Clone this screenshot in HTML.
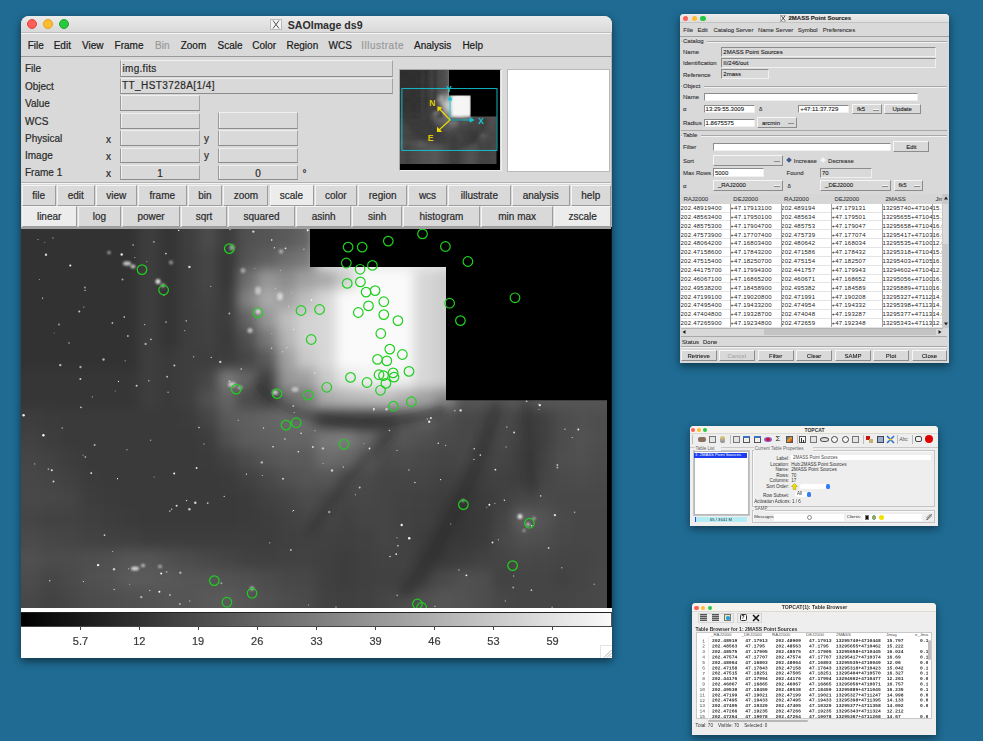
<!DOCTYPE html><html><head><meta charset="utf-8"><style>
html,body{margin:0;padding:0;overflow:hidden;}
body{width:983px;height:741px;overflow:hidden;background:#1f6b93;position:relative;font-family:"Liberation Sans", sans-serif;}
div{box-sizing:border-box;}
</style></head><body>
<div style="-webkit-text-stroke:0.2px currentColor">
<div style="position:absolute;left:21px;top:16px;width:591px;height:642px;border-radius:8px 8px 0 0;box-shadow:0 3px 9px 0px rgba(0,0,0,0.55);background:#d9d9d9;"></div>
<div style="position:absolute;left:21px;top:16px;width:591px;height:17px;border-radius:8px 8px 0 0;background:linear-gradient(#ebebeb,#d9d9d9);border-bottom:1px solid #bdbdbd;"></div>
<div style="position:absolute;left:27.1px;top:19.2px;width:10px;height:10px;border-radius:50%;background:#fe5f57;border:0.6px solid #e2463f;"></div>
<div style="position:absolute;left:43px;top:19.2px;width:10px;height:10px;border-radius:50%;background:#febc2e;border:0.6px solid #e1a116;"></div>
<div style="position:absolute;left:58.8px;top:19.2px;width:10px;height:10px;border-radius:50%;background:#28c840;border:0.6px solid #1aab29;"></div>
<svg style="position:absolute;left:270px;top:19px" width="12" height="11" viewBox="0 0 12 11"><rect x="0.5" y="0.5" width="11" height="10" fill="#f4f4f4" stroke="#bbb" stroke-width="1"/><path d="M3 1.5 L9 9.5 M9 1.5 L3 9.5" stroke="#555" stroke-width="1"/></svg>
<div style="position:absolute;left:287.8px;top:20px;font-size:10.6px;line-height:10.6px;color:#2e2e2e;white-space:pre;font-weight:bold;-webkit-text-stroke:0;">SAOImage ds9</div>
<div style="position:absolute;left:21px;top:33px;width:591px;height:24px;background:#d9d9d9;border-bottom:1px solid #9a9a9a;border-top:1px solid #f6f6f6;"></div>
<div style="position:absolute;left:27.7px;top:41.3px;font-size:10px;line-height:10px;color:#1a1a1a;white-space:pre;">File</div>
<div style="position:absolute;left:53.7px;top:41.3px;font-size:10px;line-height:10px;color:#1a1a1a;white-space:pre;">Edit</div>
<div style="position:absolute;left:82px;top:41.3px;font-size:10px;line-height:10px;color:#1a1a1a;white-space:pre;">View</div>
<div style="position:absolute;left:114.6px;top:41.3px;font-size:10px;line-height:10px;color:#1a1a1a;white-space:pre;">Frame</div>
<div style="position:absolute;left:155px;top:41.3px;font-size:10px;line-height:10px;color:#9a9a9a;white-space:pre;">Bin</div>
<div style="position:absolute;left:180.7px;top:41.3px;font-size:10px;line-height:10px;color:#1a1a1a;white-space:pre;">Zoom</div>
<div style="position:absolute;left:217.5px;top:41.3px;font-size:10px;line-height:10px;color:#1a1a1a;white-space:pre;">Scale</div>
<div style="position:absolute;left:252.3px;top:41.3px;font-size:10px;line-height:10px;color:#1a1a1a;white-space:pre;">Color</div>
<div style="position:absolute;left:286.5px;top:41.3px;font-size:10px;line-height:10px;color:#1a1a1a;white-space:pre;">Region</div>
<div style="position:absolute;left:328.6px;top:41.3px;font-size:10px;line-height:10px;color:#1a1a1a;white-space:pre;">WCS</div>
<div style="position:absolute;left:361.2px;top:41.3px;font-size:10px;line-height:10px;color:#9a9a9a;white-space:pre;letter-spacing:0.5px;">Illustrate</div>
<div style="position:absolute;left:414px;top:41.3px;font-size:10px;line-height:10px;color:#1a1a1a;white-space:pre;">Analysis</div>
<div style="position:absolute;left:462.4px;top:41.3px;font-size:10px;line-height:10px;color:#1a1a1a;white-space:pre;">Help</div>
<div style="position:absolute;left:25px;top:64.0px;font-size:10px;line-height:10px;color:#2a2a2a;white-space:pre;">File</div>
<div style="position:absolute;left:25px;top:81.7px;font-size:10px;line-height:10px;color:#2a2a2a;white-space:pre;">Object</div>
<div style="position:absolute;left:25px;top:98.6px;font-size:10px;line-height:10px;color:#2a2a2a;white-space:pre;">Value</div>
<div style="position:absolute;left:25px;top:116.5px;font-size:10px;line-height:10px;color:#2a2a2a;white-space:pre;">WCS</div>
<div style="position:absolute;left:25px;top:134.0px;font-size:10px;line-height:10px;color:#2a2a2a;white-space:pre;">Physical</div>
<div style="position:absolute;left:25px;top:151.0px;font-size:10px;line-height:10px;color:#2a2a2a;white-space:pre;">Image</div>
<div style="position:absolute;left:25px;top:168.2px;font-size:10px;line-height:10px;color:#2a2a2a;white-space:pre;">Frame 1</div>
<div style="position:absolute;left:119.5px;top:59.5px;width:273px;height:17px;background:#d9d9d9;border-top:1px solid #efefef;border-left:1px solid #9a9a9a;border-bottom:1px solid #8c8c8c;border-right:1px solid #a4a4a4;box-shadow:inset 1px 0 0 #efefef;"></div>
<div style="position:absolute;left:119.5px;top:77.5px;width:273px;height:16.5px;background:#d9d9d9;border-top:1px solid #efefef;border-left:1px solid #9a9a9a;border-bottom:1px solid #8c8c8c;border-right:1px solid #a4a4a4;box-shadow:inset 1px 0 0 #efefef;"></div>
<div style="position:absolute;left:122.5px;top:63.8px;font-size:10px;line-height:10px;color:#2a2a2a;white-space:pre;letter-spacing:0.3px;">img.fits</div>
<div style="position:absolute;left:122px;top:81.3px;font-size:10px;line-height:10px;color:#2a2a2a;white-space:pre;letter-spacing:0.42px;">TT_HST3728A[1/4]</div>
<div style="position:absolute;left:119.5px;top:95px;width:80.5px;height:15.5px;background:#d9d9d9;border-top:1px solid #efefef;border-left:1px solid #9a9a9a;border-bottom:1px solid #8c8c8c;border-right:1px solid #a4a4a4;box-shadow:inset 1px 0 0 #efefef;"></div>
<div style="position:absolute;left:119.5px;top:112.5px;width:80.5px;height:16.0px;background:#d9d9d9;border-top:1px solid #efefef;border-left:1px solid #9a9a9a;border-bottom:1px solid #8c8c8c;border-right:1px solid #a4a4a4;box-shadow:inset 1px 0 0 #efefef;"></div>
<div style="position:absolute;left:119.5px;top:130px;width:80.5px;height:16px;background:#d9d9d9;border-top:1px solid #efefef;border-left:1px solid #9a9a9a;border-bottom:1px solid #8c8c8c;border-right:1px solid #a4a4a4;box-shadow:inset 1px 0 0 #efefef;"></div>
<div style="position:absolute;left:119.5px;top:147.5px;width:80.5px;height:15.5px;background:#d9d9d9;border-top:1px solid #efefef;border-left:1px solid #9a9a9a;border-bottom:1px solid #8c8c8c;border-right:1px solid #a4a4a4;box-shadow:inset 1px 0 0 #efefef;"></div>
<div style="position:absolute;left:119.5px;top:164.5px;width:80.5px;height:15.5px;background:#d9d9d9;border-top:1px solid #efefef;border-left:1px solid #9a9a9a;border-bottom:1px solid #8c8c8c;border-right:1px solid #a4a4a4;box-shadow:inset 1px 0 0 #efefef;"></div>
<div style="position:absolute;left:217.5px;top:111.5px;width:80.5px;height:17.0px;background:#d9d9d9;border-top:1px solid #efefef;border-left:1px solid #9a9a9a;border-bottom:1px solid #8c8c8c;border-right:1px solid #a4a4a4;box-shadow:inset 1px 0 0 #efefef;"></div>
<div style="position:absolute;left:217.5px;top:130px;width:80.5px;height:16px;background:#d9d9d9;border-top:1px solid #efefef;border-left:1px solid #9a9a9a;border-bottom:1px solid #8c8c8c;border-right:1px solid #a4a4a4;box-shadow:inset 1px 0 0 #efefef;"></div>
<div style="position:absolute;left:217.5px;top:147.5px;width:80.5px;height:15.5px;background:#d9d9d9;border-top:1px solid #efefef;border-left:1px solid #9a9a9a;border-bottom:1px solid #8c8c8c;border-right:1px solid #a4a4a4;box-shadow:inset 1px 0 0 #efefef;"></div>
<div style="position:absolute;left:217.5px;top:164.5px;width:80.5px;height:15.5px;background:#d9d9d9;border-top:1px solid #efefef;border-left:1px solid #9a9a9a;border-bottom:1px solid #8c8c8c;border-right:1px solid #a4a4a4;box-shadow:inset 1px 0 0 #efefef;"></div>
<div style="position:absolute;left:106px;top:134.5px;font-size:10px;line-height:10px;color:#2a2a2a;white-space:pre;">x</div>
<div style="position:absolute;left:106px;top:151.5px;font-size:10px;line-height:10px;color:#2a2a2a;white-space:pre;">x</div>
<div style="position:absolute;left:106px;top:168.7px;font-size:10px;line-height:10px;color:#2a2a2a;white-space:pre;">x</div>
<div style="position:absolute;left:204px;top:134px;font-size:10px;line-height:10px;color:#2a2a2a;white-space:pre;">y</div>
<div style="position:absolute;left:204px;top:151px;font-size:10px;line-height:10px;color:#2a2a2a;white-space:pre;">y</div>
<div style="position:absolute;left:-40px;top:168.5px;width:400px;text-align:center;font-size:10px;line-height:10px;color:#2a2a2a;white-space:pre;">1</div>
<div style="position:absolute;left:58px;top:168.5px;width:400px;text-align:center;font-size:10px;line-height:10px;color:#2a2a2a;white-space:pre;">0</div>
<div style="position:absolute;left:302.5px;top:169px;font-size:10px;line-height:10px;color:#2a2a2a;white-space:pre;">°</div>
<div style="position:absolute;left:398.5px;top:68.5px;width:103px;height:102px;background:#d9d9d9;border-top:1px solid #a8a8a8;border-left:1px solid #a8a8a8;border-right:1px solid #f0f0f0;border-bottom:1px solid #f0f0f0;"></div>
<svg style="position:absolute;left:400px;top:70px" width="100" height="100" viewBox="0 0 100 100">
<defs><filter id="pb" x="-20%" y="-20%" width="140%" height="140%"><feGaussianBlur stdDeviation="3"/></filter><filter id="pb2" x="-50%" y="-50%" width="200%" height="200%"><feGaussianBlur stdDeviation="0.9"/></filter></defs>
<rect width="100" height="100" fill="rgb(62,62,62)"/>
<g filter="url(#pb2)"><rect x="-1.27" y="-0.92" width="3.27" height="3.35" fill="rgb(45,45,45)"/><rect x="1.90" y="-0.92" width="3.27" height="3.35" fill="rgb(45,45,45)"/><rect x="5.07" y="-0.92" width="3.27" height="3.35" fill="rgb(45,45,45)"/><rect x="8.24" y="-0.92" width="3.27" height="3.35" fill="rgb(45,45,45)"/><rect x="11.41" y="-0.92" width="3.27" height="3.35" fill="rgb(45,45,45)"/><rect x="14.58" y="-0.92" width="3.27" height="3.35" fill="rgb(45,45,45)"/><rect x="17.75" y="-0.92" width="3.27" height="3.35" fill="rgb(45,45,45)"/><rect x="20.92" y="-0.92" width="3.27" height="3.35" fill="rgb(55,55,55)"/><rect x="24.09" y="-0.92" width="3.27" height="3.35" fill="rgb(46,46,46)"/><rect x="27.26" y="-0.92" width="3.27" height="3.35" fill="rgb(55,55,55)"/><rect x="30.43" y="-0.92" width="3.27" height="3.35" fill="rgb(67,67,67)"/><rect x="33.60" y="-0.92" width="3.27" height="3.35" fill="rgb(54,54,54)"/><rect x="36.77" y="-0.92" width="3.27" height="3.35" fill="rgb(72,72,72)"/><rect x="39.94" y="-0.92" width="3.27" height="3.35" fill="rgb(76,76,76)"/><rect x="43.11" y="-0.92" width="3.27" height="3.35" fill="rgb(81,81,81)"/><rect x="46.28" y="-0.92" width="3.27" height="3.35" fill="rgb(90,90,90)"/><rect x="49.45" y="-0.92" width="3.27" height="3.35" fill="rgb(150,150,150)"/><rect x="52.62" y="-0.92" width="3.27" height="3.35" fill="rgb(150,150,150)"/><rect x="55.79" y="-0.92" width="3.27" height="3.35" fill="rgb(150,150,150)"/><rect x="58.96" y="-0.92" width="3.27" height="3.35" fill="rgb(150,150,150)"/><rect x="62.13" y="-0.92" width="3.27" height="3.35" fill="rgb(150,150,150)"/><rect x="65.30" y="-0.92" width="3.27" height="3.35" fill="rgb(150,150,150)"/><rect x="68.47" y="-0.92" width="3.27" height="3.35" fill="rgb(150,150,150)"/><rect x="71.64" y="-0.92" width="3.27" height="3.35" fill="rgb(150,150,150)"/><rect x="74.81" y="-0.92" width="3.27" height="3.35" fill="rgb(150,150,150)"/><rect x="77.98" y="-0.92" width="3.27" height="3.35" fill="rgb(150,150,150)"/><rect x="81.15" y="-0.92" width="3.27" height="3.35" fill="rgb(150,150,150)"/><rect x="84.32" y="-0.92" width="3.27" height="3.35" fill="rgb(150,150,150)"/><rect x="87.49" y="-0.92" width="3.27" height="3.35" fill="rgb(150,150,150)"/><rect x="90.66" y="-0.92" width="3.27" height="3.35" fill="rgb(150,150,150)"/><rect x="93.83" y="-0.92" width="3.27" height="3.35" fill="rgb(150,150,150)"/><rect x="97.00" y="-0.92" width="3.27" height="3.35" fill="rgb(150,150,150)"/><rect x="-1.27" y="2.34" width="3.27" height="3.35" fill="rgb(45,45,45)"/><rect x="1.90" y="2.34" width="3.27" height="3.35" fill="rgb(45,45,45)"/><rect x="5.07" y="2.34" width="3.27" height="3.35" fill="rgb(45,45,45)"/><rect x="8.24" y="2.34" width="3.27" height="3.35" fill="rgb(45,45,45)"/><rect x="11.41" y="2.34" width="3.27" height="3.35" fill="rgb(45,45,45)"/><rect x="14.58" y="2.34" width="3.27" height="3.35" fill="rgb(45,45,45)"/><rect x="17.75" y="2.34" width="3.27" height="3.35" fill="rgb(45,45,45)"/><rect x="20.92" y="2.34" width="3.27" height="3.35" fill="rgb(55,55,55)"/><rect x="24.09" y="2.34" width="3.27" height="3.35" fill="rgb(46,46,46)"/><rect x="27.26" y="2.34" width="3.27" height="3.35" fill="rgb(55,55,55)"/><rect x="30.43" y="2.34" width="3.27" height="3.35" fill="rgb(67,67,67)"/><rect x="33.60" y="2.34" width="3.27" height="3.35" fill="rgb(54,54,54)"/><rect x="36.77" y="2.34" width="3.27" height="3.35" fill="rgb(72,72,72)"/><rect x="39.94" y="2.34" width="3.27" height="3.35" fill="rgb(76,76,76)"/><rect x="43.11" y="2.34" width="3.27" height="3.35" fill="rgb(81,81,81)"/><rect x="46.28" y="2.34" width="3.27" height="3.35" fill="rgb(90,90,90)"/><rect x="49.45" y="2.34" width="3.27" height="3.35" fill="rgb(150,150,150)"/><rect x="52.62" y="2.34" width="3.27" height="3.35" fill="rgb(150,150,150)"/><rect x="55.79" y="2.34" width="3.27" height="3.35" fill="rgb(150,150,150)"/><rect x="58.96" y="2.34" width="3.27" height="3.35" fill="rgb(150,150,150)"/><rect x="62.13" y="2.34" width="3.27" height="3.35" fill="rgb(150,150,150)"/><rect x="65.30" y="2.34" width="3.27" height="3.35" fill="rgb(150,150,150)"/><rect x="68.47" y="2.34" width="3.27" height="3.35" fill="rgb(150,150,150)"/><rect x="71.64" y="2.34" width="3.27" height="3.35" fill="rgb(150,150,150)"/><rect x="74.81" y="2.34" width="3.27" height="3.35" fill="rgb(150,150,150)"/><rect x="77.98" y="2.34" width="3.27" height="3.35" fill="rgb(150,150,150)"/><rect x="81.15" y="2.34" width="3.27" height="3.35" fill="rgb(150,150,150)"/><rect x="84.32" y="2.34" width="3.27" height="3.35" fill="rgb(150,150,150)"/><rect x="87.49" y="2.34" width="3.27" height="3.35" fill="rgb(150,150,150)"/><rect x="90.66" y="2.34" width="3.27" height="3.35" fill="rgb(150,150,150)"/><rect x="93.83" y="2.34" width="3.27" height="3.35" fill="rgb(150,150,150)"/><rect x="97.00" y="2.34" width="3.27" height="3.35" fill="rgb(150,150,150)"/><rect x="-1.27" y="5.59" width="3.27" height="3.35" fill="rgb(45,45,45)"/><rect x="1.90" y="5.59" width="3.27" height="3.35" fill="rgb(45,45,45)"/><rect x="5.07" y="5.59" width="3.27" height="3.35" fill="rgb(45,45,45)"/><rect x="8.24" y="5.59" width="3.27" height="3.35" fill="rgb(45,45,45)"/><rect x="11.41" y="5.59" width="3.27" height="3.35" fill="rgb(45,45,45)"/><rect x="14.58" y="5.59" width="3.27" height="3.35" fill="rgb(45,45,45)"/><rect x="17.75" y="5.59" width="3.27" height="3.35" fill="rgb(45,45,45)"/><rect x="20.92" y="5.59" width="3.27" height="3.35" fill="rgb(55,55,55)"/><rect x="24.09" y="5.59" width="3.27" height="3.35" fill="rgb(46,46,46)"/><rect x="27.26" y="5.59" width="3.27" height="3.35" fill="rgb(55,55,55)"/><rect x="30.43" y="5.59" width="3.27" height="3.35" fill="rgb(67,67,67)"/><rect x="33.60" y="5.59" width="3.27" height="3.35" fill="rgb(54,54,54)"/><rect x="36.77" y="5.59" width="3.27" height="3.35" fill="rgb(72,72,72)"/><rect x="39.94" y="5.59" width="3.27" height="3.35" fill="rgb(76,76,76)"/><rect x="43.11" y="5.59" width="3.27" height="3.35" fill="rgb(81,81,81)"/><rect x="46.28" y="5.59" width="3.27" height="3.35" fill="rgb(90,90,90)"/><rect x="49.45" y="5.59" width="3.27" height="3.35" fill="rgb(150,150,150)"/><rect x="52.62" y="5.59" width="3.27" height="3.35" fill="rgb(150,150,150)"/><rect x="55.79" y="5.59" width="3.27" height="3.35" fill="rgb(150,150,150)"/><rect x="58.96" y="5.59" width="3.27" height="3.35" fill="rgb(150,150,150)"/><rect x="62.13" y="5.59" width="3.27" height="3.35" fill="rgb(150,150,150)"/><rect x="65.30" y="5.59" width="3.27" height="3.35" fill="rgb(150,150,150)"/><rect x="68.47" y="5.59" width="3.27" height="3.35" fill="rgb(150,150,150)"/><rect x="71.64" y="5.59" width="3.27" height="3.35" fill="rgb(150,150,150)"/><rect x="74.81" y="5.59" width="3.27" height="3.35" fill="rgb(150,150,150)"/><rect x="77.98" y="5.59" width="3.27" height="3.35" fill="rgb(150,150,150)"/><rect x="81.15" y="5.59" width="3.27" height="3.35" fill="rgb(150,150,150)"/><rect x="84.32" y="5.59" width="3.27" height="3.35" fill="rgb(150,150,150)"/><rect x="87.49" y="5.59" width="3.27" height="3.35" fill="rgb(150,150,150)"/><rect x="90.66" y="5.59" width="3.27" height="3.35" fill="rgb(150,150,150)"/><rect x="93.83" y="5.59" width="3.27" height="3.35" fill="rgb(150,150,150)"/><rect x="97.00" y="5.59" width="3.27" height="3.35" fill="rgb(150,150,150)"/><rect x="-1.27" y="8.84" width="3.27" height="3.35" fill="rgb(45,45,45)"/><rect x="1.90" y="8.84" width="3.27" height="3.35" fill="rgb(45,45,45)"/><rect x="5.07" y="8.84" width="3.27" height="3.35" fill="rgb(45,45,45)"/><rect x="8.24" y="8.84" width="3.27" height="3.35" fill="rgb(45,45,45)"/><rect x="11.41" y="8.84" width="3.27" height="3.35" fill="rgb(45,45,45)"/><rect x="14.58" y="8.84" width="3.27" height="3.35" fill="rgb(45,45,45)"/><rect x="17.75" y="8.84" width="3.27" height="3.35" fill="rgb(45,45,45)"/><rect x="20.92" y="8.84" width="3.27" height="3.35" fill="rgb(55,55,55)"/><rect x="24.09" y="8.84" width="3.27" height="3.35" fill="rgb(46,46,46)"/><rect x="27.26" y="8.84" width="3.27" height="3.35" fill="rgb(55,55,55)"/><rect x="30.43" y="8.84" width="3.27" height="3.35" fill="rgb(67,67,67)"/><rect x="33.60" y="8.84" width="3.27" height="3.35" fill="rgb(54,54,54)"/><rect x="36.77" y="8.84" width="3.27" height="3.35" fill="rgb(72,72,72)"/><rect x="39.94" y="8.84" width="3.27" height="3.35" fill="rgb(76,76,76)"/><rect x="43.11" y="8.84" width="3.27" height="3.35" fill="rgb(81,81,81)"/><rect x="46.28" y="8.84" width="3.27" height="3.35" fill="rgb(90,90,90)"/><rect x="49.45" y="8.84" width="3.27" height="3.35" fill="rgb(150,150,150)"/><rect x="52.62" y="8.84" width="3.27" height="3.35" fill="rgb(150,150,150)"/><rect x="55.79" y="8.84" width="3.27" height="3.35" fill="rgb(150,150,150)"/><rect x="58.96" y="8.84" width="3.27" height="3.35" fill="rgb(150,150,150)"/><rect x="62.13" y="8.84" width="3.27" height="3.35" fill="rgb(150,150,150)"/><rect x="65.30" y="8.84" width="3.27" height="3.35" fill="rgb(150,150,150)"/><rect x="68.47" y="8.84" width="3.27" height="3.35" fill="rgb(150,150,150)"/><rect x="71.64" y="8.84" width="3.27" height="3.35" fill="rgb(150,150,150)"/><rect x="74.81" y="8.84" width="3.27" height="3.35" fill="rgb(150,150,150)"/><rect x="77.98" y="8.84" width="3.27" height="3.35" fill="rgb(150,150,150)"/><rect x="81.15" y="8.84" width="3.27" height="3.35" fill="rgb(150,150,150)"/><rect x="84.32" y="8.84" width="3.27" height="3.35" fill="rgb(150,150,150)"/><rect x="87.49" y="8.84" width="3.27" height="3.35" fill="rgb(150,150,150)"/><rect x="90.66" y="8.84" width="3.27" height="3.35" fill="rgb(150,150,150)"/><rect x="93.83" y="8.84" width="3.27" height="3.35" fill="rgb(150,150,150)"/><rect x="97.00" y="8.84" width="3.27" height="3.35" fill="rgb(150,150,150)"/><rect x="-1.27" y="12.09" width="3.27" height="3.35" fill="rgb(45,45,45)"/><rect x="1.90" y="12.09" width="3.27" height="3.35" fill="rgb(45,45,45)"/><rect x="5.07" y="12.09" width="3.27" height="3.35" fill="rgb(45,45,45)"/><rect x="8.24" y="12.09" width="3.27" height="3.35" fill="rgb(45,45,45)"/><rect x="11.41" y="12.09" width="3.27" height="3.35" fill="rgb(45,45,45)"/><rect x="14.58" y="12.09" width="3.27" height="3.35" fill="rgb(45,45,45)"/><rect x="17.75" y="12.09" width="3.27" height="3.35" fill="rgb(45,45,45)"/><rect x="20.92" y="12.09" width="3.27" height="3.35" fill="rgb(55,55,55)"/><rect x="24.09" y="12.09" width="3.27" height="3.35" fill="rgb(46,46,46)"/><rect x="27.26" y="12.09" width="3.27" height="3.35" fill="rgb(55,55,55)"/><rect x="30.43" y="12.09" width="3.27" height="3.35" fill="rgb(67,67,67)"/><rect x="33.60" y="12.09" width="3.27" height="3.35" fill="rgb(54,54,54)"/><rect x="36.77" y="12.09" width="3.27" height="3.35" fill="rgb(72,72,72)"/><rect x="39.94" y="12.09" width="3.27" height="3.35" fill="rgb(76,76,76)"/><rect x="43.11" y="12.09" width="3.27" height="3.35" fill="rgb(81,81,81)"/><rect x="46.28" y="12.09" width="3.27" height="3.35" fill="rgb(90,90,90)"/><rect x="49.45" y="12.09" width="3.27" height="3.35" fill="rgb(150,150,150)"/><rect x="52.62" y="12.09" width="3.27" height="3.35" fill="rgb(150,150,150)"/><rect x="55.79" y="12.09" width="3.27" height="3.35" fill="rgb(150,150,150)"/><rect x="58.96" y="12.09" width="3.27" height="3.35" fill="rgb(150,150,150)"/><rect x="62.13" y="12.09" width="3.27" height="3.35" fill="rgb(150,150,150)"/><rect x="65.30" y="12.09" width="3.27" height="3.35" fill="rgb(150,150,150)"/><rect x="68.47" y="12.09" width="3.27" height="3.35" fill="rgb(150,150,150)"/><rect x="71.64" y="12.09" width="3.27" height="3.35" fill="rgb(150,150,150)"/><rect x="74.81" y="12.09" width="3.27" height="3.35" fill="rgb(150,150,150)"/><rect x="77.98" y="12.09" width="3.27" height="3.35" fill="rgb(150,150,150)"/><rect x="81.15" y="12.09" width="3.27" height="3.35" fill="rgb(150,150,150)"/><rect x="84.32" y="12.09" width="3.27" height="3.35" fill="rgb(150,150,150)"/><rect x="87.49" y="12.09" width="3.27" height="3.35" fill="rgb(150,150,150)"/><rect x="90.66" y="12.09" width="3.27" height="3.35" fill="rgb(150,150,150)"/><rect x="93.83" y="12.09" width="3.27" height="3.35" fill="rgb(150,150,150)"/><rect x="97.00" y="12.09" width="3.27" height="3.35" fill="rgb(150,150,150)"/><rect x="-1.27" y="15.35" width="3.27" height="3.35" fill="rgb(45,45,45)"/><rect x="1.90" y="15.35" width="3.27" height="3.35" fill="rgb(45,45,45)"/><rect x="5.07" y="15.35" width="3.27" height="3.35" fill="rgb(45,45,45)"/><rect x="8.24" y="15.35" width="3.27" height="3.35" fill="rgb(45,45,45)"/><rect x="11.41" y="15.35" width="3.27" height="3.35" fill="rgb(45,45,45)"/><rect x="14.58" y="15.35" width="3.27" height="3.35" fill="rgb(45,45,45)"/><rect x="17.75" y="15.35" width="3.27" height="3.35" fill="rgb(45,45,45)"/><rect x="20.92" y="15.35" width="3.27" height="3.35" fill="rgb(55,55,55)"/><rect x="24.09" y="15.35" width="3.27" height="3.35" fill="rgb(46,46,46)"/><rect x="27.26" y="15.35" width="3.27" height="3.35" fill="rgb(55,55,55)"/><rect x="30.43" y="15.35" width="3.27" height="3.35" fill="rgb(67,67,67)"/><rect x="33.60" y="15.35" width="3.27" height="3.35" fill="rgb(54,54,54)"/><rect x="36.77" y="15.35" width="3.27" height="3.35" fill="rgb(72,72,72)"/><rect x="39.94" y="15.35" width="3.27" height="3.35" fill="rgb(76,76,76)"/><rect x="43.11" y="15.35" width="3.27" height="3.35" fill="rgb(81,81,81)"/><rect x="46.28" y="15.35" width="3.27" height="3.35" fill="rgb(90,90,90)"/><rect x="49.45" y="15.35" width="3.27" height="3.35" fill="rgb(150,150,150)"/><rect x="52.62" y="15.35" width="3.27" height="3.35" fill="rgb(150,150,150)"/><rect x="55.79" y="15.35" width="3.27" height="3.35" fill="rgb(150,150,150)"/><rect x="58.96" y="15.35" width="3.27" height="3.35" fill="rgb(150,150,150)"/><rect x="62.13" y="15.35" width="3.27" height="3.35" fill="rgb(150,150,150)"/><rect x="65.30" y="15.35" width="3.27" height="3.35" fill="rgb(150,150,150)"/><rect x="68.47" y="15.35" width="3.27" height="3.35" fill="rgb(150,150,150)"/><rect x="71.64" y="15.35" width="3.27" height="3.35" fill="rgb(150,150,150)"/><rect x="74.81" y="15.35" width="3.27" height="3.35" fill="rgb(150,150,150)"/><rect x="77.98" y="15.35" width="3.27" height="3.35" fill="rgb(150,150,150)"/><rect x="81.15" y="15.35" width="3.27" height="3.35" fill="rgb(150,150,150)"/><rect x="84.32" y="15.35" width="3.27" height="3.35" fill="rgb(150,150,150)"/><rect x="87.49" y="15.35" width="3.27" height="3.35" fill="rgb(150,150,150)"/><rect x="90.66" y="15.35" width="3.27" height="3.35" fill="rgb(150,150,150)"/><rect x="93.83" y="15.35" width="3.27" height="3.35" fill="rgb(150,150,150)"/><rect x="97.00" y="15.35" width="3.27" height="3.35" fill="rgb(150,150,150)"/><rect x="-1.27" y="18.60" width="3.27" height="3.35" fill="rgb(50,50,50)"/><rect x="1.90" y="18.60" width="3.27" height="3.35" fill="rgb(50,50,50)"/><rect x="5.07" y="18.60" width="3.27" height="3.35" fill="rgb(50,50,50)"/><rect x="8.24" y="18.60" width="3.27" height="3.35" fill="rgb(50,50,50)"/><rect x="11.41" y="18.60" width="3.27" height="3.35" fill="rgb(50,50,50)"/><rect x="14.58" y="18.60" width="3.27" height="3.35" fill="rgb(50,50,50)"/><rect x="17.75" y="18.60" width="3.27" height="3.35" fill="rgb(50,50,50)"/><rect x="20.92" y="18.60" width="3.27" height="3.35" fill="rgb(62,62,62)"/><rect x="24.09" y="18.60" width="3.27" height="3.35" fill="rgb(52,52,52)"/><rect x="27.26" y="18.60" width="3.27" height="3.35" fill="rgb(62,62,62)"/><rect x="30.43" y="18.60" width="3.27" height="3.35" fill="rgb(75,75,75)"/><rect x="33.60" y="18.60" width="3.27" height="3.35" fill="rgb(60,60,60)"/><rect x="36.77" y="18.60" width="3.27" height="3.35" fill="rgb(80,80,80)"/><rect x="39.94" y="18.60" width="3.27" height="3.35" fill="rgb(85,85,85)"/><rect x="43.11" y="18.60" width="3.27" height="3.35" fill="rgb(90,90,90)"/><rect x="46.28" y="18.60" width="3.27" height="3.35" fill="rgb(100,100,100)"/><rect x="49.45" y="18.60" width="3.27" height="3.35" fill="rgb(230,230,230)"/><rect x="52.62" y="18.60" width="3.27" height="3.35" fill="rgb(230,230,230)"/><rect x="55.79" y="18.60" width="3.27" height="3.35" fill="rgb(230,230,230)"/><rect x="58.96" y="18.60" width="3.27" height="3.35" fill="rgb(230,230,230)"/><rect x="62.13" y="18.60" width="3.27" height="3.35" fill="rgb(230,230,230)"/><rect x="65.30" y="18.60" width="3.27" height="3.35" fill="rgb(235,235,235)"/><rect x="68.47" y="18.60" width="3.27" height="3.35" fill="rgb(235,235,235)"/><rect x="71.64" y="18.60" width="3.27" height="3.35" fill="rgb(200,200,200)"/><rect x="74.81" y="18.60" width="3.27" height="3.35" fill="rgb(150,150,150)"/><rect x="77.98" y="18.60" width="3.27" height="3.35" fill="rgb(150,150,150)"/><rect x="81.15" y="18.60" width="3.27" height="3.35" fill="rgb(150,150,150)"/><rect x="84.32" y="18.60" width="3.27" height="3.35" fill="rgb(150,150,150)"/><rect x="87.49" y="18.60" width="3.27" height="3.35" fill="rgb(150,150,150)"/><rect x="90.66" y="18.60" width="3.27" height="3.35" fill="rgb(150,150,150)"/><rect x="93.83" y="18.60" width="3.27" height="3.35" fill="rgb(150,150,150)"/><rect x="97.00" y="18.60" width="3.27" height="3.35" fill="rgb(150,150,150)"/><rect x="-1.27" y="21.85" width="3.27" height="3.35" fill="rgb(50,50,50)"/><rect x="1.90" y="21.85" width="3.27" height="3.35" fill="rgb(50,50,50)"/><rect x="5.07" y="21.85" width="3.27" height="3.35" fill="rgb(50,50,50)"/><rect x="8.24" y="21.85" width="3.27" height="3.35" fill="rgb(50,50,50)"/><rect x="11.41" y="21.85" width="3.27" height="3.35" fill="rgb(50,50,50)"/><rect x="14.58" y="21.85" width="3.27" height="3.35" fill="rgb(50,50,50)"/><rect x="17.75" y="21.85" width="3.27" height="3.35" fill="rgb(50,50,50)"/><rect x="20.92" y="21.85" width="3.27" height="3.35" fill="rgb(62,62,62)"/><rect x="24.09" y="21.85" width="3.27" height="3.35" fill="rgb(52,52,52)"/><rect x="27.26" y="21.85" width="3.27" height="3.35" fill="rgb(62,62,62)"/><rect x="30.43" y="21.85" width="3.27" height="3.35" fill="rgb(70,70,70)"/><rect x="33.60" y="21.85" width="3.27" height="3.35" fill="rgb(55,55,55)"/><rect x="36.77" y="21.85" width="3.27" height="3.35" fill="rgb(85,85,85)"/><rect x="39.94" y="21.85" width="3.27" height="3.35" fill="rgb(95,95,95)"/><rect x="43.11" y="21.85" width="3.27" height="3.35" fill="rgb(110,110,110)"/><rect x="46.28" y="21.85" width="3.27" height="3.35" fill="rgb(120,120,120)"/><rect x="49.45" y="21.85" width="3.27" height="3.35" fill="rgb(230,230,230)"/><rect x="52.62" y="21.85" width="3.27" height="3.35" fill="rgb(230,230,230)"/><rect x="55.79" y="21.85" width="3.27" height="3.35" fill="rgb(230,230,230)"/><rect x="58.96" y="21.85" width="3.27" height="3.35" fill="rgb(230,230,230)"/><rect x="62.13" y="21.85" width="3.27" height="3.35" fill="rgb(230,230,230)"/><rect x="65.30" y="21.85" width="3.27" height="3.35" fill="rgb(235,235,235)"/><rect x="68.47" y="21.85" width="3.27" height="3.35" fill="rgb(235,235,235)"/><rect x="71.64" y="21.85" width="3.27" height="3.35" fill="rgb(200,200,200)"/><rect x="74.81" y="21.85" width="3.27" height="3.35" fill="rgb(150,150,150)"/><rect x="77.98" y="21.85" width="3.27" height="3.35" fill="rgb(150,150,150)"/><rect x="81.15" y="21.85" width="3.27" height="3.35" fill="rgb(150,150,150)"/><rect x="84.32" y="21.85" width="3.27" height="3.35" fill="rgb(150,150,150)"/><rect x="87.49" y="21.85" width="3.27" height="3.35" fill="rgb(150,150,150)"/><rect x="90.66" y="21.85" width="3.27" height="3.35" fill="rgb(150,150,150)"/><rect x="93.83" y="21.85" width="3.27" height="3.35" fill="rgb(150,150,150)"/><rect x="97.00" y="21.85" width="3.27" height="3.35" fill="rgb(150,150,150)"/><rect x="-1.27" y="25.11" width="3.27" height="3.35" fill="rgb(50,50,50)"/><rect x="1.90" y="25.11" width="3.27" height="3.35" fill="rgb(50,50,50)"/><rect x="5.07" y="25.11" width="3.27" height="3.35" fill="rgb(50,50,50)"/><rect x="8.24" y="25.11" width="3.27" height="3.35" fill="rgb(50,50,50)"/><rect x="11.41" y="25.11" width="3.27" height="3.35" fill="rgb(50,50,50)"/><rect x="14.58" y="25.11" width="3.27" height="3.35" fill="rgb(50,50,50)"/><rect x="17.75" y="25.11" width="3.27" height="3.35" fill="rgb(50,50,50)"/><rect x="20.92" y="25.11" width="3.27" height="3.35" fill="rgb(62,62,62)"/><rect x="24.09" y="25.11" width="3.27" height="3.35" fill="rgb(52,52,52)"/><rect x="27.26" y="25.11" width="3.27" height="3.35" fill="rgb(62,62,62)"/><rect x="30.43" y="25.11" width="3.27" height="3.35" fill="rgb(70,70,70)"/><rect x="33.60" y="25.11" width="3.27" height="3.35" fill="rgb(55,55,55)"/><rect x="36.77" y="25.11" width="3.27" height="3.35" fill="rgb(110,110,110)"/><rect x="39.94" y="25.11" width="3.27" height="3.35" fill="rgb(150,150,150)"/><rect x="43.11" y="25.11" width="3.27" height="3.35" fill="rgb(140,140,140)"/><rect x="46.28" y="25.11" width="3.27" height="3.35" fill="rgb(160,160,160)"/><rect x="49.45" y="25.11" width="3.27" height="3.35" fill="rgb(170,170,170)"/><rect x="52.62" y="25.11" width="3.27" height="3.35" fill="rgb(205,205,205)"/><rect x="55.79" y="25.11" width="3.27" height="3.35" fill="rgb(250,250,250)"/><rect x="58.96" y="25.11" width="3.27" height="3.35" fill="rgb(250,250,250)"/><rect x="62.13" y="25.11" width="3.27" height="3.35" fill="rgb(250,250,250)"/><rect x="65.30" y="25.11" width="3.27" height="3.35" fill="rgb(215,215,215)"/><rect x="68.47" y="25.11" width="3.27" height="3.35" fill="rgb(205,205,205)"/><rect x="71.64" y="25.11" width="3.27" height="3.35" fill="rgb(220,220,220)"/><rect x="74.81" y="25.11" width="3.27" height="3.35" fill="rgb(150,150,150)"/><rect x="77.98" y="25.11" width="3.27" height="3.35" fill="rgb(150,150,150)"/><rect x="81.15" y="25.11" width="3.27" height="3.35" fill="rgb(150,150,150)"/><rect x="84.32" y="25.11" width="3.27" height="3.35" fill="rgb(150,150,150)"/><rect x="87.49" y="25.11" width="3.27" height="3.35" fill="rgb(150,150,150)"/><rect x="90.66" y="25.11" width="3.27" height="3.35" fill="rgb(150,150,150)"/><rect x="93.83" y="25.11" width="3.27" height="3.35" fill="rgb(150,150,150)"/><rect x="97.00" y="25.11" width="3.27" height="3.35" fill="rgb(150,150,150)"/><rect x="-1.27" y="28.36" width="3.27" height="3.35" fill="rgb(50,50,50)"/><rect x="1.90" y="28.36" width="3.27" height="3.35" fill="rgb(50,50,50)"/><rect x="5.07" y="28.36" width="3.27" height="3.35" fill="rgb(50,50,50)"/><rect x="8.24" y="28.36" width="3.27" height="3.35" fill="rgb(50,50,50)"/><rect x="11.41" y="28.36" width="3.27" height="3.35" fill="rgb(50,50,50)"/><rect x="14.58" y="28.36" width="3.27" height="3.35" fill="rgb(50,50,50)"/><rect x="17.75" y="28.36" width="3.27" height="3.35" fill="rgb(50,50,50)"/><rect x="20.92" y="28.36" width="3.27" height="3.35" fill="rgb(62,62,62)"/><rect x="24.09" y="28.36" width="3.27" height="3.35" fill="rgb(52,52,52)"/><rect x="27.26" y="28.36" width="3.27" height="3.35" fill="rgb(62,62,62)"/><rect x="30.43" y="28.36" width="3.27" height="3.35" fill="rgb(68,68,68)"/><rect x="33.60" y="28.36" width="3.27" height="3.35" fill="rgb(58,58,58)"/><rect x="36.77" y="28.36" width="3.27" height="3.35" fill="rgb(130,130,130)"/><rect x="39.94" y="28.36" width="3.27" height="3.35" fill="rgb(170,170,170)"/><rect x="43.11" y="28.36" width="3.27" height="3.35" fill="rgb(160,160,160)"/><rect x="46.28" y="28.36" width="3.27" height="3.35" fill="rgb(190,190,190)"/><rect x="49.45" y="28.36" width="3.27" height="3.35" fill="rgb(215,215,215)"/><rect x="52.62" y="28.36" width="3.27" height="3.35" fill="rgb(250,250,250)"/><rect x="55.79" y="28.36" width="3.27" height="3.35" fill="rgb(250,250,250)"/><rect x="58.96" y="28.36" width="3.27" height="3.35" fill="rgb(250,250,250)"/><rect x="62.13" y="28.36" width="3.27" height="3.35" fill="rgb(250,250,250)"/><rect x="65.30" y="28.36" width="3.27" height="3.35" fill="rgb(215,215,215)"/><rect x="68.47" y="28.36" width="3.27" height="3.35" fill="rgb(205,205,205)"/><rect x="71.64" y="28.36" width="3.27" height="3.35" fill="rgb(220,220,220)"/><rect x="74.81" y="28.36" width="3.27" height="3.35" fill="rgb(150,150,150)"/><rect x="77.98" y="28.36" width="3.27" height="3.35" fill="rgb(150,150,150)"/><rect x="81.15" y="28.36" width="3.27" height="3.35" fill="rgb(150,150,150)"/><rect x="84.32" y="28.36" width="3.27" height="3.35" fill="rgb(150,150,150)"/><rect x="87.49" y="28.36" width="3.27" height="3.35" fill="rgb(150,150,150)"/><rect x="90.66" y="28.36" width="3.27" height="3.35" fill="rgb(150,150,150)"/><rect x="93.83" y="28.36" width="3.27" height="3.35" fill="rgb(150,150,150)"/><rect x="97.00" y="28.36" width="3.27" height="3.35" fill="rgb(150,150,150)"/><rect x="-1.27" y="31.61" width="3.27" height="3.35" fill="rgb(50,50,50)"/><rect x="1.90" y="31.61" width="3.27" height="3.35" fill="rgb(50,50,50)"/><rect x="5.07" y="31.61" width="3.27" height="3.35" fill="rgb(50,50,50)"/><rect x="8.24" y="31.61" width="3.27" height="3.35" fill="rgb(50,50,50)"/><rect x="11.41" y="31.61" width="3.27" height="3.35" fill="rgb(50,50,50)"/><rect x="14.58" y="31.61" width="3.27" height="3.35" fill="rgb(50,50,50)"/><rect x="17.75" y="31.61" width="3.27" height="3.35" fill="rgb(50,50,50)"/><rect x="20.92" y="31.61" width="3.27" height="3.35" fill="rgb(62,62,62)"/><rect x="24.09" y="31.61" width="3.27" height="3.35" fill="rgb(52,52,52)"/><rect x="27.26" y="31.61" width="3.27" height="3.35" fill="rgb(62,62,62)"/><rect x="30.43" y="31.61" width="3.27" height="3.35" fill="rgb(65,65,65)"/><rect x="33.60" y="31.61" width="3.27" height="3.35" fill="rgb(60,60,60)"/><rect x="36.77" y="31.61" width="3.27" height="3.35" fill="rgb(100,100,100)"/><rect x="39.94" y="31.61" width="3.27" height="3.35" fill="rgb(150,150,150)"/><rect x="43.11" y="31.61" width="3.27" height="3.35" fill="rgb(190,190,190)"/><rect x="46.28" y="31.61" width="3.27" height="3.35" fill="rgb(210,210,210)"/><rect x="49.45" y="31.61" width="3.27" height="3.35" fill="rgb(215,215,215)"/><rect x="52.62" y="31.61" width="3.27" height="3.35" fill="rgb(250,250,250)"/><rect x="55.79" y="31.61" width="3.27" height="3.35" fill="rgb(250,250,250)"/><rect x="58.96" y="31.61" width="3.27" height="3.35" fill="rgb(250,250,250)"/><rect x="62.13" y="31.61" width="3.27" height="3.35" fill="rgb(250,250,250)"/><rect x="65.30" y="31.61" width="3.27" height="3.35" fill="rgb(215,215,215)"/><rect x="68.47" y="31.61" width="3.27" height="3.35" fill="rgb(205,205,205)"/><rect x="71.64" y="31.61" width="3.27" height="3.35" fill="rgb(220,220,220)"/><rect x="74.81" y="31.61" width="3.27" height="3.35" fill="rgb(150,150,150)"/><rect x="77.98" y="31.61" width="3.27" height="3.35" fill="rgb(150,150,150)"/><rect x="81.15" y="31.61" width="3.27" height="3.35" fill="rgb(150,150,150)"/><rect x="84.32" y="31.61" width="3.27" height="3.35" fill="rgb(150,150,150)"/><rect x="87.49" y="31.61" width="3.27" height="3.35" fill="rgb(150,150,150)"/><rect x="90.66" y="31.61" width="3.27" height="3.35" fill="rgb(150,150,150)"/><rect x="93.83" y="31.61" width="3.27" height="3.35" fill="rgb(150,150,150)"/><rect x="97.00" y="31.61" width="3.27" height="3.35" fill="rgb(150,150,150)"/><rect x="-1.27" y="34.86" width="3.27" height="3.35" fill="rgb(50,50,50)"/><rect x="1.90" y="34.86" width="3.27" height="3.35" fill="rgb(50,50,50)"/><rect x="5.07" y="34.86" width="3.27" height="3.35" fill="rgb(50,50,50)"/><rect x="8.24" y="34.86" width="3.27" height="3.35" fill="rgb(50,50,50)"/><rect x="11.41" y="34.86" width="3.27" height="3.35" fill="rgb(50,50,50)"/><rect x="14.58" y="34.86" width="3.27" height="3.35" fill="rgb(50,50,50)"/><rect x="17.75" y="34.86" width="3.27" height="3.35" fill="rgb(50,50,50)"/><rect x="20.92" y="34.86" width="3.27" height="3.35" fill="rgb(62,62,62)"/><rect x="24.09" y="34.86" width="3.27" height="3.35" fill="rgb(52,52,52)"/><rect x="27.26" y="34.86" width="3.27" height="3.35" fill="rgb(62,62,62)"/><rect x="30.43" y="34.86" width="3.27" height="3.35" fill="rgb(65,65,65)"/><rect x="33.60" y="34.86" width="3.27" height="3.35" fill="rgb(58,58,58)"/><rect x="36.77" y="34.86" width="3.27" height="3.35" fill="rgb(80,80,80)"/><rect x="39.94" y="34.86" width="3.27" height="3.35" fill="rgb(120,120,120)"/><rect x="43.11" y="34.86" width="3.27" height="3.35" fill="rgb(180,180,180)"/><rect x="46.28" y="34.86" width="3.27" height="3.35" fill="rgb(210,210,210)"/><rect x="49.45" y="34.86" width="3.27" height="3.35" fill="rgb(215,215,215)"/><rect x="52.62" y="34.86" width="3.27" height="3.35" fill="rgb(250,250,250)"/><rect x="55.79" y="34.86" width="3.27" height="3.35" fill="rgb(250,250,250)"/><rect x="58.96" y="34.86" width="3.27" height="3.35" fill="rgb(250,250,250)"/><rect x="62.13" y="34.86" width="3.27" height="3.35" fill="rgb(250,250,250)"/><rect x="65.30" y="34.86" width="3.27" height="3.35" fill="rgb(215,215,215)"/><rect x="68.47" y="34.86" width="3.27" height="3.35" fill="rgb(205,205,205)"/><rect x="71.64" y="34.86" width="3.27" height="3.35" fill="rgb(220,220,220)"/><rect x="74.81" y="34.86" width="3.27" height="3.35" fill="rgb(150,150,150)"/><rect x="77.98" y="34.86" width="3.27" height="3.35" fill="rgb(150,150,150)"/><rect x="81.15" y="34.86" width="3.27" height="3.35" fill="rgb(150,150,150)"/><rect x="84.32" y="34.86" width="3.27" height="3.35" fill="rgb(150,150,150)"/><rect x="87.49" y="34.86" width="3.27" height="3.35" fill="rgb(150,150,150)"/><rect x="90.66" y="34.86" width="3.27" height="3.35" fill="rgb(150,150,150)"/><rect x="93.83" y="34.86" width="3.27" height="3.35" fill="rgb(150,150,150)"/><rect x="97.00" y="34.86" width="3.27" height="3.35" fill="rgb(150,150,150)"/><rect x="-1.27" y="38.12" width="3.27" height="3.35" fill="rgb(50,50,50)"/><rect x="1.90" y="38.12" width="3.27" height="3.35" fill="rgb(50,50,50)"/><rect x="5.07" y="38.12" width="3.27" height="3.35" fill="rgb(50,50,50)"/><rect x="8.24" y="38.12" width="3.27" height="3.35" fill="rgb(50,50,50)"/><rect x="11.41" y="38.12" width="3.27" height="3.35" fill="rgb(50,50,50)"/><rect x="14.58" y="38.12" width="3.27" height="3.35" fill="rgb(50,50,50)"/><rect x="17.75" y="38.12" width="3.27" height="3.35" fill="rgb(50,50,50)"/><rect x="20.92" y="38.12" width="3.27" height="3.35" fill="rgb(62,62,62)"/><rect x="24.09" y="38.12" width="3.27" height="3.35" fill="rgb(58,58,58)"/><rect x="27.26" y="38.12" width="3.27" height="3.35" fill="rgb(62,62,62)"/><rect x="30.43" y="38.12" width="3.27" height="3.35" fill="rgb(62,62,62)"/><rect x="33.60" y="38.12" width="3.27" height="3.35" fill="rgb(60,60,60)"/><rect x="36.77" y="38.12" width="3.27" height="3.35" fill="rgb(70,70,70)"/><rect x="39.94" y="38.12" width="3.27" height="3.35" fill="rgb(90,90,90)"/><rect x="43.11" y="38.12" width="3.27" height="3.35" fill="rgb(160,160,160)"/><rect x="46.28" y="38.12" width="3.27" height="3.35" fill="rgb(200,200,200)"/><rect x="49.45" y="38.12" width="3.27" height="3.35" fill="rgb(215,215,215)"/><rect x="52.62" y="38.12" width="3.27" height="3.35" fill="rgb(250,250,250)"/><rect x="55.79" y="38.12" width="3.27" height="3.35" fill="rgb(250,250,250)"/><rect x="58.96" y="38.12" width="3.27" height="3.35" fill="rgb(250,250,250)"/><rect x="62.13" y="38.12" width="3.27" height="3.35" fill="rgb(250,250,250)"/><rect x="65.30" y="38.12" width="3.27" height="3.35" fill="rgb(215,215,215)"/><rect x="68.47" y="38.12" width="3.27" height="3.35" fill="rgb(205,205,205)"/><rect x="71.64" y="38.12" width="3.27" height="3.35" fill="rgb(220,220,220)"/><rect x="74.81" y="38.12" width="3.27" height="3.35" fill="rgb(150,150,150)"/><rect x="77.98" y="38.12" width="3.27" height="3.35" fill="rgb(150,150,150)"/><rect x="81.15" y="38.12" width="3.27" height="3.35" fill="rgb(150,150,150)"/><rect x="84.32" y="38.12" width="3.27" height="3.35" fill="rgb(150,150,150)"/><rect x="87.49" y="38.12" width="3.27" height="3.35" fill="rgb(150,150,150)"/><rect x="90.66" y="38.12" width="3.27" height="3.35" fill="rgb(150,150,150)"/><rect x="93.83" y="38.12" width="3.27" height="3.35" fill="rgb(150,150,150)"/><rect x="97.00" y="38.12" width="3.27" height="3.35" fill="rgb(150,150,150)"/><rect x="-1.27" y="41.37" width="3.27" height="3.35" fill="rgb(54,54,54)"/><rect x="1.90" y="41.37" width="3.27" height="3.35" fill="rgb(54,54,54)"/><rect x="5.07" y="41.37" width="3.27" height="3.35" fill="rgb(54,54,54)"/><rect x="8.24" y="41.37" width="3.27" height="3.35" fill="rgb(54,54,54)"/><rect x="11.41" y="41.37" width="3.27" height="3.35" fill="rgb(54,54,54)"/><rect x="14.58" y="41.37" width="3.27" height="3.35" fill="rgb(54,54,54)"/><rect x="17.75" y="41.37" width="3.27" height="3.35" fill="rgb(54,54,54)"/><rect x="20.92" y="41.37" width="3.27" height="3.35" fill="rgb(62,62,62)"/><rect x="24.09" y="41.37" width="3.27" height="3.35" fill="rgb(58,58,58)"/><rect x="27.26" y="41.37" width="3.27" height="3.35" fill="rgb(62,62,62)"/><rect x="30.43" y="41.37" width="3.27" height="3.35" fill="rgb(70,70,70)"/><rect x="33.60" y="41.37" width="3.27" height="3.35" fill="rgb(120,120,120)"/><rect x="36.77" y="41.37" width="3.27" height="3.35" fill="rgb(100,100,100)"/><rect x="39.94" y="41.37" width="3.27" height="3.35" fill="rgb(65,65,65)"/><rect x="43.11" y="41.37" width="3.27" height="3.35" fill="rgb(150,150,150)"/><rect x="46.28" y="41.37" width="3.27" height="3.35" fill="rgb(160,160,160)"/><rect x="49.45" y="41.37" width="3.27" height="3.35" fill="rgb(200,200,200)"/><rect x="52.62" y="41.37" width="3.27" height="3.35" fill="rgb(230,230,230)"/><rect x="55.79" y="41.37" width="3.27" height="3.35" fill="rgb(240,240,240)"/><rect x="58.96" y="41.37" width="3.27" height="3.35" fill="rgb(240,240,240)"/><rect x="62.13" y="41.37" width="3.27" height="3.35" fill="rgb(240,240,240)"/><rect x="65.30" y="41.37" width="3.27" height="3.35" fill="rgb(215,215,215)"/><rect x="68.47" y="41.37" width="3.27" height="3.35" fill="rgb(205,205,205)"/><rect x="71.64" y="41.37" width="3.27" height="3.35" fill="rgb(220,220,220)"/><rect x="74.81" y="41.37" width="3.27" height="3.35" fill="rgb(90,90,90)"/><rect x="77.98" y="41.37" width="3.27" height="3.35" fill="rgb(90,90,90)"/><rect x="81.15" y="41.37" width="3.27" height="3.35" fill="rgb(90,90,90)"/><rect x="84.32" y="41.37" width="3.27" height="3.35" fill="rgb(90,90,90)"/><rect x="87.49" y="41.37" width="3.27" height="3.35" fill="rgb(90,90,90)"/><rect x="90.66" y="41.37" width="3.27" height="3.35" fill="rgb(90,90,90)"/><rect x="93.83" y="41.37" width="3.27" height="3.35" fill="rgb(90,90,90)"/><rect x="97.00" y="41.37" width="3.27" height="3.35" fill="rgb(90,90,90)"/><rect x="-1.27" y="44.62" width="3.27" height="3.35" fill="rgb(54,54,54)"/><rect x="1.90" y="44.62" width="3.27" height="3.35" fill="rgb(54,54,54)"/><rect x="5.07" y="44.62" width="3.27" height="3.35" fill="rgb(54,54,54)"/><rect x="8.24" y="44.62" width="3.27" height="3.35" fill="rgb(54,54,54)"/><rect x="11.41" y="44.62" width="3.27" height="3.35" fill="rgb(54,54,54)"/><rect x="14.58" y="44.62" width="3.27" height="3.35" fill="rgb(54,54,54)"/><rect x="17.75" y="44.62" width="3.27" height="3.35" fill="rgb(54,54,54)"/><rect x="20.92" y="44.62" width="3.27" height="3.35" fill="rgb(62,62,62)"/><rect x="24.09" y="44.62" width="3.27" height="3.35" fill="rgb(58,58,58)"/><rect x="27.26" y="44.62" width="3.27" height="3.35" fill="rgb(62,62,62)"/><rect x="30.43" y="44.62" width="3.27" height="3.35" fill="rgb(80,80,80)"/><rect x="33.60" y="44.62" width="3.27" height="3.35" fill="rgb(100,100,100)"/><rect x="36.77" y="44.62" width="3.27" height="3.35" fill="rgb(75,75,75)"/><rect x="39.94" y="44.62" width="3.27" height="3.35" fill="rgb(70,70,70)"/><rect x="43.11" y="44.62" width="3.27" height="3.35" fill="rgb(110,110,110)"/><rect x="46.28" y="44.62" width="3.27" height="3.35" fill="rgb(120,120,120)"/><rect x="49.45" y="44.62" width="3.27" height="3.35" fill="rgb(170,170,170)"/><rect x="52.62" y="44.62" width="3.27" height="3.35" fill="rgb(180,180,180)"/><rect x="55.79" y="44.62" width="3.27" height="3.35" fill="rgb(185,185,185)"/><rect x="58.96" y="44.62" width="3.27" height="3.35" fill="rgb(190,190,190)"/><rect x="62.13" y="44.62" width="3.27" height="3.35" fill="rgb(175,175,175)"/><rect x="65.30" y="44.62" width="3.27" height="3.35" fill="rgb(160,160,160)"/><rect x="68.47" y="44.62" width="3.27" height="3.35" fill="rgb(140,140,140)"/><rect x="71.64" y="44.62" width="3.27" height="3.35" fill="rgb(85,85,85)"/><rect x="74.81" y="44.62" width="3.27" height="3.35" fill="rgb(85,85,85)"/><rect x="77.98" y="44.62" width="3.27" height="3.35" fill="rgb(85,85,85)"/><rect x="81.15" y="44.62" width="3.27" height="3.35" fill="rgb(85,85,85)"/><rect x="84.32" y="44.62" width="3.27" height="3.35" fill="rgb(85,85,85)"/><rect x="87.49" y="44.62" width="3.27" height="3.35" fill="rgb(85,85,85)"/><rect x="90.66" y="44.62" width="3.27" height="3.35" fill="rgb(85,85,85)"/><rect x="93.83" y="44.62" width="3.27" height="3.35" fill="rgb(85,85,85)"/><rect x="97.00" y="44.62" width="3.27" height="3.35" fill="rgb(85,85,85)"/><rect x="-1.27" y="47.87" width="3.27" height="3.35" fill="rgb(61,61,61)"/><rect x="1.90" y="47.87" width="3.27" height="3.35" fill="rgb(61,61,61)"/><rect x="5.07" y="47.87" width="3.27" height="3.35" fill="rgb(59,59,59)"/><rect x="8.24" y="47.87" width="3.27" height="3.35" fill="rgb(58,58,58)"/><rect x="11.41" y="47.87" width="3.27" height="3.35" fill="rgb(58,58,58)"/><rect x="14.58" y="47.87" width="3.27" height="3.35" fill="rgb(58,58,58)"/><rect x="17.75" y="47.87" width="3.27" height="3.35" fill="rgb(58,58,58)"/><rect x="20.92" y="47.87" width="3.27" height="3.35" fill="rgb(58,58,58)"/><rect x="24.09" y="47.87" width="3.27" height="3.35" fill="rgb(58,58,58)"/><rect x="27.26" y="47.87" width="3.27" height="3.35" fill="rgb(59,59,59)"/><rect x="30.43" y="47.87" width="3.27" height="3.35" fill="rgb(69,69,69)"/><rect x="33.60" y="47.87" width="3.27" height="3.35" fill="rgb(90,90,90)"/><rect x="36.77" y="47.87" width="3.27" height="3.35" fill="rgb(95,95,95)"/><rect x="39.94" y="47.87" width="3.27" height="3.35" fill="rgb(100,100,100)"/><rect x="43.11" y="47.87" width="3.27" height="3.35" fill="rgb(105,105,105)"/><rect x="46.28" y="47.87" width="3.27" height="3.35" fill="rgb(110,110,110)"/><rect x="49.45" y="47.87" width="3.27" height="3.35" fill="rgb(69,69,69)"/><rect x="52.62" y="47.87" width="3.27" height="3.35" fill="rgb(65,65,65)"/><rect x="55.79" y="47.87" width="3.27" height="3.35" fill="rgb(65,65,65)"/><rect x="58.96" y="47.87" width="3.27" height="3.35" fill="rgb(69,69,69)"/><rect x="62.13" y="47.87" width="3.27" height="3.35" fill="rgb(85,85,85)"/><rect x="65.30" y="47.87" width="3.27" height="3.35" fill="rgb(95,95,95)"/><rect x="68.47" y="47.87" width="3.27" height="3.35" fill="rgb(80,80,80)"/><rect x="71.64" y="47.87" width="3.27" height="3.35" fill="rgb(72,72,72)"/><rect x="74.81" y="47.87" width="3.27" height="3.35" fill="rgb(72,72,72)"/><rect x="77.98" y="47.87" width="3.27" height="3.35" fill="rgb(74,74,74)"/><rect x="81.15" y="47.87" width="3.27" height="3.35" fill="rgb(66,66,66)"/><rect x="84.32" y="47.87" width="3.27" height="3.35" fill="rgb(64,64,64)"/><rect x="87.49" y="47.87" width="3.27" height="3.35" fill="rgb(76,76,76)"/><rect x="90.66" y="47.87" width="3.27" height="3.35" fill="rgb(80,80,80)"/><rect x="93.83" y="47.87" width="3.27" height="3.35" fill="rgb(78,78,78)"/><rect x="97.00" y="47.87" width="3.27" height="3.35" fill="rgb(78,78,78)"/><rect x="-1.27" y="51.13" width="3.27" height="3.35" fill="rgb(65,65,65)"/><rect x="1.90" y="51.13" width="3.27" height="3.35" fill="rgb(65,65,65)"/><rect x="5.07" y="51.13" width="3.27" height="3.35" fill="rgb(61,61,61)"/><rect x="8.24" y="51.13" width="3.27" height="3.35" fill="rgb(58,58,58)"/><rect x="11.41" y="51.13" width="3.27" height="3.35" fill="rgb(58,58,58)"/><rect x="14.58" y="51.13" width="3.27" height="3.35" fill="rgb(58,58,58)"/><rect x="17.75" y="51.13" width="3.27" height="3.35" fill="rgb(58,58,58)"/><rect x="20.92" y="51.13" width="3.27" height="3.35" fill="rgb(58,58,58)"/><rect x="24.09" y="51.13" width="3.27" height="3.35" fill="rgb(58,58,58)"/><rect x="27.26" y="51.13" width="3.27" height="3.35" fill="rgb(58,58,58)"/><rect x="30.43" y="51.13" width="3.27" height="3.35" fill="rgb(61,61,61)"/><rect x="33.60" y="51.13" width="3.27" height="3.35" fill="rgb(80,80,80)"/><rect x="36.77" y="51.13" width="3.27" height="3.35" fill="rgb(92,92,92)"/><rect x="39.94" y="51.13" width="3.27" height="3.35" fill="rgb(95,95,95)"/><rect x="43.11" y="51.13" width="3.27" height="3.35" fill="rgb(100,100,100)"/><rect x="46.28" y="51.13" width="3.27" height="3.35" fill="rgb(100,100,100)"/><rect x="49.45" y="51.13" width="3.27" height="3.35" fill="rgb(120,120,120)"/><rect x="52.62" y="51.13" width="3.27" height="3.35" fill="rgb(125,125,125)"/><rect x="55.79" y="51.13" width="3.27" height="3.35" fill="rgb(105,105,105)"/><rect x="58.96" y="51.13" width="3.27" height="3.35" fill="rgb(80,80,80)"/><rect x="62.13" y="51.13" width="3.27" height="3.35" fill="rgb(85,85,85)"/><rect x="65.30" y="51.13" width="3.27" height="3.35" fill="rgb(80,80,80)"/><rect x="68.47" y="51.13" width="3.27" height="3.35" fill="rgb(74,74,74)"/><rect x="71.64" y="51.13" width="3.27" height="3.35" fill="rgb(72,72,72)"/><rect x="74.81" y="51.13" width="3.27" height="3.35" fill="rgb(71,71,71)"/><rect x="77.98" y="51.13" width="3.27" height="3.35" fill="rgb(72,72,72)"/><rect x="81.15" y="51.13" width="3.27" height="3.35" fill="rgb(65,65,65)"/><rect x="84.32" y="51.13" width="3.27" height="3.35" fill="rgb(64,64,64)"/><rect x="87.49" y="51.13" width="3.27" height="3.35" fill="rgb(76,76,76)"/><rect x="90.66" y="51.13" width="3.27" height="3.35" fill="rgb(82,82,82)"/><rect x="93.83" y="51.13" width="3.27" height="3.35" fill="rgb(78,78,78)"/><rect x="97.00" y="51.13" width="3.27" height="3.35" fill="rgb(78,78,78)"/><rect x="-1.27" y="54.38" width="3.27" height="3.35" fill="rgb(69,69,69)"/><rect x="1.90" y="54.38" width="3.27" height="3.35" fill="rgb(69,69,69)"/><rect x="5.07" y="54.38" width="3.27" height="3.35" fill="rgb(66,66,66)"/><rect x="8.24" y="54.38" width="3.27" height="3.35" fill="rgb(61,61,61)"/><rect x="11.41" y="54.38" width="3.27" height="3.35" fill="rgb(58,58,58)"/><rect x="14.58" y="54.38" width="3.27" height="3.35" fill="rgb(58,58,58)"/><rect x="17.75" y="54.38" width="3.27" height="3.35" fill="rgb(58,58,58)"/><rect x="20.92" y="54.38" width="3.27" height="3.35" fill="rgb(58,58,58)"/><rect x="24.09" y="54.38" width="3.27" height="3.35" fill="rgb(58,58,58)"/><rect x="27.26" y="54.38" width="3.27" height="3.35" fill="rgb(58,58,58)"/><rect x="30.43" y="54.38" width="3.27" height="3.35" fill="rgb(59,59,59)"/><rect x="33.60" y="54.38" width="3.27" height="3.35" fill="rgb(65,65,65)"/><rect x="36.77" y="54.38" width="3.27" height="3.35" fill="rgb(76,76,76)"/><rect x="39.94" y="54.38" width="3.27" height="3.35" fill="rgb(85,85,85)"/><rect x="43.11" y="54.38" width="3.27" height="3.35" fill="rgb(90,90,90)"/><rect x="46.28" y="54.38" width="3.27" height="3.35" fill="rgb(90,90,90)"/><rect x="49.45" y="54.38" width="3.27" height="3.35" fill="rgb(108,108,108)"/><rect x="52.62" y="54.38" width="3.27" height="3.35" fill="rgb(102,102,102)"/><rect x="55.79" y="54.38" width="3.27" height="3.35" fill="rgb(90,90,90)"/><rect x="58.96" y="54.38" width="3.27" height="3.35" fill="rgb(74,74,74)"/><rect x="62.13" y="54.38" width="3.27" height="3.35" fill="rgb(76,76,76)"/><rect x="65.30" y="54.38" width="3.27" height="3.35" fill="rgb(72,72,72)"/><rect x="68.47" y="54.38" width="3.27" height="3.35" fill="rgb(69,69,69)"/><rect x="71.64" y="54.38" width="3.27" height="3.35" fill="rgb(71,71,71)"/><rect x="74.81" y="54.38" width="3.27" height="3.35" fill="rgb(69,69,69)"/><rect x="77.98" y="54.38" width="3.27" height="3.35" fill="rgb(69,69,69)"/><rect x="81.15" y="54.38" width="3.27" height="3.35" fill="rgb(61,61,61)"/><rect x="84.32" y="54.38" width="3.27" height="3.35" fill="rgb(66,66,66)"/><rect x="87.49" y="54.38" width="3.27" height="3.35" fill="rgb(78,78,78)"/><rect x="90.66" y="54.38" width="3.27" height="3.35" fill="rgb(80,80,80)"/><rect x="93.83" y="54.38" width="3.27" height="3.35" fill="rgb(76,76,76)"/><rect x="97.00" y="54.38" width="3.27" height="3.35" fill="rgb(76,76,76)"/><rect x="-1.27" y="57.63" width="3.27" height="3.35" fill="rgb(71,71,71)"/><rect x="1.90" y="57.63" width="3.27" height="3.35" fill="rgb(71,71,71)"/><rect x="5.07" y="57.63" width="3.27" height="3.35" fill="rgb(69,69,69)"/><rect x="8.24" y="57.63" width="3.27" height="3.35" fill="rgb(65,65,65)"/><rect x="11.41" y="57.63" width="3.27" height="3.35" fill="rgb(59,59,59)"/><rect x="14.58" y="57.63" width="3.27" height="3.35" fill="rgb(58,58,58)"/><rect x="17.75" y="57.63" width="3.27" height="3.35" fill="rgb(58,58,58)"/><rect x="20.92" y="57.63" width="3.27" height="3.35" fill="rgb(58,58,58)"/><rect x="24.09" y="57.63" width="3.27" height="3.35" fill="rgb(58,58,58)"/><rect x="27.26" y="57.63" width="3.27" height="3.35" fill="rgb(58,58,58)"/><rect x="30.43" y="57.63" width="3.27" height="3.35" fill="rgb(58,58,58)"/><rect x="33.60" y="57.63" width="3.27" height="3.35" fill="rgb(59,59,59)"/><rect x="36.77" y="57.63" width="3.27" height="3.35" fill="rgb(65,65,65)"/><rect x="39.94" y="57.63" width="3.27" height="3.35" fill="rgb(72,72,72)"/><rect x="43.11" y="57.63" width="3.27" height="3.35" fill="rgb(80,80,80)"/><rect x="46.28" y="57.63" width="3.27" height="3.35" fill="rgb(85,85,85)"/><rect x="49.45" y="57.63" width="3.27" height="3.35" fill="rgb(85,85,85)"/><rect x="52.62" y="57.63" width="3.27" height="3.35" fill="rgb(78,78,78)"/><rect x="55.79" y="57.63" width="3.27" height="3.35" fill="rgb(74,74,74)"/><rect x="58.96" y="57.63" width="3.27" height="3.35" fill="rgb(69,69,69)"/><rect x="62.13" y="57.63" width="3.27" height="3.35" fill="rgb(69,69,69)"/><rect x="65.30" y="57.63" width="3.27" height="3.35" fill="rgb(69,69,69)"/><rect x="68.47" y="57.63" width="3.27" height="3.35" fill="rgb(65,65,65)"/><rect x="71.64" y="57.63" width="3.27" height="3.35" fill="rgb(65,65,65)"/><rect x="74.81" y="57.63" width="3.27" height="3.35" fill="rgb(64,64,64)"/><rect x="77.98" y="57.63" width="3.27" height="3.35" fill="rgb(65,65,65)"/><rect x="81.15" y="57.63" width="3.27" height="3.35" fill="rgb(61,61,61)"/><rect x="84.32" y="57.63" width="3.27" height="3.35" fill="rgb(69,69,69)"/><rect x="87.49" y="57.63" width="3.27" height="3.35" fill="rgb(74,74,74)"/><rect x="90.66" y="57.63" width="3.27" height="3.35" fill="rgb(76,76,76)"/><rect x="93.83" y="57.63" width="3.27" height="3.35" fill="rgb(74,74,74)"/><rect x="97.00" y="57.63" width="3.27" height="3.35" fill="rgb(74,74,74)"/><rect x="-1.27" y="60.88" width="3.27" height="3.35" fill="rgb(72,72,72)"/><rect x="1.90" y="60.88" width="3.27" height="3.35" fill="rgb(72,72,72)"/><rect x="5.07" y="60.88" width="3.27" height="3.35" fill="rgb(71,71,71)"/><rect x="8.24" y="60.88" width="3.27" height="3.35" fill="rgb(69,69,69)"/><rect x="11.41" y="60.88" width="3.27" height="3.35" fill="rgb(61,61,61)"/><rect x="14.58" y="60.88" width="3.27" height="3.35" fill="rgb(59,59,59)"/><rect x="17.75" y="60.88" width="3.27" height="3.35" fill="rgb(58,58,58)"/><rect x="20.92" y="60.88" width="3.27" height="3.35" fill="rgb(58,58,58)"/><rect x="24.09" y="60.88" width="3.27" height="3.35" fill="rgb(58,58,58)"/><rect x="27.26" y="60.88" width="3.27" height="3.35" fill="rgb(58,58,58)"/><rect x="30.43" y="60.88" width="3.27" height="3.35" fill="rgb(58,58,58)"/><rect x="33.60" y="60.88" width="3.27" height="3.35" fill="rgb(58,58,58)"/><rect x="36.77" y="60.88" width="3.27" height="3.35" fill="rgb(59,59,59)"/><rect x="39.94" y="60.88" width="3.27" height="3.35" fill="rgb(65,65,65)"/><rect x="43.11" y="60.88" width="3.27" height="3.35" fill="rgb(69,69,69)"/><rect x="46.28" y="60.88" width="3.27" height="3.35" fill="rgb(76,76,76)"/><rect x="49.45" y="60.88" width="3.27" height="3.35" fill="rgb(72,72,72)"/><rect x="52.62" y="60.88" width="3.27" height="3.35" fill="rgb(69,69,69)"/><rect x="55.79" y="60.88" width="3.27" height="3.35" fill="rgb(71,71,71)"/><rect x="58.96" y="60.88" width="3.27" height="3.35" fill="rgb(69,69,69)"/><rect x="62.13" y="60.88" width="3.27" height="3.35" fill="rgb(66,66,66)"/><rect x="65.30" y="60.88" width="3.27" height="3.35" fill="rgb(65,65,65)"/><rect x="68.47" y="60.88" width="3.27" height="3.35" fill="rgb(61,61,61)"/><rect x="71.64" y="60.88" width="3.27" height="3.35" fill="rgb(59,59,59)"/><rect x="74.81" y="60.88" width="3.27" height="3.35" fill="rgb(59,59,59)"/><rect x="77.98" y="60.88" width="3.27" height="3.35" fill="rgb(65,65,65)"/><rect x="81.15" y="60.88" width="3.27" height="3.35" fill="rgb(71,71,71)"/><rect x="84.32" y="60.88" width="3.27" height="3.35" fill="rgb(74,74,74)"/><rect x="87.49" y="60.88" width="3.27" height="3.35" fill="rgb(72,72,72)"/><rect x="90.66" y="60.88" width="3.27" height="3.35" fill="rgb(72,72,72)"/><rect x="93.83" y="60.88" width="3.27" height="3.35" fill="rgb(72,72,72)"/><rect x="97.00" y="60.88" width="3.27" height="3.35" fill="rgb(72,72,72)"/><rect x="-1.27" y="64.14" width="3.27" height="3.35" fill="rgb(69,69,69)"/><rect x="1.90" y="64.14" width="3.27" height="3.35" fill="rgb(69,69,69)"/><rect x="5.07" y="64.14" width="3.27" height="3.35" fill="rgb(66,66,66)"/><rect x="8.24" y="64.14" width="3.27" height="3.35" fill="rgb(66,66,66)"/><rect x="11.41" y="64.14" width="3.27" height="3.35" fill="rgb(64,64,64)"/><rect x="14.58" y="64.14" width="3.27" height="3.35" fill="rgb(61,61,61)"/><rect x="17.75" y="64.14" width="3.27" height="3.35" fill="rgb(59,59,59)"/><rect x="20.92" y="64.14" width="3.27" height="3.35" fill="rgb(58,58,58)"/><rect x="24.09" y="64.14" width="3.27" height="3.35" fill="rgb(58,58,58)"/><rect x="27.26" y="64.14" width="3.27" height="3.35" fill="rgb(58,58,58)"/><rect x="30.43" y="64.14" width="3.27" height="3.35" fill="rgb(58,58,58)"/><rect x="33.60" y="64.14" width="3.27" height="3.35" fill="rgb(58,58,58)"/><rect x="36.77" y="64.14" width="3.27" height="3.35" fill="rgb(59,59,59)"/><rect x="39.94" y="64.14" width="3.27" height="3.35" fill="rgb(61,61,61)"/><rect x="43.11" y="64.14" width="3.27" height="3.35" fill="rgb(65,65,65)"/><rect x="46.28" y="64.14" width="3.27" height="3.35" fill="rgb(69,69,69)"/><rect x="49.45" y="64.14" width="3.27" height="3.35" fill="rgb(69,69,69)"/><rect x="52.62" y="64.14" width="3.27" height="3.35" fill="rgb(65,65,65)"/><rect x="55.79" y="64.14" width="3.27" height="3.35" fill="rgb(69,69,69)"/><rect x="58.96" y="64.14" width="3.27" height="3.35" fill="rgb(69,69,69)"/><rect x="62.13" y="64.14" width="3.27" height="3.35" fill="rgb(65,65,65)"/><rect x="65.30" y="64.14" width="3.27" height="3.35" fill="rgb(64,64,64)"/><rect x="68.47" y="64.14" width="3.27" height="3.35" fill="rgb(59,59,59)"/><rect x="71.64" y="64.14" width="3.27" height="3.35" fill="rgb(56,56,56)"/><rect x="74.81" y="64.14" width="3.27" height="3.35" fill="rgb(58,58,58)"/><rect x="77.98" y="64.14" width="3.27" height="3.35" fill="rgb(69,69,69)"/><rect x="81.15" y="64.14" width="3.27" height="3.35" fill="rgb(95,95,95)"/><rect x="84.32" y="64.14" width="3.27" height="3.35" fill="rgb(85,85,85)"/><rect x="87.49" y="64.14" width="3.27" height="3.35" fill="rgb(74,74,74)"/><rect x="90.66" y="64.14" width="3.27" height="3.35" fill="rgb(71,71,71)"/><rect x="93.83" y="64.14" width="3.27" height="3.35" fill="rgb(71,71,71)"/><rect x="97.00" y="64.14" width="3.27" height="3.35" fill="rgb(71,71,71)"/><rect x="-1.27" y="67.39" width="3.27" height="3.35" fill="rgb(74,74,74)"/><rect x="1.90" y="67.39" width="3.27" height="3.35" fill="rgb(74,74,74)"/><rect x="5.07" y="67.39" width="3.27" height="3.35" fill="rgb(71,71,71)"/><rect x="8.24" y="67.39" width="3.27" height="3.35" fill="rgb(69,69,69)"/><rect x="11.41" y="67.39" width="3.27" height="3.35" fill="rgb(66,66,66)"/><rect x="14.58" y="67.39" width="3.27" height="3.35" fill="rgb(65,65,65)"/><rect x="17.75" y="67.39" width="3.27" height="3.35" fill="rgb(64,64,64)"/><rect x="20.92" y="67.39" width="3.27" height="3.35" fill="rgb(61,61,61)"/><rect x="24.09" y="67.39" width="3.27" height="3.35" fill="rgb(61,61,61)"/><rect x="27.26" y="67.39" width="3.27" height="3.35" fill="rgb(61,61,61)"/><rect x="30.43" y="67.39" width="3.27" height="3.35" fill="rgb(61,61,61)"/><rect x="33.60" y="67.39" width="3.27" height="3.35" fill="rgb(61,61,61)"/><rect x="36.77" y="67.39" width="3.27" height="3.35" fill="rgb(61,61,61)"/><rect x="39.94" y="67.39" width="3.27" height="3.35" fill="rgb(61,61,61)"/><rect x="43.11" y="67.39" width="3.27" height="3.35" fill="rgb(64,64,64)"/><rect x="46.28" y="67.39" width="3.27" height="3.35" fill="rgb(65,65,65)"/><rect x="49.45" y="67.39" width="3.27" height="3.35" fill="rgb(65,65,65)"/><rect x="52.62" y="67.39" width="3.27" height="3.35" fill="rgb(64,64,64)"/><rect x="55.79" y="67.39" width="3.27" height="3.35" fill="rgb(65,65,65)"/><rect x="58.96" y="67.39" width="3.27" height="3.35" fill="rgb(69,69,69)"/><rect x="62.13" y="67.39" width="3.27" height="3.35" fill="rgb(66,66,66)"/><rect x="65.30" y="67.39" width="3.27" height="3.35" fill="rgb(61,61,61)"/><rect x="68.47" y="67.39" width="3.27" height="3.35" fill="rgb(58,58,58)"/><rect x="71.64" y="67.39" width="3.27" height="3.35" fill="rgb(56,56,56)"/><rect x="74.81" y="67.39" width="3.27" height="3.35" fill="rgb(59,59,59)"/><rect x="77.98" y="67.39" width="3.27" height="3.35" fill="rgb(72,72,72)"/><rect x="81.15" y="67.39" width="3.27" height="3.35" fill="rgb(80,80,80)"/><rect x="84.32" y="67.39" width="3.27" height="3.35" fill="rgb(78,78,78)"/><rect x="87.49" y="67.39" width="3.27" height="3.35" fill="rgb(72,72,72)"/><rect x="90.66" y="67.39" width="3.27" height="3.35" fill="rgb(71,71,71)"/><rect x="93.83" y="67.39" width="3.27" height="3.35" fill="rgb(71,71,71)"/><rect x="97.00" y="67.39" width="3.27" height="3.35" fill="rgb(71,71,71)"/><rect x="-1.27" y="70.64" width="3.27" height="3.35" fill="rgb(80,80,80)"/><rect x="1.90" y="70.64" width="3.27" height="3.35" fill="rgb(80,80,80)"/><rect x="5.07" y="70.64" width="3.27" height="3.35" fill="rgb(76,76,76)"/><rect x="8.24" y="70.64" width="3.27" height="3.35" fill="rgb(76,76,76)"/><rect x="11.41" y="70.64" width="3.27" height="3.35" fill="rgb(78,78,78)"/><rect x="14.58" y="70.64" width="3.27" height="3.35" fill="rgb(80,80,80)"/><rect x="17.75" y="70.64" width="3.27" height="3.35" fill="rgb(85,85,85)"/><rect x="20.92" y="70.64" width="3.27" height="3.35" fill="rgb(85,85,85)"/><rect x="24.09" y="70.64" width="3.27" height="3.35" fill="rgb(80,80,80)"/><rect x="27.26" y="70.64" width="3.27" height="3.35" fill="rgb(76,76,76)"/><rect x="30.43" y="70.64" width="3.27" height="3.35" fill="rgb(72,72,72)"/><rect x="33.60" y="70.64" width="3.27" height="3.35" fill="rgb(69,69,69)"/><rect x="36.77" y="70.64" width="3.27" height="3.35" fill="rgb(65,65,65)"/><rect x="39.94" y="70.64" width="3.27" height="3.35" fill="rgb(64,64,64)"/><rect x="43.11" y="70.64" width="3.27" height="3.35" fill="rgb(65,65,65)"/><rect x="46.28" y="70.64" width="3.27" height="3.35" fill="rgb(66,66,66)"/><rect x="49.45" y="70.64" width="3.27" height="3.35" fill="rgb(64,64,64)"/><rect x="52.62" y="70.64" width="3.27" height="3.35" fill="rgb(61,61,61)"/><rect x="55.79" y="70.64" width="3.27" height="3.35" fill="rgb(64,64,64)"/><rect x="58.96" y="70.64" width="3.27" height="3.35" fill="rgb(66,66,66)"/><rect x="62.13" y="70.64" width="3.27" height="3.35" fill="rgb(66,66,66)"/><rect x="65.30" y="70.64" width="3.27" height="3.35" fill="rgb(61,61,61)"/><rect x="68.47" y="70.64" width="3.27" height="3.35" fill="rgb(58,58,58)"/><rect x="71.64" y="70.64" width="3.27" height="3.35" fill="rgb(61,61,61)"/><rect x="74.81" y="70.64" width="3.27" height="3.35" fill="rgb(66,66,66)"/><rect x="77.98" y="70.64" width="3.27" height="3.35" fill="rgb(69,69,69)"/><rect x="81.15" y="70.64" width="3.27" height="3.35" fill="rgb(72,72,72)"/><rect x="84.32" y="70.64" width="3.27" height="3.35" fill="rgb(71,71,71)"/><rect x="87.49" y="70.64" width="3.27" height="3.35" fill="rgb(69,69,69)"/><rect x="90.66" y="70.64" width="3.27" height="3.35" fill="rgb(69,69,69)"/><rect x="93.83" y="70.64" width="3.27" height="3.35" fill="rgb(71,71,71)"/><rect x="97.00" y="70.64" width="3.27" height="3.35" fill="rgb(71,71,71)"/><rect x="-1.27" y="73.89" width="3.27" height="3.35" fill="rgb(76,76,76)"/><rect x="1.90" y="73.89" width="3.27" height="3.35" fill="rgb(76,76,76)"/><rect x="5.07" y="73.89" width="3.27" height="3.35" fill="rgb(69,69,69)"/><rect x="8.24" y="73.89" width="3.27" height="3.35" fill="rgb(74,74,74)"/><rect x="11.41" y="73.89" width="3.27" height="3.35" fill="rgb(80,80,80)"/><rect x="14.58" y="73.89" width="3.27" height="3.35" fill="rgb(82,82,82)"/><rect x="17.75" y="73.89" width="3.27" height="3.35" fill="rgb(90,90,90)"/><rect x="20.92" y="73.89" width="3.27" height="3.35" fill="rgb(90,90,90)"/><rect x="24.09" y="73.89" width="3.27" height="3.35" fill="rgb(88,88,88)"/><rect x="27.26" y="73.89" width="3.27" height="3.35" fill="rgb(85,85,85)"/><rect x="30.43" y="73.89" width="3.27" height="3.35" fill="rgb(85,85,85)"/><rect x="33.60" y="73.89" width="3.27" height="3.35" fill="rgb(82,82,82)"/><rect x="36.77" y="73.89" width="3.27" height="3.35" fill="rgb(80,80,80)"/><rect x="39.94" y="73.89" width="3.27" height="3.35" fill="rgb(76,76,76)"/><rect x="43.11" y="73.89" width="3.27" height="3.35" fill="rgb(72,72,72)"/><rect x="46.28" y="73.89" width="3.27" height="3.35" fill="rgb(71,71,71)"/><rect x="49.45" y="73.89" width="3.27" height="3.35" fill="rgb(64,64,64)"/><rect x="52.62" y="73.89" width="3.27" height="3.35" fill="rgb(61,61,61)"/><rect x="55.79" y="73.89" width="3.27" height="3.35" fill="rgb(64,64,64)"/><rect x="58.96" y="73.89" width="3.27" height="3.35" fill="rgb(65,65,65)"/><rect x="62.13" y="73.89" width="3.27" height="3.35" fill="rgb(65,65,65)"/><rect x="65.30" y="73.89" width="3.27" height="3.35" fill="rgb(66,66,66)"/><rect x="68.47" y="73.89" width="3.27" height="3.35" fill="rgb(74,74,74)"/><rect x="71.64" y="73.89" width="3.27" height="3.35" fill="rgb(80,80,80)"/><rect x="74.81" y="73.89" width="3.27" height="3.35" fill="rgb(78,78,78)"/><rect x="77.98" y="73.89" width="3.27" height="3.35" fill="rgb(66,66,66)"/><rect x="81.15" y="73.89" width="3.27" height="3.35" fill="rgb(69,69,69)"/><rect x="84.32" y="73.89" width="3.27" height="3.35" fill="rgb(69,69,69)"/><rect x="87.49" y="73.89" width="3.27" height="3.35" fill="rgb(66,66,66)"/><rect x="90.66" y="73.89" width="3.27" height="3.35" fill="rgb(69,69,69)"/><rect x="93.83" y="73.89" width="3.27" height="3.35" fill="rgb(72,72,72)"/><rect x="97.00" y="73.89" width="3.27" height="3.35" fill="rgb(72,72,72)"/><rect x="-1.27" y="77.15" width="3.27" height="3.35" fill="rgb(72,72,72)"/><rect x="1.90" y="77.15" width="3.27" height="3.35" fill="rgb(72,72,72)"/><rect x="5.07" y="77.15" width="3.27" height="3.35" fill="rgb(66,66,66)"/><rect x="8.24" y="77.15" width="3.27" height="3.35" fill="rgb(71,71,71)"/><rect x="11.41" y="77.15" width="3.27" height="3.35" fill="rgb(76,76,76)"/><rect x="14.58" y="77.15" width="3.27" height="3.35" fill="rgb(78,78,78)"/><rect x="17.75" y="77.15" width="3.27" height="3.35" fill="rgb(80,80,80)"/><rect x="20.92" y="77.15" width="3.27" height="3.35" fill="rgb(82,82,82)"/><rect x="24.09" y="77.15" width="3.27" height="3.35" fill="rgb(85,85,85)"/><rect x="27.26" y="77.15" width="3.27" height="3.35" fill="rgb(85,85,85)"/><rect x="30.43" y="77.15" width="3.27" height="3.35" fill="rgb(88,88,88)"/><rect x="33.60" y="77.15" width="3.27" height="3.35" fill="rgb(90,90,90)"/><rect x="36.77" y="77.15" width="3.27" height="3.35" fill="rgb(85,85,85)"/><rect x="39.94" y="77.15" width="3.27" height="3.35" fill="rgb(80,80,80)"/><rect x="43.11" y="77.15" width="3.27" height="3.35" fill="rgb(76,76,76)"/><rect x="46.28" y="77.15" width="3.27" height="3.35" fill="rgb(74,74,74)"/><rect x="49.45" y="77.15" width="3.27" height="3.35" fill="rgb(65,65,65)"/><rect x="52.62" y="77.15" width="3.27" height="3.35" fill="rgb(64,64,64)"/><rect x="55.79" y="77.15" width="3.27" height="3.35" fill="rgb(65,65,65)"/><rect x="58.96" y="77.15" width="3.27" height="3.35" fill="rgb(69,69,69)"/><rect x="62.13" y="77.15" width="3.27" height="3.35" fill="rgb(76,76,76)"/><rect x="65.30" y="77.15" width="3.27" height="3.35" fill="rgb(80,80,80)"/><rect x="68.47" y="77.15" width="3.27" height="3.35" fill="rgb(85,85,85)"/><rect x="71.64" y="77.15" width="3.27" height="3.35" fill="rgb(82,82,82)"/><rect x="74.81" y="77.15" width="3.27" height="3.35" fill="rgb(78,78,78)"/><rect x="77.98" y="77.15" width="3.27" height="3.35" fill="rgb(71,71,71)"/><rect x="81.15" y="77.15" width="3.27" height="3.35" fill="rgb(69,69,69)"/><rect x="84.32" y="77.15" width="3.27" height="3.35" fill="rgb(69,69,69)"/><rect x="87.49" y="77.15" width="3.27" height="3.35" fill="rgb(69,69,69)"/><rect x="90.66" y="77.15" width="3.27" height="3.35" fill="rgb(71,71,71)"/><rect x="93.83" y="77.15" width="3.27" height="3.35" fill="rgb(72,72,72)"/><rect x="97.00" y="77.15" width="3.27" height="3.35" fill="rgb(72,72,72)"/><rect x="-1.27" y="80.40" width="3.27" height="3.35" fill="rgb(72,72,72)"/><rect x="1.90" y="80.40" width="3.27" height="3.35" fill="rgb(72,72,72)"/><rect x="5.07" y="80.40" width="3.27" height="3.35" fill="rgb(66,66,66)"/><rect x="8.24" y="80.40" width="3.27" height="3.35" fill="rgb(71,71,71)"/><rect x="11.41" y="80.40" width="3.27" height="3.35" fill="rgb(76,76,76)"/><rect x="14.58" y="80.40" width="3.27" height="3.35" fill="rgb(78,78,78)"/><rect x="17.75" y="80.40" width="3.27" height="3.35" fill="rgb(80,80,80)"/><rect x="20.92" y="80.40" width="3.27" height="3.35" fill="rgb(82,82,82)"/><rect x="24.09" y="80.40" width="3.27" height="3.35" fill="rgb(85,85,85)"/><rect x="27.26" y="80.40" width="3.27" height="3.35" fill="rgb(85,85,85)"/><rect x="30.43" y="80.40" width="3.27" height="3.35" fill="rgb(88,88,88)"/><rect x="33.60" y="80.40" width="3.27" height="3.35" fill="rgb(90,90,90)"/><rect x="36.77" y="80.40" width="3.27" height="3.35" fill="rgb(85,85,85)"/><rect x="39.94" y="80.40" width="3.27" height="3.35" fill="rgb(80,80,80)"/><rect x="43.11" y="80.40" width="3.27" height="3.35" fill="rgb(76,76,76)"/><rect x="46.28" y="80.40" width="3.27" height="3.35" fill="rgb(74,74,74)"/><rect x="49.45" y="80.40" width="3.27" height="3.35" fill="rgb(65,65,65)"/><rect x="52.62" y="80.40" width="3.27" height="3.35" fill="rgb(64,64,64)"/><rect x="55.79" y="80.40" width="3.27" height="3.35" fill="rgb(65,65,65)"/><rect x="58.96" y="80.40" width="3.27" height="3.35" fill="rgb(69,69,69)"/><rect x="62.13" y="80.40" width="3.27" height="3.35" fill="rgb(76,76,76)"/><rect x="65.30" y="80.40" width="3.27" height="3.35" fill="rgb(80,80,80)"/><rect x="68.47" y="80.40" width="3.27" height="3.35" fill="rgb(85,85,85)"/><rect x="71.64" y="80.40" width="3.27" height="3.35" fill="rgb(82,82,82)"/><rect x="74.81" y="80.40" width="3.27" height="3.35" fill="rgb(78,78,78)"/><rect x="77.98" y="80.40" width="3.27" height="3.35" fill="rgb(71,71,71)"/><rect x="81.15" y="80.40" width="3.27" height="3.35" fill="rgb(69,69,69)"/><rect x="84.32" y="80.40" width="3.27" height="3.35" fill="rgb(69,69,69)"/><rect x="87.49" y="80.40" width="3.27" height="3.35" fill="rgb(69,69,69)"/><rect x="90.66" y="80.40" width="3.27" height="3.35" fill="rgb(71,71,71)"/><rect x="93.83" y="80.40" width="3.27" height="3.35" fill="rgb(72,72,72)"/><rect x="97.00" y="80.40" width="3.27" height="3.35" fill="rgb(72,72,72)"/><rect x="-1.27" y="83.65" width="3.27" height="3.35" fill="rgb(72,72,72)"/><rect x="1.90" y="83.65" width="3.27" height="3.35" fill="rgb(72,72,72)"/><rect x="5.07" y="83.65" width="3.27" height="3.35" fill="rgb(66,66,66)"/><rect x="8.24" y="83.65" width="3.27" height="3.35" fill="rgb(71,71,71)"/><rect x="11.41" y="83.65" width="3.27" height="3.35" fill="rgb(76,76,76)"/><rect x="14.58" y="83.65" width="3.27" height="3.35" fill="rgb(78,78,78)"/><rect x="17.75" y="83.65" width="3.27" height="3.35" fill="rgb(80,80,80)"/><rect x="20.92" y="83.65" width="3.27" height="3.35" fill="rgb(82,82,82)"/><rect x="24.09" y="83.65" width="3.27" height="3.35" fill="rgb(85,85,85)"/><rect x="27.26" y="83.65" width="3.27" height="3.35" fill="rgb(85,85,85)"/><rect x="30.43" y="83.65" width="3.27" height="3.35" fill="rgb(88,88,88)"/><rect x="33.60" y="83.65" width="3.27" height="3.35" fill="rgb(90,90,90)"/><rect x="36.77" y="83.65" width="3.27" height="3.35" fill="rgb(85,85,85)"/><rect x="39.94" y="83.65" width="3.27" height="3.35" fill="rgb(80,80,80)"/><rect x="43.11" y="83.65" width="3.27" height="3.35" fill="rgb(76,76,76)"/><rect x="46.28" y="83.65" width="3.27" height="3.35" fill="rgb(74,74,74)"/><rect x="49.45" y="83.65" width="3.27" height="3.35" fill="rgb(65,65,65)"/><rect x="52.62" y="83.65" width="3.27" height="3.35" fill="rgb(64,64,64)"/><rect x="55.79" y="83.65" width="3.27" height="3.35" fill="rgb(65,65,65)"/><rect x="58.96" y="83.65" width="3.27" height="3.35" fill="rgb(69,69,69)"/><rect x="62.13" y="83.65" width="3.27" height="3.35" fill="rgb(76,76,76)"/><rect x="65.30" y="83.65" width="3.27" height="3.35" fill="rgb(80,80,80)"/><rect x="68.47" y="83.65" width="3.27" height="3.35" fill="rgb(85,85,85)"/><rect x="71.64" y="83.65" width="3.27" height="3.35" fill="rgb(82,82,82)"/><rect x="74.81" y="83.65" width="3.27" height="3.35" fill="rgb(78,78,78)"/><rect x="77.98" y="83.65" width="3.27" height="3.35" fill="rgb(71,71,71)"/><rect x="81.15" y="83.65" width="3.27" height="3.35" fill="rgb(69,69,69)"/><rect x="84.32" y="83.65" width="3.27" height="3.35" fill="rgb(69,69,69)"/><rect x="87.49" y="83.65" width="3.27" height="3.35" fill="rgb(69,69,69)"/><rect x="90.66" y="83.65" width="3.27" height="3.35" fill="rgb(71,71,71)"/><rect x="93.83" y="83.65" width="3.27" height="3.35" fill="rgb(72,72,72)"/><rect x="97.00" y="83.65" width="3.27" height="3.35" fill="rgb(72,72,72)"/><rect x="-1.27" y="86.91" width="3.27" height="3.35" fill="rgb(72,72,72)"/><rect x="1.90" y="86.91" width="3.27" height="3.35" fill="rgb(72,72,72)"/><rect x="5.07" y="86.91" width="3.27" height="3.35" fill="rgb(66,66,66)"/><rect x="8.24" y="86.91" width="3.27" height="3.35" fill="rgb(71,71,71)"/><rect x="11.41" y="86.91" width="3.27" height="3.35" fill="rgb(76,76,76)"/><rect x="14.58" y="86.91" width="3.27" height="3.35" fill="rgb(78,78,78)"/><rect x="17.75" y="86.91" width="3.27" height="3.35" fill="rgb(80,80,80)"/><rect x="20.92" y="86.91" width="3.27" height="3.35" fill="rgb(82,82,82)"/><rect x="24.09" y="86.91" width="3.27" height="3.35" fill="rgb(85,85,85)"/><rect x="27.26" y="86.91" width="3.27" height="3.35" fill="rgb(85,85,85)"/><rect x="30.43" y="86.91" width="3.27" height="3.35" fill="rgb(88,88,88)"/><rect x="33.60" y="86.91" width="3.27" height="3.35" fill="rgb(90,90,90)"/><rect x="36.77" y="86.91" width="3.27" height="3.35" fill="rgb(85,85,85)"/><rect x="39.94" y="86.91" width="3.27" height="3.35" fill="rgb(80,80,80)"/><rect x="43.11" y="86.91" width="3.27" height="3.35" fill="rgb(76,76,76)"/><rect x="46.28" y="86.91" width="3.27" height="3.35" fill="rgb(74,74,74)"/><rect x="49.45" y="86.91" width="3.27" height="3.35" fill="rgb(65,65,65)"/><rect x="52.62" y="86.91" width="3.27" height="3.35" fill="rgb(64,64,64)"/><rect x="55.79" y="86.91" width="3.27" height="3.35" fill="rgb(65,65,65)"/><rect x="58.96" y="86.91" width="3.27" height="3.35" fill="rgb(69,69,69)"/><rect x="62.13" y="86.91" width="3.27" height="3.35" fill="rgb(76,76,76)"/><rect x="65.30" y="86.91" width="3.27" height="3.35" fill="rgb(80,80,80)"/><rect x="68.47" y="86.91" width="3.27" height="3.35" fill="rgb(85,85,85)"/><rect x="71.64" y="86.91" width="3.27" height="3.35" fill="rgb(82,82,82)"/><rect x="74.81" y="86.91" width="3.27" height="3.35" fill="rgb(78,78,78)"/><rect x="77.98" y="86.91" width="3.27" height="3.35" fill="rgb(71,71,71)"/><rect x="81.15" y="86.91" width="3.27" height="3.35" fill="rgb(69,69,69)"/><rect x="84.32" y="86.91" width="3.27" height="3.35" fill="rgb(69,69,69)"/><rect x="87.49" y="86.91" width="3.27" height="3.35" fill="rgb(69,69,69)"/><rect x="90.66" y="86.91" width="3.27" height="3.35" fill="rgb(71,71,71)"/><rect x="93.83" y="86.91" width="3.27" height="3.35" fill="rgb(72,72,72)"/><rect x="97.00" y="86.91" width="3.27" height="3.35" fill="rgb(72,72,72)"/><rect x="-1.27" y="90.16" width="3.27" height="3.35" fill="rgb(72,72,72)"/><rect x="1.90" y="90.16" width="3.27" height="3.35" fill="rgb(72,72,72)"/><rect x="5.07" y="90.16" width="3.27" height="3.35" fill="rgb(66,66,66)"/><rect x="8.24" y="90.16" width="3.27" height="3.35" fill="rgb(71,71,71)"/><rect x="11.41" y="90.16" width="3.27" height="3.35" fill="rgb(76,76,76)"/><rect x="14.58" y="90.16" width="3.27" height="3.35" fill="rgb(78,78,78)"/><rect x="17.75" y="90.16" width="3.27" height="3.35" fill="rgb(80,80,80)"/><rect x="20.92" y="90.16" width="3.27" height="3.35" fill="rgb(82,82,82)"/><rect x="24.09" y="90.16" width="3.27" height="3.35" fill="rgb(85,85,85)"/><rect x="27.26" y="90.16" width="3.27" height="3.35" fill="rgb(85,85,85)"/><rect x="30.43" y="90.16" width="3.27" height="3.35" fill="rgb(88,88,88)"/><rect x="33.60" y="90.16" width="3.27" height="3.35" fill="rgb(90,90,90)"/><rect x="36.77" y="90.16" width="3.27" height="3.35" fill="rgb(85,85,85)"/><rect x="39.94" y="90.16" width="3.27" height="3.35" fill="rgb(80,80,80)"/><rect x="43.11" y="90.16" width="3.27" height="3.35" fill="rgb(76,76,76)"/><rect x="46.28" y="90.16" width="3.27" height="3.35" fill="rgb(74,74,74)"/><rect x="49.45" y="90.16" width="3.27" height="3.35" fill="rgb(65,65,65)"/><rect x="52.62" y="90.16" width="3.27" height="3.35" fill="rgb(64,64,64)"/><rect x="55.79" y="90.16" width="3.27" height="3.35" fill="rgb(65,65,65)"/><rect x="58.96" y="90.16" width="3.27" height="3.35" fill="rgb(69,69,69)"/><rect x="62.13" y="90.16" width="3.27" height="3.35" fill="rgb(76,76,76)"/><rect x="65.30" y="90.16" width="3.27" height="3.35" fill="rgb(80,80,80)"/><rect x="68.47" y="90.16" width="3.27" height="3.35" fill="rgb(85,85,85)"/><rect x="71.64" y="90.16" width="3.27" height="3.35" fill="rgb(82,82,82)"/><rect x="74.81" y="90.16" width="3.27" height="3.35" fill="rgb(78,78,78)"/><rect x="77.98" y="90.16" width="3.27" height="3.35" fill="rgb(71,71,71)"/><rect x="81.15" y="90.16" width="3.27" height="3.35" fill="rgb(69,69,69)"/><rect x="84.32" y="90.16" width="3.27" height="3.35" fill="rgb(69,69,69)"/><rect x="87.49" y="90.16" width="3.27" height="3.35" fill="rgb(69,69,69)"/><rect x="90.66" y="90.16" width="3.27" height="3.35" fill="rgb(71,71,71)"/><rect x="93.83" y="90.16" width="3.27" height="3.35" fill="rgb(72,72,72)"/><rect x="97.00" y="90.16" width="3.27" height="3.35" fill="rgb(72,72,72)"/><rect x="-1.27" y="93.41" width="3.27" height="3.35" fill="rgb(72,72,72)"/><rect x="1.90" y="93.41" width="3.27" height="3.35" fill="rgb(72,72,72)"/><rect x="5.07" y="93.41" width="3.27" height="3.35" fill="rgb(66,66,66)"/><rect x="8.24" y="93.41" width="3.27" height="3.35" fill="rgb(71,71,71)"/><rect x="11.41" y="93.41" width="3.27" height="3.35" fill="rgb(76,76,76)"/><rect x="14.58" y="93.41" width="3.27" height="3.35" fill="rgb(78,78,78)"/><rect x="17.75" y="93.41" width="3.27" height="3.35" fill="rgb(80,80,80)"/><rect x="20.92" y="93.41" width="3.27" height="3.35" fill="rgb(82,82,82)"/><rect x="24.09" y="93.41" width="3.27" height="3.35" fill="rgb(85,85,85)"/><rect x="27.26" y="93.41" width="3.27" height="3.35" fill="rgb(85,85,85)"/><rect x="30.43" y="93.41" width="3.27" height="3.35" fill="rgb(88,88,88)"/><rect x="33.60" y="93.41" width="3.27" height="3.35" fill="rgb(90,90,90)"/><rect x="36.77" y="93.41" width="3.27" height="3.35" fill="rgb(85,85,85)"/><rect x="39.94" y="93.41" width="3.27" height="3.35" fill="rgb(80,80,80)"/><rect x="43.11" y="93.41" width="3.27" height="3.35" fill="rgb(76,76,76)"/><rect x="46.28" y="93.41" width="3.27" height="3.35" fill="rgb(74,74,74)"/><rect x="49.45" y="93.41" width="3.27" height="3.35" fill="rgb(65,65,65)"/><rect x="52.62" y="93.41" width="3.27" height="3.35" fill="rgb(64,64,64)"/><rect x="55.79" y="93.41" width="3.27" height="3.35" fill="rgb(65,65,65)"/><rect x="58.96" y="93.41" width="3.27" height="3.35" fill="rgb(69,69,69)"/><rect x="62.13" y="93.41" width="3.27" height="3.35" fill="rgb(76,76,76)"/><rect x="65.30" y="93.41" width="3.27" height="3.35" fill="rgb(80,80,80)"/><rect x="68.47" y="93.41" width="3.27" height="3.35" fill="rgb(85,85,85)"/><rect x="71.64" y="93.41" width="3.27" height="3.35" fill="rgb(82,82,82)"/><rect x="74.81" y="93.41" width="3.27" height="3.35" fill="rgb(78,78,78)"/><rect x="77.98" y="93.41" width="3.27" height="3.35" fill="rgb(71,71,71)"/><rect x="81.15" y="93.41" width="3.27" height="3.35" fill="rgb(69,69,69)"/><rect x="84.32" y="93.41" width="3.27" height="3.35" fill="rgb(69,69,69)"/><rect x="87.49" y="93.41" width="3.27" height="3.35" fill="rgb(69,69,69)"/><rect x="90.66" y="93.41" width="3.27" height="3.35" fill="rgb(71,71,71)"/><rect x="93.83" y="93.41" width="3.27" height="3.35" fill="rgb(72,72,72)"/><rect x="97.00" y="93.41" width="3.27" height="3.35" fill="rgb(72,72,72)"/><rect x="52" y="26" width="18" height="20" fill="rgb(245,245,245)"/></g>
<path d="M49.0,0.0 L100.0,0.0 L100.0,100.0 L96.5,100.0 L96.5,46.5 L70.6,46.5 L70.6,25.5 L49.0,25.5 Z" fill="#000"/>
<rect x="0" y="94" width="100" height="6" fill="#000"/>
<rect x="1.8999999999999773" y="18.599999999999994" width="95.10000000000002" height="61.80000000000001" fill="none" stroke="#12c8d6" stroke-width="0.9"/>
<g stroke="#12c8d6" stroke-width="0.9" fill="#12c8d6">
<line x1="50" y1="50" x2="50" y2="29"/><path d="M48.0,30.0 L50.0,26.5 L52.0,30.0Z"/>
<line x1="50" y1="50" x2="71" y2="50"/><path d="M70.0,48.0 L74.0,50.0 L70.0,52.0Z"/>
</g>
<g stroke="#f0dc00" stroke-width="1.1" fill="#e8d800">
<line x1="50" y1="50" x2="39.5" y2="39"/><path d="M38.0,40.5 L38.0,37.0 L41.2,38.0Z"/>
<line x1="50" y1="50" x2="39" y2="60"/><path d="M37.5,58.0 L37.5,61.5 L41.0,61.2Z"/>
</g>
<g font-family="Liberation Sans" font-size="8.5" font-weight="bold">
<text x="49" y="21.5" fill="#12c8d6" text-anchor="middle">Y</text>
<text x="81" y="53.5" fill="#12c8d6" text-anchor="middle">X</text>
<text x="32.30000000000001" y="35.5" fill="#e0c800" text-anchor="middle">N</text>
<text x="30.69999999999999" y="70.5" fill="#e0c800" text-anchor="middle">E</text>
</g>
</svg>
<div style="position:absolute;left:506.5px;top:68.5px;width:103px;height:103px;background:#fff;border:1px solid #b8b8b8;"></div>
<div style="position:absolute;left:21px;top:182px;width:591px;height:1px;background:#b0b0b0;"></div>
<div style="position:absolute;left:21px;top:183.3px;width:591px;height:1.2px;background:#f4f4f4;"></div>
<div style="position:absolute;left:21.5px;top:184.5px;width:34.3px;height:21.19999999999999px;background:#d9d9d9;border-top:1px solid #f4f4f4;border-left:1px solid #f4f4f4;border-right:1px solid #9c9c9c;border-bottom:1px solid #9c9c9c;"></div>
<div style="position:absolute;left:-161.35px;top:190.79999999999998px;width:400px;text-align:center;font-size:10px;line-height:10px;color:#2a2a2a;white-space:pre;">file</div>
<div style="position:absolute;left:56.8px;top:184.5px;width:37.8px;height:21.19999999999999px;background:#d9d9d9;border-top:1px solid #f4f4f4;border-left:1px solid #f4f4f4;border-right:1px solid #9c9c9c;border-bottom:1px solid #9c9c9c;"></div>
<div style="position:absolute;left:-124.30000000000001px;top:190.79999999999998px;width:400px;text-align:center;font-size:10px;line-height:10px;color:#2a2a2a;white-space:pre;">edit</div>
<div style="position:absolute;left:95.6px;top:184.5px;width:41.400000000000006px;height:21.19999999999999px;background:#d9d9d9;border-top:1px solid #f4f4f4;border-left:1px solid #f4f4f4;border-right:1px solid #9c9c9c;border-bottom:1px solid #9c9c9c;"></div>
<div style="position:absolute;left:-83.7px;top:190.79999999999998px;width:400px;text-align:center;font-size:10px;line-height:10px;color:#2a2a2a;white-space:pre;">view</div>
<div style="position:absolute;left:138px;top:184.5px;width:48.5px;height:21.19999999999999px;background:#d9d9d9;border-top:1px solid #f4f4f4;border-left:1px solid #f4f4f4;border-right:1px solid #9c9c9c;border-bottom:1px solid #9c9c9c;"></div>
<div style="position:absolute;left:-37.75px;top:190.79999999999998px;width:400px;text-align:center;font-size:10px;line-height:10px;color:#2a2a2a;white-space:pre;">frame</div>
<div style="position:absolute;left:187.5px;top:184.5px;width:34.80000000000001px;height:21.19999999999999px;background:#d9d9d9;border-top:1px solid #f4f4f4;border-left:1px solid #f4f4f4;border-right:1px solid #9c9c9c;border-bottom:1px solid #9c9c9c;"></div>
<div style="position:absolute;left:4.900000000000006px;top:190.79999999999998px;width:400px;text-align:center;font-size:10px;line-height:10px;color:#2a2a2a;white-space:pre;">bin</div>
<div style="position:absolute;left:223.3px;top:184.5px;width:45.19999999999999px;height:21.19999999999999px;background:#d9d9d9;border-top:1px solid #f4f4f4;border-left:1px solid #f4f4f4;border-right:1px solid #9c9c9c;border-bottom:1px solid #9c9c9c;"></div>
<div style="position:absolute;left:45.900000000000006px;top:190.79999999999998px;width:400px;text-align:center;font-size:10px;line-height:10px;color:#2a2a2a;white-space:pre;">zoom</div>
<div style="position:absolute;left:269.5px;top:184.5px;width:44.0px;height:21.19999999999999px;background:#ececec;border-top:1px solid #f4f4f4;border-left:1px solid #f4f4f4;border-right:1px solid #9c9c9c;border-bottom:1px solid #9c9c9c;"></div>
<div style="position:absolute;left:91.5px;top:190.79999999999998px;width:400px;text-align:center;font-size:10px;line-height:10px;color:#2a2a2a;white-space:pre;">scale</div>
<div style="position:absolute;left:314.5px;top:184.5px;width:42.5px;height:21.19999999999999px;background:#d9d9d9;border-top:1px solid #f4f4f4;border-left:1px solid #f4f4f4;border-right:1px solid #9c9c9c;border-bottom:1px solid #9c9c9c;"></div>
<div style="position:absolute;left:135.75px;top:190.79999999999998px;width:400px;text-align:center;font-size:10px;line-height:10px;color:#2a2a2a;white-space:pre;">color</div>
<div style="position:absolute;left:358px;top:184.5px;width:49.30000000000001px;height:21.19999999999999px;background:#d9d9d9;border-top:1px solid #f4f4f4;border-left:1px solid #f4f4f4;border-right:1px solid #9c9c9c;border-bottom:1px solid #9c9c9c;"></div>
<div style="position:absolute;left:182.64999999999998px;top:190.79999999999998px;width:400px;text-align:center;font-size:10px;line-height:10px;color:#2a2a2a;white-space:pre;">region</div>
<div style="position:absolute;left:408.3px;top:184.5px;width:38.39999999999998px;height:21.19999999999999px;background:#d9d9d9;border-top:1px solid #f4f4f4;border-left:1px solid #f4f4f4;border-right:1px solid #9c9c9c;border-bottom:1px solid #9c9c9c;"></div>
<div style="position:absolute;left:227.5px;top:190.79999999999998px;width:400px;text-align:center;font-size:10px;line-height:10px;color:#2a2a2a;white-space:pre;">wcs</div>
<div style="position:absolute;left:447.7px;top:184.5px;width:63.30000000000001px;height:21.19999999999999px;background:#d9d9d9;border-top:1px solid #f4f4f4;border-left:1px solid #f4f4f4;border-right:1px solid #9c9c9c;border-bottom:1px solid #9c9c9c;"></div>
<div style="position:absolute;left:279.35px;top:190.79999999999998px;width:400px;text-align:center;font-size:10px;line-height:10px;color:#2a2a2a;white-space:pre;">illustrate</div>
<div style="position:absolute;left:512px;top:184.5px;width:57.5px;height:21.19999999999999px;background:#d9d9d9;border-top:1px solid #f4f4f4;border-left:1px solid #f4f4f4;border-right:1px solid #9c9c9c;border-bottom:1px solid #9c9c9c;"></div>
<div style="position:absolute;left:340.75px;top:190.79999999999998px;width:400px;text-align:center;font-size:10px;line-height:10px;color:#2a2a2a;white-space:pre;">analysis</div>
<div style="position:absolute;left:570.5px;top:184.5px;width:40.5px;height:21.19999999999999px;background:#d9d9d9;border-top:1px solid #f4f4f4;border-left:1px solid #f4f4f4;border-right:1px solid #9c9c9c;border-bottom:1px solid #9c9c9c;"></div>
<div style="position:absolute;left:390.75px;top:190.79999999999998px;width:400px;text-align:center;font-size:10px;line-height:10px;color:#2a2a2a;white-space:pre;">help</div>
<div style="position:absolute;left:21.5px;top:206.3px;width:55.3px;height:20.299999999999983px;background:#ececec;border-top:1px solid #f4f4f4;border-left:1px solid #f4f4f4;border-right:1px solid #9c9c9c;border-bottom:1px solid #9c9c9c;"></div>
<div style="position:absolute;left:-150.85px;top:212.14999999999998px;width:400px;text-align:center;font-size:10px;line-height:10px;color:#2a2a2a;white-space:pre;">linear</div>
<div style="position:absolute;left:77.8px;top:206.3px;width:43.2px;height:20.299999999999983px;background:#d9d9d9;border-top:1px solid #f4f4f4;border-left:1px solid #f4f4f4;border-right:1px solid #9c9c9c;border-bottom:1px solid #9c9c9c;"></div>
<div style="position:absolute;left:-100.6px;top:212.14999999999998px;width:400px;text-align:center;font-size:10px;line-height:10px;color:#2a2a2a;white-space:pre;">log</div>
<div style="position:absolute;left:122px;top:206.3px;width:58px;height:20.299999999999983px;background:#d9d9d9;border-top:1px solid #f4f4f4;border-left:1px solid #f4f4f4;border-right:1px solid #9c9c9c;border-bottom:1px solid #9c9c9c;"></div>
<div style="position:absolute;left:-49.0px;top:212.14999999999998px;width:400px;text-align:center;font-size:10px;line-height:10px;color:#2a2a2a;white-space:pre;">power</div>
<div style="position:absolute;left:181px;top:206.3px;width:46px;height:20.299999999999983px;background:#d9d9d9;border-top:1px solid #f4f4f4;border-left:1px solid #f4f4f4;border-right:1px solid #9c9c9c;border-bottom:1px solid #9c9c9c;"></div>
<div style="position:absolute;left:4.0px;top:212.14999999999998px;width:400px;text-align:center;font-size:10px;line-height:10px;color:#2a2a2a;white-space:pre;">sqrt</div>
<div style="position:absolute;left:228px;top:206.3px;width:67px;height:20.299999999999983px;background:#d9d9d9;border-top:1px solid #f4f4f4;border-left:1px solid #f4f4f4;border-right:1px solid #9c9c9c;border-bottom:1px solid #9c9c9c;"></div>
<div style="position:absolute;left:61.5px;top:212.14999999999998px;width:400px;text-align:center;font-size:10px;line-height:10px;color:#2a2a2a;white-space:pre;">squared</div>
<div style="position:absolute;left:296px;top:206.3px;width:55.30000000000001px;height:20.299999999999983px;background:#d9d9d9;border-top:1px solid #f4f4f4;border-left:1px solid #f4f4f4;border-right:1px solid #9c9c9c;border-bottom:1px solid #9c9c9c;"></div>
<div style="position:absolute;left:123.64999999999998px;top:212.14999999999998px;width:400px;text-align:center;font-size:10px;line-height:10px;color:#2a2a2a;white-space:pre;">asinh</div>
<div style="position:absolute;left:352.3px;top:206.3px;width:49.69999999999999px;height:20.299999999999983px;background:#d9d9d9;border-top:1px solid #f4f4f4;border-left:1px solid #f4f4f4;border-right:1px solid #9c9c9c;border-bottom:1px solid #9c9c9c;"></div>
<div style="position:absolute;left:177.14999999999998px;top:212.14999999999998px;width:400px;text-align:center;font-size:10px;line-height:10px;color:#2a2a2a;white-space:pre;">sinh</div>
<div style="position:absolute;left:403px;top:206.3px;width:77px;height:20.299999999999983px;background:#d9d9d9;border-top:1px solid #f4f4f4;border-left:1px solid #f4f4f4;border-right:1px solid #9c9c9c;border-bottom:1px solid #9c9c9c;"></div>
<div style="position:absolute;left:241.5px;top:212.14999999999998px;width:400px;text-align:center;font-size:10px;line-height:10px;color:#2a2a2a;white-space:pre;">histogram</div>
<div style="position:absolute;left:481px;top:206.3px;width:72.29999999999995px;height:20.299999999999983px;background:#d9d9d9;border-top:1px solid #f4f4f4;border-left:1px solid #f4f4f4;border-right:1px solid #9c9c9c;border-bottom:1px solid #9c9c9c;"></div>
<div style="position:absolute;left:317.15px;top:212.14999999999998px;width:400px;text-align:center;font-size:10px;line-height:10px;color:#2a2a2a;white-space:pre;">min max</div>
<div style="position:absolute;left:554.3px;top:206.3px;width:56.700000000000045px;height:20.299999999999983px;background:#ececec;border-top:1px solid #f4f4f4;border-left:1px solid #f4f4f4;border-right:1px solid #9c9c9c;border-bottom:1px solid #9c9c9c;"></div>
<div style="position:absolute;left:382.65px;top:212.14999999999998px;width:400px;text-align:center;font-size:10px;line-height:10px;color:#2a2a2a;white-space:pre;">zscale</div>
<div style="position:absolute;left:21px;top:226.6px;width:591px;height:2px;background:#a0a0a0;"></div>
<div style="position:absolute;left:21px;top:228.5px;width:590px;height:380px;overflow:hidden;background:#000"><div style="position:absolute;left:-40px;top:-40px;width:670px;height:460px;filter:blur(6px)"><div style="position:absolute;left:-19.0px;top:-20.0px;width:20.2px;height:20.5px;background:rgb(50,50,50)"></div><div style="position:absolute;left:0.7px;top:-20.0px;width:20.2px;height:20.5px;background:rgb(50,50,50)"></div><div style="position:absolute;left:20.3px;top:-20.0px;width:20.2px;height:20.5px;background:rgb(50,50,50)"></div><div style="position:absolute;left:40.0px;top:-20.0px;width:20.2px;height:20.5px;background:rgb(50,50,50)"></div><div style="position:absolute;left:59.7px;top:-20.0px;width:20.2px;height:20.5px;background:rgb(50,50,50)"></div><div style="position:absolute;left:79.3px;top:-20.0px;width:20.2px;height:20.5px;background:rgb(50,50,50)"></div><div style="position:absolute;left:99.0px;top:-20.0px;width:20.2px;height:20.5px;background:rgb(50,50,50)"></div><div style="position:absolute;left:118.7px;top:-20.0px;width:20.2px;height:20.5px;background:rgb(50,50,50)"></div><div style="position:absolute;left:138.3px;top:-20.0px;width:20.2px;height:20.5px;background:rgb(50,50,50)"></div><div style="position:absolute;left:158.0px;top:-20.0px;width:20.2px;height:20.5px;background:rgb(62,62,62)"></div><div style="position:absolute;left:177.7px;top:-20.0px;width:20.2px;height:20.5px;background:rgb(52,52,52)"></div><div style="position:absolute;left:197.3px;top:-20.0px;width:20.2px;height:20.5px;background:rgb(62,62,62)"></div><div style="position:absolute;left:217.0px;top:-20.0px;width:20.2px;height:20.5px;background:rgb(75,75,75)"></div><div style="position:absolute;left:236.7px;top:-20.0px;width:20.2px;height:20.5px;background:rgb(60,60,60)"></div><div style="position:absolute;left:256.3px;top:-20.0px;width:20.2px;height:20.5px;background:rgb(80,80,80)"></div><div style="position:absolute;left:276.0px;top:-20.0px;width:20.2px;height:20.5px;background:rgb(85,85,85)"></div><div style="position:absolute;left:295.7px;top:-20.0px;width:20.2px;height:20.5px;background:rgb(90,90,90)"></div><div style="position:absolute;left:315.3px;top:-20.0px;width:20.2px;height:20.5px;background:rgb(100,100,100)"></div><div style="position:absolute;left:335.0px;top:-20.0px;width:20.2px;height:20.5px;background:rgb(230,230,230)"></div><div style="position:absolute;left:354.7px;top:-20.0px;width:20.2px;height:20.5px;background:rgb(230,230,230)"></div><div style="position:absolute;left:374.3px;top:-20.0px;width:20.2px;height:20.5px;background:rgb(230,230,230)"></div><div style="position:absolute;left:394.0px;top:-20.0px;width:20.2px;height:20.5px;background:rgb(230,230,230)"></div><div style="position:absolute;left:413.7px;top:-20.0px;width:20.2px;height:20.5px;background:rgb(230,230,230)"></div><div style="position:absolute;left:433.3px;top:-20.0px;width:20.2px;height:20.5px;background:rgb(235,235,235)"></div><div style="position:absolute;left:453.0px;top:-20.0px;width:20.2px;height:20.5px;background:rgb(235,235,235)"></div><div style="position:absolute;left:472.7px;top:-20.0px;width:20.2px;height:20.5px;background:rgb(200,200,200)"></div><div style="position:absolute;left:492.3px;top:-20.0px;width:20.2px;height:20.5px;background:rgb(150,150,150)"></div><div style="position:absolute;left:512.0px;top:-20.0px;width:20.2px;height:20.5px;background:rgb(150,150,150)"></div><div style="position:absolute;left:531.7px;top:-20.0px;width:20.2px;height:20.5px;background:rgb(150,150,150)"></div><div style="position:absolute;left:551.3px;top:-20.0px;width:20.2px;height:20.5px;background:rgb(150,150,150)"></div><div style="position:absolute;left:571.0px;top:-20.0px;width:20.2px;height:20.5px;background:rgb(150,150,150)"></div><div style="position:absolute;left:590.7px;top:-20.0px;width:20.2px;height:20.5px;background:rgb(150,150,150)"></div><div style="position:absolute;left:610.3px;top:-20.0px;width:20.2px;height:20.5px;background:rgb(150,150,150)"></div><div style="position:absolute;left:630.0px;top:-20.0px;width:20.2px;height:20.5px;background:rgb(150,150,150)"></div><div style="position:absolute;left:649.7px;top:-20.0px;width:20.2px;height:20.5px;background:rgb(150,150,150)"></div><div style="position:absolute;left:669.3px;top:-20.0px;width:20.2px;height:20.5px;background:rgb(150,150,150)"></div><div style="position:absolute;left:-19.0px;top:0.0px;width:20.2px;height:20.5px;background:rgb(50,50,50)"></div><div style="position:absolute;left:0.7px;top:0.0px;width:20.2px;height:20.5px;background:rgb(50,50,50)"></div><div style="position:absolute;left:20.3px;top:0.0px;width:20.2px;height:20.5px;background:rgb(50,50,50)"></div><div style="position:absolute;left:40.0px;top:0.0px;width:20.2px;height:20.5px;background:rgb(50,50,50)"></div><div style="position:absolute;left:59.7px;top:0.0px;width:20.2px;height:20.5px;background:rgb(50,50,50)"></div><div style="position:absolute;left:79.3px;top:0.0px;width:20.2px;height:20.5px;background:rgb(50,50,50)"></div><div style="position:absolute;left:99.0px;top:0.0px;width:20.2px;height:20.5px;background:rgb(50,50,50)"></div><div style="position:absolute;left:118.7px;top:0.0px;width:20.2px;height:20.5px;background:rgb(50,50,50)"></div><div style="position:absolute;left:138.3px;top:0.0px;width:20.2px;height:20.5px;background:rgb(50,50,50)"></div><div style="position:absolute;left:158.0px;top:0.0px;width:20.2px;height:20.5px;background:rgb(62,62,62)"></div><div style="position:absolute;left:177.7px;top:0.0px;width:20.2px;height:20.5px;background:rgb(52,52,52)"></div><div style="position:absolute;left:197.3px;top:0.0px;width:20.2px;height:20.5px;background:rgb(62,62,62)"></div><div style="position:absolute;left:217.0px;top:0.0px;width:20.2px;height:20.5px;background:rgb(75,75,75)"></div><div style="position:absolute;left:236.7px;top:0.0px;width:20.2px;height:20.5px;background:rgb(60,60,60)"></div><div style="position:absolute;left:256.3px;top:0.0px;width:20.2px;height:20.5px;background:rgb(80,80,80)"></div><div style="position:absolute;left:276.0px;top:0.0px;width:20.2px;height:20.5px;background:rgb(85,85,85)"></div><div style="position:absolute;left:295.7px;top:0.0px;width:20.2px;height:20.5px;background:rgb(90,90,90)"></div><div style="position:absolute;left:315.3px;top:0.0px;width:20.2px;height:20.5px;background:rgb(100,100,100)"></div><div style="position:absolute;left:335.0px;top:0.0px;width:20.2px;height:20.5px;background:rgb(230,230,230)"></div><div style="position:absolute;left:354.7px;top:0.0px;width:20.2px;height:20.5px;background:rgb(230,230,230)"></div><div style="position:absolute;left:374.3px;top:0.0px;width:20.2px;height:20.5px;background:rgb(230,230,230)"></div><div style="position:absolute;left:394.0px;top:0.0px;width:20.2px;height:20.5px;background:rgb(230,230,230)"></div><div style="position:absolute;left:413.7px;top:0.0px;width:20.2px;height:20.5px;background:rgb(230,230,230)"></div><div style="position:absolute;left:433.3px;top:0.0px;width:20.2px;height:20.5px;background:rgb(235,235,235)"></div><div style="position:absolute;left:453.0px;top:0.0px;width:20.2px;height:20.5px;background:rgb(235,235,235)"></div><div style="position:absolute;left:472.7px;top:0.0px;width:20.2px;height:20.5px;background:rgb(200,200,200)"></div><div style="position:absolute;left:492.3px;top:0.0px;width:20.2px;height:20.5px;background:rgb(150,150,150)"></div><div style="position:absolute;left:512.0px;top:0.0px;width:20.2px;height:20.5px;background:rgb(150,150,150)"></div><div style="position:absolute;left:531.7px;top:0.0px;width:20.2px;height:20.5px;background:rgb(150,150,150)"></div><div style="position:absolute;left:551.3px;top:0.0px;width:20.2px;height:20.5px;background:rgb(150,150,150)"></div><div style="position:absolute;left:571.0px;top:0.0px;width:20.2px;height:20.5px;background:rgb(150,150,150)"></div><div style="position:absolute;left:590.7px;top:0.0px;width:20.2px;height:20.5px;background:rgb(150,150,150)"></div><div style="position:absolute;left:610.3px;top:0.0px;width:20.2px;height:20.5px;background:rgb(150,150,150)"></div><div style="position:absolute;left:630.0px;top:0.0px;width:20.2px;height:20.5px;background:rgb(150,150,150)"></div><div style="position:absolute;left:649.7px;top:0.0px;width:20.2px;height:20.5px;background:rgb(150,150,150)"></div><div style="position:absolute;left:669.3px;top:0.0px;width:20.2px;height:20.5px;background:rgb(150,150,150)"></div><div style="position:absolute;left:-19.0px;top:20.0px;width:20.2px;height:20.5px;background:rgb(50,50,50)"></div><div style="position:absolute;left:0.7px;top:20.0px;width:20.2px;height:20.5px;background:rgb(50,50,50)"></div><div style="position:absolute;left:20.3px;top:20.0px;width:20.2px;height:20.5px;background:rgb(50,50,50)"></div><div style="position:absolute;left:40.0px;top:20.0px;width:20.2px;height:20.5px;background:rgb(50,50,50)"></div><div style="position:absolute;left:59.7px;top:20.0px;width:20.2px;height:20.5px;background:rgb(50,50,50)"></div><div style="position:absolute;left:79.3px;top:20.0px;width:20.2px;height:20.5px;background:rgb(50,50,50)"></div><div style="position:absolute;left:99.0px;top:20.0px;width:20.2px;height:20.5px;background:rgb(50,50,50)"></div><div style="position:absolute;left:118.7px;top:20.0px;width:20.2px;height:20.5px;background:rgb(50,50,50)"></div><div style="position:absolute;left:138.3px;top:20.0px;width:20.2px;height:20.5px;background:rgb(50,50,50)"></div><div style="position:absolute;left:158.0px;top:20.0px;width:20.2px;height:20.5px;background:rgb(62,62,62)"></div><div style="position:absolute;left:177.7px;top:20.0px;width:20.2px;height:20.5px;background:rgb(52,52,52)"></div><div style="position:absolute;left:197.3px;top:20.0px;width:20.2px;height:20.5px;background:rgb(62,62,62)"></div><div style="position:absolute;left:217.0px;top:20.0px;width:20.2px;height:20.5px;background:rgb(75,75,75)"></div><div style="position:absolute;left:236.7px;top:20.0px;width:20.2px;height:20.5px;background:rgb(60,60,60)"></div><div style="position:absolute;left:256.3px;top:20.0px;width:20.2px;height:20.5px;background:rgb(80,80,80)"></div><div style="position:absolute;left:276.0px;top:20.0px;width:20.2px;height:20.5px;background:rgb(85,85,85)"></div><div style="position:absolute;left:295.7px;top:20.0px;width:20.2px;height:20.5px;background:rgb(90,90,90)"></div><div style="position:absolute;left:315.3px;top:20.0px;width:20.2px;height:20.5px;background:rgb(100,100,100)"></div><div style="position:absolute;left:335.0px;top:20.0px;width:20.2px;height:20.5px;background:rgb(230,230,230)"></div><div style="position:absolute;left:354.7px;top:20.0px;width:20.2px;height:20.5px;background:rgb(230,230,230)"></div><div style="position:absolute;left:374.3px;top:20.0px;width:20.2px;height:20.5px;background:rgb(230,230,230)"></div><div style="position:absolute;left:394.0px;top:20.0px;width:20.2px;height:20.5px;background:rgb(230,230,230)"></div><div style="position:absolute;left:413.7px;top:20.0px;width:20.2px;height:20.5px;background:rgb(230,230,230)"></div><div style="position:absolute;left:433.3px;top:20.0px;width:20.2px;height:20.5px;background:rgb(235,235,235)"></div><div style="position:absolute;left:453.0px;top:20.0px;width:20.2px;height:20.5px;background:rgb(235,235,235)"></div><div style="position:absolute;left:472.7px;top:20.0px;width:20.2px;height:20.5px;background:rgb(200,200,200)"></div><div style="position:absolute;left:492.3px;top:20.0px;width:20.2px;height:20.5px;background:rgb(150,150,150)"></div><div style="position:absolute;left:512.0px;top:20.0px;width:20.2px;height:20.5px;background:rgb(150,150,150)"></div><div style="position:absolute;left:531.7px;top:20.0px;width:20.2px;height:20.5px;background:rgb(150,150,150)"></div><div style="position:absolute;left:551.3px;top:20.0px;width:20.2px;height:20.5px;background:rgb(150,150,150)"></div><div style="position:absolute;left:571.0px;top:20.0px;width:20.2px;height:20.5px;background:rgb(150,150,150)"></div><div style="position:absolute;left:590.7px;top:20.0px;width:20.2px;height:20.5px;background:rgb(150,150,150)"></div><div style="position:absolute;left:610.3px;top:20.0px;width:20.2px;height:20.5px;background:rgb(150,150,150)"></div><div style="position:absolute;left:630.0px;top:20.0px;width:20.2px;height:20.5px;background:rgb(150,150,150)"></div><div style="position:absolute;left:649.7px;top:20.0px;width:20.2px;height:20.5px;background:rgb(150,150,150)"></div><div style="position:absolute;left:669.3px;top:20.0px;width:20.2px;height:20.5px;background:rgb(150,150,150)"></div><div style="position:absolute;left:-19.0px;top:40.0px;width:20.2px;height:20.5px;background:rgb(50,50,50)"></div><div style="position:absolute;left:0.7px;top:40.0px;width:20.2px;height:20.5px;background:rgb(50,50,50)"></div><div style="position:absolute;left:20.3px;top:40.0px;width:20.2px;height:20.5px;background:rgb(50,50,50)"></div><div style="position:absolute;left:40.0px;top:40.0px;width:20.2px;height:20.5px;background:rgb(50,50,50)"></div><div style="position:absolute;left:59.7px;top:40.0px;width:20.2px;height:20.5px;background:rgb(50,50,50)"></div><div style="position:absolute;left:79.3px;top:40.0px;width:20.2px;height:20.5px;background:rgb(50,50,50)"></div><div style="position:absolute;left:99.0px;top:40.0px;width:20.2px;height:20.5px;background:rgb(50,50,50)"></div><div style="position:absolute;left:118.7px;top:40.0px;width:20.2px;height:20.5px;background:rgb(50,50,50)"></div><div style="position:absolute;left:138.3px;top:40.0px;width:20.2px;height:20.5px;background:rgb(50,50,50)"></div><div style="position:absolute;left:158.0px;top:40.0px;width:20.2px;height:20.5px;background:rgb(62,62,62)"></div><div style="position:absolute;left:177.7px;top:40.0px;width:20.2px;height:20.5px;background:rgb(52,52,52)"></div><div style="position:absolute;left:197.3px;top:40.0px;width:20.2px;height:20.5px;background:rgb(62,62,62)"></div><div style="position:absolute;left:217.0px;top:40.0px;width:20.2px;height:20.5px;background:rgb(75,75,75)"></div><div style="position:absolute;left:236.7px;top:40.0px;width:20.2px;height:20.5px;background:rgb(60,60,60)"></div><div style="position:absolute;left:256.3px;top:40.0px;width:20.2px;height:20.5px;background:rgb(80,80,80)"></div><div style="position:absolute;left:276.0px;top:40.0px;width:20.2px;height:20.5px;background:rgb(85,85,85)"></div><div style="position:absolute;left:295.7px;top:40.0px;width:20.2px;height:20.5px;background:rgb(90,90,90)"></div><div style="position:absolute;left:315.3px;top:40.0px;width:20.2px;height:20.5px;background:rgb(100,100,100)"></div><div style="position:absolute;left:335.0px;top:40.0px;width:20.2px;height:20.5px;background:rgb(230,230,230)"></div><div style="position:absolute;left:354.7px;top:40.0px;width:20.2px;height:20.5px;background:rgb(230,230,230)"></div><div style="position:absolute;left:374.3px;top:40.0px;width:20.2px;height:20.5px;background:rgb(230,230,230)"></div><div style="position:absolute;left:394.0px;top:40.0px;width:20.2px;height:20.5px;background:rgb(230,230,230)"></div><div style="position:absolute;left:413.7px;top:40.0px;width:20.2px;height:20.5px;background:rgb(230,230,230)"></div><div style="position:absolute;left:433.3px;top:40.0px;width:20.2px;height:20.5px;background:rgb(235,235,235)"></div><div style="position:absolute;left:453.0px;top:40.0px;width:20.2px;height:20.5px;background:rgb(235,235,235)"></div><div style="position:absolute;left:472.7px;top:40.0px;width:20.2px;height:20.5px;background:rgb(200,200,200)"></div><div style="position:absolute;left:492.3px;top:40.0px;width:20.2px;height:20.5px;background:rgb(150,150,150)"></div><div style="position:absolute;left:512.0px;top:40.0px;width:20.2px;height:20.5px;background:rgb(150,150,150)"></div><div style="position:absolute;left:531.7px;top:40.0px;width:20.2px;height:20.5px;background:rgb(150,150,150)"></div><div style="position:absolute;left:551.3px;top:40.0px;width:20.2px;height:20.5px;background:rgb(150,150,150)"></div><div style="position:absolute;left:571.0px;top:40.0px;width:20.2px;height:20.5px;background:rgb(150,150,150)"></div><div style="position:absolute;left:590.7px;top:40.0px;width:20.2px;height:20.5px;background:rgb(150,150,150)"></div><div style="position:absolute;left:610.3px;top:40.0px;width:20.2px;height:20.5px;background:rgb(150,150,150)"></div><div style="position:absolute;left:630.0px;top:40.0px;width:20.2px;height:20.5px;background:rgb(150,150,150)"></div><div style="position:absolute;left:649.7px;top:40.0px;width:20.2px;height:20.5px;background:rgb(150,150,150)"></div><div style="position:absolute;left:669.3px;top:40.0px;width:20.2px;height:20.5px;background:rgb(150,150,150)"></div><div style="position:absolute;left:-19.0px;top:60.0px;width:20.2px;height:20.5px;background:rgb(50,50,50)"></div><div style="position:absolute;left:0.7px;top:60.0px;width:20.2px;height:20.5px;background:rgb(50,50,50)"></div><div style="position:absolute;left:20.3px;top:60.0px;width:20.2px;height:20.5px;background:rgb(50,50,50)"></div><div style="position:absolute;left:40.0px;top:60.0px;width:20.2px;height:20.5px;background:rgb(50,50,50)"></div><div style="position:absolute;left:59.7px;top:60.0px;width:20.2px;height:20.5px;background:rgb(50,50,50)"></div><div style="position:absolute;left:79.3px;top:60.0px;width:20.2px;height:20.5px;background:rgb(50,50,50)"></div><div style="position:absolute;left:99.0px;top:60.0px;width:20.2px;height:20.5px;background:rgb(50,50,50)"></div><div style="position:absolute;left:118.7px;top:60.0px;width:20.2px;height:20.5px;background:rgb(50,50,50)"></div><div style="position:absolute;left:138.3px;top:60.0px;width:20.2px;height:20.5px;background:rgb(50,50,50)"></div><div style="position:absolute;left:158.0px;top:60.0px;width:20.2px;height:20.5px;background:rgb(62,62,62)"></div><div style="position:absolute;left:177.7px;top:60.0px;width:20.2px;height:20.5px;background:rgb(52,52,52)"></div><div style="position:absolute;left:197.3px;top:60.0px;width:20.2px;height:20.5px;background:rgb(62,62,62)"></div><div style="position:absolute;left:217.0px;top:60.0px;width:20.2px;height:20.5px;background:rgb(70,70,70)"></div><div style="position:absolute;left:236.7px;top:60.0px;width:20.2px;height:20.5px;background:rgb(55,55,55)"></div><div style="position:absolute;left:256.3px;top:60.0px;width:20.2px;height:20.5px;background:rgb(85,85,85)"></div><div style="position:absolute;left:276.0px;top:60.0px;width:20.2px;height:20.5px;background:rgb(95,95,95)"></div><div style="position:absolute;left:295.7px;top:60.0px;width:20.2px;height:20.5px;background:rgb(110,110,110)"></div><div style="position:absolute;left:315.3px;top:60.0px;width:20.2px;height:20.5px;background:rgb(120,120,120)"></div><div style="position:absolute;left:335.0px;top:60.0px;width:20.2px;height:20.5px;background:rgb(230,230,230)"></div><div style="position:absolute;left:354.7px;top:60.0px;width:20.2px;height:20.5px;background:rgb(230,230,230)"></div><div style="position:absolute;left:374.3px;top:60.0px;width:20.2px;height:20.5px;background:rgb(230,230,230)"></div><div style="position:absolute;left:394.0px;top:60.0px;width:20.2px;height:20.5px;background:rgb(230,230,230)"></div><div style="position:absolute;left:413.7px;top:60.0px;width:20.2px;height:20.5px;background:rgb(230,230,230)"></div><div style="position:absolute;left:433.3px;top:60.0px;width:20.2px;height:20.5px;background:rgb(235,235,235)"></div><div style="position:absolute;left:453.0px;top:60.0px;width:20.2px;height:20.5px;background:rgb(235,235,235)"></div><div style="position:absolute;left:472.7px;top:60.0px;width:20.2px;height:20.5px;background:rgb(200,200,200)"></div><div style="position:absolute;left:492.3px;top:60.0px;width:20.2px;height:20.5px;background:rgb(150,150,150)"></div><div style="position:absolute;left:512.0px;top:60.0px;width:20.2px;height:20.5px;background:rgb(150,150,150)"></div><div style="position:absolute;left:531.7px;top:60.0px;width:20.2px;height:20.5px;background:rgb(150,150,150)"></div><div style="position:absolute;left:551.3px;top:60.0px;width:20.2px;height:20.5px;background:rgb(150,150,150)"></div><div style="position:absolute;left:571.0px;top:60.0px;width:20.2px;height:20.5px;background:rgb(150,150,150)"></div><div style="position:absolute;left:590.7px;top:60.0px;width:20.2px;height:20.5px;background:rgb(150,150,150)"></div><div style="position:absolute;left:610.3px;top:60.0px;width:20.2px;height:20.5px;background:rgb(150,150,150)"></div><div style="position:absolute;left:630.0px;top:60.0px;width:20.2px;height:20.5px;background:rgb(150,150,150)"></div><div style="position:absolute;left:649.7px;top:60.0px;width:20.2px;height:20.5px;background:rgb(150,150,150)"></div><div style="position:absolute;left:669.3px;top:60.0px;width:20.2px;height:20.5px;background:rgb(150,150,150)"></div><div style="position:absolute;left:-19.0px;top:80.0px;width:20.2px;height:20.5px;background:rgb(50,50,50)"></div><div style="position:absolute;left:0.7px;top:80.0px;width:20.2px;height:20.5px;background:rgb(50,50,50)"></div><div style="position:absolute;left:20.3px;top:80.0px;width:20.2px;height:20.5px;background:rgb(50,50,50)"></div><div style="position:absolute;left:40.0px;top:80.0px;width:20.2px;height:20.5px;background:rgb(50,50,50)"></div><div style="position:absolute;left:59.7px;top:80.0px;width:20.2px;height:20.5px;background:rgb(50,50,50)"></div><div style="position:absolute;left:79.3px;top:80.0px;width:20.2px;height:20.5px;background:rgb(50,50,50)"></div><div style="position:absolute;left:99.0px;top:80.0px;width:20.2px;height:20.5px;background:rgb(50,50,50)"></div><div style="position:absolute;left:118.7px;top:80.0px;width:20.2px;height:20.5px;background:rgb(50,50,50)"></div><div style="position:absolute;left:138.3px;top:80.0px;width:20.2px;height:20.5px;background:rgb(50,50,50)"></div><div style="position:absolute;left:158.0px;top:80.0px;width:20.2px;height:20.5px;background:rgb(62,62,62)"></div><div style="position:absolute;left:177.7px;top:80.0px;width:20.2px;height:20.5px;background:rgb(52,52,52)"></div><div style="position:absolute;left:197.3px;top:80.0px;width:20.2px;height:20.5px;background:rgb(62,62,62)"></div><div style="position:absolute;left:217.0px;top:80.0px;width:20.2px;height:20.5px;background:rgb(70,70,70)"></div><div style="position:absolute;left:236.7px;top:80.0px;width:20.2px;height:20.5px;background:rgb(55,55,55)"></div><div style="position:absolute;left:256.3px;top:80.0px;width:20.2px;height:20.5px;background:rgb(110,110,110)"></div><div style="position:absolute;left:276.0px;top:80.0px;width:20.2px;height:20.5px;background:rgb(150,150,150)"></div><div style="position:absolute;left:295.7px;top:80.0px;width:20.2px;height:20.5px;background:rgb(140,140,140)"></div><div style="position:absolute;left:315.3px;top:80.0px;width:20.2px;height:20.5px;background:rgb(160,160,160)"></div><div style="position:absolute;left:335.0px;top:80.0px;width:20.2px;height:20.5px;background:rgb(170,170,170)"></div><div style="position:absolute;left:354.7px;top:80.0px;width:20.2px;height:20.5px;background:rgb(205,205,205)"></div><div style="position:absolute;left:374.3px;top:80.0px;width:20.2px;height:20.5px;background:rgb(250,250,250)"></div><div style="position:absolute;left:394.0px;top:80.0px;width:20.2px;height:20.5px;background:rgb(250,250,250)"></div><div style="position:absolute;left:413.7px;top:80.0px;width:20.2px;height:20.5px;background:rgb(250,250,250)"></div><div style="position:absolute;left:433.3px;top:80.0px;width:20.2px;height:20.5px;background:rgb(215,215,215)"></div><div style="position:absolute;left:453.0px;top:80.0px;width:20.2px;height:20.5px;background:rgb(205,205,205)"></div><div style="position:absolute;left:472.7px;top:80.0px;width:20.2px;height:20.5px;background:rgb(220,220,220)"></div><div style="position:absolute;left:492.3px;top:80.0px;width:20.2px;height:20.5px;background:rgb(150,150,150)"></div><div style="position:absolute;left:512.0px;top:80.0px;width:20.2px;height:20.5px;background:rgb(150,150,150)"></div><div style="position:absolute;left:531.7px;top:80.0px;width:20.2px;height:20.5px;background:rgb(150,150,150)"></div><div style="position:absolute;left:551.3px;top:80.0px;width:20.2px;height:20.5px;background:rgb(150,150,150)"></div><div style="position:absolute;left:571.0px;top:80.0px;width:20.2px;height:20.5px;background:rgb(150,150,150)"></div><div style="position:absolute;left:590.7px;top:80.0px;width:20.2px;height:20.5px;background:rgb(150,150,150)"></div><div style="position:absolute;left:610.3px;top:80.0px;width:20.2px;height:20.5px;background:rgb(150,150,150)"></div><div style="position:absolute;left:630.0px;top:80.0px;width:20.2px;height:20.5px;background:rgb(150,150,150)"></div><div style="position:absolute;left:649.7px;top:80.0px;width:20.2px;height:20.5px;background:rgb(150,150,150)"></div><div style="position:absolute;left:669.3px;top:80.0px;width:20.2px;height:20.5px;background:rgb(150,150,150)"></div><div style="position:absolute;left:-19.0px;top:100.0px;width:20.2px;height:20.5px;background:rgb(50,50,50)"></div><div style="position:absolute;left:0.7px;top:100.0px;width:20.2px;height:20.5px;background:rgb(50,50,50)"></div><div style="position:absolute;left:20.3px;top:100.0px;width:20.2px;height:20.5px;background:rgb(50,50,50)"></div><div style="position:absolute;left:40.0px;top:100.0px;width:20.2px;height:20.5px;background:rgb(50,50,50)"></div><div style="position:absolute;left:59.7px;top:100.0px;width:20.2px;height:20.5px;background:rgb(50,50,50)"></div><div style="position:absolute;left:79.3px;top:100.0px;width:20.2px;height:20.5px;background:rgb(50,50,50)"></div><div style="position:absolute;left:99.0px;top:100.0px;width:20.2px;height:20.5px;background:rgb(50,50,50)"></div><div style="position:absolute;left:118.7px;top:100.0px;width:20.2px;height:20.5px;background:rgb(50,50,50)"></div><div style="position:absolute;left:138.3px;top:100.0px;width:20.2px;height:20.5px;background:rgb(50,50,50)"></div><div style="position:absolute;left:158.0px;top:100.0px;width:20.2px;height:20.5px;background:rgb(62,62,62)"></div><div style="position:absolute;left:177.7px;top:100.0px;width:20.2px;height:20.5px;background:rgb(52,52,52)"></div><div style="position:absolute;left:197.3px;top:100.0px;width:20.2px;height:20.5px;background:rgb(62,62,62)"></div><div style="position:absolute;left:217.0px;top:100.0px;width:20.2px;height:20.5px;background:rgb(68,68,68)"></div><div style="position:absolute;left:236.7px;top:100.0px;width:20.2px;height:20.5px;background:rgb(58,58,58)"></div><div style="position:absolute;left:256.3px;top:100.0px;width:20.2px;height:20.5px;background:rgb(130,130,130)"></div><div style="position:absolute;left:276.0px;top:100.0px;width:20.2px;height:20.5px;background:rgb(170,170,170)"></div><div style="position:absolute;left:295.7px;top:100.0px;width:20.2px;height:20.5px;background:rgb(160,160,160)"></div><div style="position:absolute;left:315.3px;top:100.0px;width:20.2px;height:20.5px;background:rgb(190,190,190)"></div><div style="position:absolute;left:335.0px;top:100.0px;width:20.2px;height:20.5px;background:rgb(215,215,215)"></div><div style="position:absolute;left:354.7px;top:100.0px;width:20.2px;height:20.5px;background:rgb(250,250,250)"></div><div style="position:absolute;left:374.3px;top:100.0px;width:20.2px;height:20.5px;background:rgb(250,250,250)"></div><div style="position:absolute;left:394.0px;top:100.0px;width:20.2px;height:20.5px;background:rgb(250,250,250)"></div><div style="position:absolute;left:413.7px;top:100.0px;width:20.2px;height:20.5px;background:rgb(250,250,250)"></div><div style="position:absolute;left:433.3px;top:100.0px;width:20.2px;height:20.5px;background:rgb(215,215,215)"></div><div style="position:absolute;left:453.0px;top:100.0px;width:20.2px;height:20.5px;background:rgb(205,205,205)"></div><div style="position:absolute;left:472.7px;top:100.0px;width:20.2px;height:20.5px;background:rgb(220,220,220)"></div><div style="position:absolute;left:492.3px;top:100.0px;width:20.2px;height:20.5px;background:rgb(150,150,150)"></div><div style="position:absolute;left:512.0px;top:100.0px;width:20.2px;height:20.5px;background:rgb(150,150,150)"></div><div style="position:absolute;left:531.7px;top:100.0px;width:20.2px;height:20.5px;background:rgb(150,150,150)"></div><div style="position:absolute;left:551.3px;top:100.0px;width:20.2px;height:20.5px;background:rgb(150,150,150)"></div><div style="position:absolute;left:571.0px;top:100.0px;width:20.2px;height:20.5px;background:rgb(150,150,150)"></div><div style="position:absolute;left:590.7px;top:100.0px;width:20.2px;height:20.5px;background:rgb(150,150,150)"></div><div style="position:absolute;left:610.3px;top:100.0px;width:20.2px;height:20.5px;background:rgb(150,150,150)"></div><div style="position:absolute;left:630.0px;top:100.0px;width:20.2px;height:20.5px;background:rgb(150,150,150)"></div><div style="position:absolute;left:649.7px;top:100.0px;width:20.2px;height:20.5px;background:rgb(150,150,150)"></div><div style="position:absolute;left:669.3px;top:100.0px;width:20.2px;height:20.5px;background:rgb(150,150,150)"></div><div style="position:absolute;left:-19.0px;top:120.0px;width:20.2px;height:20.5px;background:rgb(50,50,50)"></div><div style="position:absolute;left:0.7px;top:120.0px;width:20.2px;height:20.5px;background:rgb(50,50,50)"></div><div style="position:absolute;left:20.3px;top:120.0px;width:20.2px;height:20.5px;background:rgb(50,50,50)"></div><div style="position:absolute;left:40.0px;top:120.0px;width:20.2px;height:20.5px;background:rgb(50,50,50)"></div><div style="position:absolute;left:59.7px;top:120.0px;width:20.2px;height:20.5px;background:rgb(50,50,50)"></div><div style="position:absolute;left:79.3px;top:120.0px;width:20.2px;height:20.5px;background:rgb(50,50,50)"></div><div style="position:absolute;left:99.0px;top:120.0px;width:20.2px;height:20.5px;background:rgb(50,50,50)"></div><div style="position:absolute;left:118.7px;top:120.0px;width:20.2px;height:20.5px;background:rgb(50,50,50)"></div><div style="position:absolute;left:138.3px;top:120.0px;width:20.2px;height:20.5px;background:rgb(50,50,50)"></div><div style="position:absolute;left:158.0px;top:120.0px;width:20.2px;height:20.5px;background:rgb(62,62,62)"></div><div style="position:absolute;left:177.7px;top:120.0px;width:20.2px;height:20.5px;background:rgb(52,52,52)"></div><div style="position:absolute;left:197.3px;top:120.0px;width:20.2px;height:20.5px;background:rgb(62,62,62)"></div><div style="position:absolute;left:217.0px;top:120.0px;width:20.2px;height:20.5px;background:rgb(65,65,65)"></div><div style="position:absolute;left:236.7px;top:120.0px;width:20.2px;height:20.5px;background:rgb(60,60,60)"></div><div style="position:absolute;left:256.3px;top:120.0px;width:20.2px;height:20.5px;background:rgb(100,100,100)"></div><div style="position:absolute;left:276.0px;top:120.0px;width:20.2px;height:20.5px;background:rgb(150,150,150)"></div><div style="position:absolute;left:295.7px;top:120.0px;width:20.2px;height:20.5px;background:rgb(190,190,190)"></div><div style="position:absolute;left:315.3px;top:120.0px;width:20.2px;height:20.5px;background:rgb(210,210,210)"></div><div style="position:absolute;left:335.0px;top:120.0px;width:20.2px;height:20.5px;background:rgb(215,215,215)"></div><div style="position:absolute;left:354.7px;top:120.0px;width:20.2px;height:20.5px;background:rgb(250,250,250)"></div><div style="position:absolute;left:374.3px;top:120.0px;width:20.2px;height:20.5px;background:rgb(250,250,250)"></div><div style="position:absolute;left:394.0px;top:120.0px;width:20.2px;height:20.5px;background:rgb(250,250,250)"></div><div style="position:absolute;left:413.7px;top:120.0px;width:20.2px;height:20.5px;background:rgb(250,250,250)"></div><div style="position:absolute;left:433.3px;top:120.0px;width:20.2px;height:20.5px;background:rgb(215,215,215)"></div><div style="position:absolute;left:453.0px;top:120.0px;width:20.2px;height:20.5px;background:rgb(205,205,205)"></div><div style="position:absolute;left:472.7px;top:120.0px;width:20.2px;height:20.5px;background:rgb(220,220,220)"></div><div style="position:absolute;left:492.3px;top:120.0px;width:20.2px;height:20.5px;background:rgb(150,150,150)"></div><div style="position:absolute;left:512.0px;top:120.0px;width:20.2px;height:20.5px;background:rgb(150,150,150)"></div><div style="position:absolute;left:531.7px;top:120.0px;width:20.2px;height:20.5px;background:rgb(150,150,150)"></div><div style="position:absolute;left:551.3px;top:120.0px;width:20.2px;height:20.5px;background:rgb(150,150,150)"></div><div style="position:absolute;left:571.0px;top:120.0px;width:20.2px;height:20.5px;background:rgb(150,150,150)"></div><div style="position:absolute;left:590.7px;top:120.0px;width:20.2px;height:20.5px;background:rgb(150,150,150)"></div><div style="position:absolute;left:610.3px;top:120.0px;width:20.2px;height:20.5px;background:rgb(150,150,150)"></div><div style="position:absolute;left:630.0px;top:120.0px;width:20.2px;height:20.5px;background:rgb(150,150,150)"></div><div style="position:absolute;left:649.7px;top:120.0px;width:20.2px;height:20.5px;background:rgb(150,150,150)"></div><div style="position:absolute;left:669.3px;top:120.0px;width:20.2px;height:20.5px;background:rgb(150,150,150)"></div><div style="position:absolute;left:-19.0px;top:140.0px;width:20.2px;height:20.5px;background:rgb(50,50,50)"></div><div style="position:absolute;left:0.7px;top:140.0px;width:20.2px;height:20.5px;background:rgb(50,50,50)"></div><div style="position:absolute;left:20.3px;top:140.0px;width:20.2px;height:20.5px;background:rgb(50,50,50)"></div><div style="position:absolute;left:40.0px;top:140.0px;width:20.2px;height:20.5px;background:rgb(50,50,50)"></div><div style="position:absolute;left:59.7px;top:140.0px;width:20.2px;height:20.5px;background:rgb(50,50,50)"></div><div style="position:absolute;left:79.3px;top:140.0px;width:20.2px;height:20.5px;background:rgb(50,50,50)"></div><div style="position:absolute;left:99.0px;top:140.0px;width:20.2px;height:20.5px;background:rgb(50,50,50)"></div><div style="position:absolute;left:118.7px;top:140.0px;width:20.2px;height:20.5px;background:rgb(50,50,50)"></div><div style="position:absolute;left:138.3px;top:140.0px;width:20.2px;height:20.5px;background:rgb(50,50,50)"></div><div style="position:absolute;left:158.0px;top:140.0px;width:20.2px;height:20.5px;background:rgb(62,62,62)"></div><div style="position:absolute;left:177.7px;top:140.0px;width:20.2px;height:20.5px;background:rgb(52,52,52)"></div><div style="position:absolute;left:197.3px;top:140.0px;width:20.2px;height:20.5px;background:rgb(62,62,62)"></div><div style="position:absolute;left:217.0px;top:140.0px;width:20.2px;height:20.5px;background:rgb(65,65,65)"></div><div style="position:absolute;left:236.7px;top:140.0px;width:20.2px;height:20.5px;background:rgb(58,58,58)"></div><div style="position:absolute;left:256.3px;top:140.0px;width:20.2px;height:20.5px;background:rgb(80,80,80)"></div><div style="position:absolute;left:276.0px;top:140.0px;width:20.2px;height:20.5px;background:rgb(120,120,120)"></div><div style="position:absolute;left:295.7px;top:140.0px;width:20.2px;height:20.5px;background:rgb(180,180,180)"></div><div style="position:absolute;left:315.3px;top:140.0px;width:20.2px;height:20.5px;background:rgb(210,210,210)"></div><div style="position:absolute;left:335.0px;top:140.0px;width:20.2px;height:20.5px;background:rgb(215,215,215)"></div><div style="position:absolute;left:354.7px;top:140.0px;width:20.2px;height:20.5px;background:rgb(250,250,250)"></div><div style="position:absolute;left:374.3px;top:140.0px;width:20.2px;height:20.5px;background:rgb(250,250,250)"></div><div style="position:absolute;left:394.0px;top:140.0px;width:20.2px;height:20.5px;background:rgb(250,250,250)"></div><div style="position:absolute;left:413.7px;top:140.0px;width:20.2px;height:20.5px;background:rgb(250,250,250)"></div><div style="position:absolute;left:433.3px;top:140.0px;width:20.2px;height:20.5px;background:rgb(215,215,215)"></div><div style="position:absolute;left:453.0px;top:140.0px;width:20.2px;height:20.5px;background:rgb(205,205,205)"></div><div style="position:absolute;left:472.7px;top:140.0px;width:20.2px;height:20.5px;background:rgb(220,220,220)"></div><div style="position:absolute;left:492.3px;top:140.0px;width:20.2px;height:20.5px;background:rgb(150,150,150)"></div><div style="position:absolute;left:512.0px;top:140.0px;width:20.2px;height:20.5px;background:rgb(150,150,150)"></div><div style="position:absolute;left:531.7px;top:140.0px;width:20.2px;height:20.5px;background:rgb(150,150,150)"></div><div style="position:absolute;left:551.3px;top:140.0px;width:20.2px;height:20.5px;background:rgb(150,150,150)"></div><div style="position:absolute;left:571.0px;top:140.0px;width:20.2px;height:20.5px;background:rgb(150,150,150)"></div><div style="position:absolute;left:590.7px;top:140.0px;width:20.2px;height:20.5px;background:rgb(150,150,150)"></div><div style="position:absolute;left:610.3px;top:140.0px;width:20.2px;height:20.5px;background:rgb(150,150,150)"></div><div style="position:absolute;left:630.0px;top:140.0px;width:20.2px;height:20.5px;background:rgb(150,150,150)"></div><div style="position:absolute;left:649.7px;top:140.0px;width:20.2px;height:20.5px;background:rgb(150,150,150)"></div><div style="position:absolute;left:669.3px;top:140.0px;width:20.2px;height:20.5px;background:rgb(150,150,150)"></div><div style="position:absolute;left:-19.0px;top:160.0px;width:20.2px;height:20.5px;background:rgb(50,50,50)"></div><div style="position:absolute;left:0.7px;top:160.0px;width:20.2px;height:20.5px;background:rgb(50,50,50)"></div><div style="position:absolute;left:20.3px;top:160.0px;width:20.2px;height:20.5px;background:rgb(50,50,50)"></div><div style="position:absolute;left:40.0px;top:160.0px;width:20.2px;height:20.5px;background:rgb(50,50,50)"></div><div style="position:absolute;left:59.7px;top:160.0px;width:20.2px;height:20.5px;background:rgb(50,50,50)"></div><div style="position:absolute;left:79.3px;top:160.0px;width:20.2px;height:20.5px;background:rgb(50,50,50)"></div><div style="position:absolute;left:99.0px;top:160.0px;width:20.2px;height:20.5px;background:rgb(50,50,50)"></div><div style="position:absolute;left:118.7px;top:160.0px;width:20.2px;height:20.5px;background:rgb(50,50,50)"></div><div style="position:absolute;left:138.3px;top:160.0px;width:20.2px;height:20.5px;background:rgb(50,50,50)"></div><div style="position:absolute;left:158.0px;top:160.0px;width:20.2px;height:20.5px;background:rgb(62,62,62)"></div><div style="position:absolute;left:177.7px;top:160.0px;width:20.2px;height:20.5px;background:rgb(58,58,58)"></div><div style="position:absolute;left:197.3px;top:160.0px;width:20.2px;height:20.5px;background:rgb(62,62,62)"></div><div style="position:absolute;left:217.0px;top:160.0px;width:20.2px;height:20.5px;background:rgb(62,62,62)"></div><div style="position:absolute;left:236.7px;top:160.0px;width:20.2px;height:20.5px;background:rgb(60,60,60)"></div><div style="position:absolute;left:256.3px;top:160.0px;width:20.2px;height:20.5px;background:rgb(70,70,70)"></div><div style="position:absolute;left:276.0px;top:160.0px;width:20.2px;height:20.5px;background:rgb(90,90,90)"></div><div style="position:absolute;left:295.7px;top:160.0px;width:20.2px;height:20.5px;background:rgb(160,160,160)"></div><div style="position:absolute;left:315.3px;top:160.0px;width:20.2px;height:20.5px;background:rgb(200,200,200)"></div><div style="position:absolute;left:335.0px;top:160.0px;width:20.2px;height:20.5px;background:rgb(215,215,215)"></div><div style="position:absolute;left:354.7px;top:160.0px;width:20.2px;height:20.5px;background:rgb(250,250,250)"></div><div style="position:absolute;left:374.3px;top:160.0px;width:20.2px;height:20.5px;background:rgb(250,250,250)"></div><div style="position:absolute;left:394.0px;top:160.0px;width:20.2px;height:20.5px;background:rgb(250,250,250)"></div><div style="position:absolute;left:413.7px;top:160.0px;width:20.2px;height:20.5px;background:rgb(250,250,250)"></div><div style="position:absolute;left:433.3px;top:160.0px;width:20.2px;height:20.5px;background:rgb(215,215,215)"></div><div style="position:absolute;left:453.0px;top:160.0px;width:20.2px;height:20.5px;background:rgb(205,205,205)"></div><div style="position:absolute;left:472.7px;top:160.0px;width:20.2px;height:20.5px;background:rgb(220,220,220)"></div><div style="position:absolute;left:492.3px;top:160.0px;width:20.2px;height:20.5px;background:rgb(150,150,150)"></div><div style="position:absolute;left:512.0px;top:160.0px;width:20.2px;height:20.5px;background:rgb(150,150,150)"></div><div style="position:absolute;left:531.7px;top:160.0px;width:20.2px;height:20.5px;background:rgb(150,150,150)"></div><div style="position:absolute;left:551.3px;top:160.0px;width:20.2px;height:20.5px;background:rgb(150,150,150)"></div><div style="position:absolute;left:571.0px;top:160.0px;width:20.2px;height:20.5px;background:rgb(150,150,150)"></div><div style="position:absolute;left:590.7px;top:160.0px;width:20.2px;height:20.5px;background:rgb(150,150,150)"></div><div style="position:absolute;left:610.3px;top:160.0px;width:20.2px;height:20.5px;background:rgb(150,150,150)"></div><div style="position:absolute;left:630.0px;top:160.0px;width:20.2px;height:20.5px;background:rgb(150,150,150)"></div><div style="position:absolute;left:649.7px;top:160.0px;width:20.2px;height:20.5px;background:rgb(150,150,150)"></div><div style="position:absolute;left:669.3px;top:160.0px;width:20.2px;height:20.5px;background:rgb(150,150,150)"></div><div style="position:absolute;left:-19.0px;top:180.0px;width:20.2px;height:20.5px;background:rgb(54,54,54)"></div><div style="position:absolute;left:0.7px;top:180.0px;width:20.2px;height:20.5px;background:rgb(54,54,54)"></div><div style="position:absolute;left:20.3px;top:180.0px;width:20.2px;height:20.5px;background:rgb(54,54,54)"></div><div style="position:absolute;left:40.0px;top:180.0px;width:20.2px;height:20.5px;background:rgb(54,54,54)"></div><div style="position:absolute;left:59.7px;top:180.0px;width:20.2px;height:20.5px;background:rgb(54,54,54)"></div><div style="position:absolute;left:79.3px;top:180.0px;width:20.2px;height:20.5px;background:rgb(54,54,54)"></div><div style="position:absolute;left:99.0px;top:180.0px;width:20.2px;height:20.5px;background:rgb(54,54,54)"></div><div style="position:absolute;left:118.7px;top:180.0px;width:20.2px;height:20.5px;background:rgb(54,54,54)"></div><div style="position:absolute;left:138.3px;top:180.0px;width:20.2px;height:20.5px;background:rgb(54,54,54)"></div><div style="position:absolute;left:158.0px;top:180.0px;width:20.2px;height:20.5px;background:rgb(62,62,62)"></div><div style="position:absolute;left:177.7px;top:180.0px;width:20.2px;height:20.5px;background:rgb(58,58,58)"></div><div style="position:absolute;left:197.3px;top:180.0px;width:20.2px;height:20.5px;background:rgb(62,62,62)"></div><div style="position:absolute;left:217.0px;top:180.0px;width:20.2px;height:20.5px;background:rgb(70,70,70)"></div><div style="position:absolute;left:236.7px;top:180.0px;width:20.2px;height:20.5px;background:rgb(120,120,120)"></div><div style="position:absolute;left:256.3px;top:180.0px;width:20.2px;height:20.5px;background:rgb(100,100,100)"></div><div style="position:absolute;left:276.0px;top:180.0px;width:20.2px;height:20.5px;background:rgb(65,65,65)"></div><div style="position:absolute;left:295.7px;top:180.0px;width:20.2px;height:20.5px;background:rgb(150,150,150)"></div><div style="position:absolute;left:315.3px;top:180.0px;width:20.2px;height:20.5px;background:rgb(160,160,160)"></div><div style="position:absolute;left:335.0px;top:180.0px;width:20.2px;height:20.5px;background:rgb(200,200,200)"></div><div style="position:absolute;left:354.7px;top:180.0px;width:20.2px;height:20.5px;background:rgb(230,230,230)"></div><div style="position:absolute;left:374.3px;top:180.0px;width:20.2px;height:20.5px;background:rgb(240,240,240)"></div><div style="position:absolute;left:394.0px;top:180.0px;width:20.2px;height:20.5px;background:rgb(240,240,240)"></div><div style="position:absolute;left:413.7px;top:180.0px;width:20.2px;height:20.5px;background:rgb(240,240,240)"></div><div style="position:absolute;left:433.3px;top:180.0px;width:20.2px;height:20.5px;background:rgb(215,215,215)"></div><div style="position:absolute;left:453.0px;top:180.0px;width:20.2px;height:20.5px;background:rgb(205,205,205)"></div><div style="position:absolute;left:472.7px;top:180.0px;width:20.2px;height:20.5px;background:rgb(220,220,220)"></div><div style="position:absolute;left:492.3px;top:180.0px;width:20.2px;height:20.5px;background:rgb(90,90,90)"></div><div style="position:absolute;left:512.0px;top:180.0px;width:20.2px;height:20.5px;background:rgb(90,90,90)"></div><div style="position:absolute;left:531.7px;top:180.0px;width:20.2px;height:20.5px;background:rgb(90,90,90)"></div><div style="position:absolute;left:551.3px;top:180.0px;width:20.2px;height:20.5px;background:rgb(90,90,90)"></div><div style="position:absolute;left:571.0px;top:180.0px;width:20.2px;height:20.5px;background:rgb(90,90,90)"></div><div style="position:absolute;left:590.7px;top:180.0px;width:20.2px;height:20.5px;background:rgb(90,90,90)"></div><div style="position:absolute;left:610.3px;top:180.0px;width:20.2px;height:20.5px;background:rgb(90,90,90)"></div><div style="position:absolute;left:630.0px;top:180.0px;width:20.2px;height:20.5px;background:rgb(90,90,90)"></div><div style="position:absolute;left:649.7px;top:180.0px;width:20.2px;height:20.5px;background:rgb(90,90,90)"></div><div style="position:absolute;left:669.3px;top:180.0px;width:20.2px;height:20.5px;background:rgb(90,90,90)"></div><div style="position:absolute;left:-19.0px;top:200.0px;width:20.2px;height:20.5px;background:rgb(54,54,54)"></div><div style="position:absolute;left:0.7px;top:200.0px;width:20.2px;height:20.5px;background:rgb(54,54,54)"></div><div style="position:absolute;left:20.3px;top:200.0px;width:20.2px;height:20.5px;background:rgb(54,54,54)"></div><div style="position:absolute;left:40.0px;top:200.0px;width:20.2px;height:20.5px;background:rgb(54,54,54)"></div><div style="position:absolute;left:59.7px;top:200.0px;width:20.2px;height:20.5px;background:rgb(54,54,54)"></div><div style="position:absolute;left:79.3px;top:200.0px;width:20.2px;height:20.5px;background:rgb(54,54,54)"></div><div style="position:absolute;left:99.0px;top:200.0px;width:20.2px;height:20.5px;background:rgb(54,54,54)"></div><div style="position:absolute;left:118.7px;top:200.0px;width:20.2px;height:20.5px;background:rgb(54,54,54)"></div><div style="position:absolute;left:138.3px;top:200.0px;width:20.2px;height:20.5px;background:rgb(54,54,54)"></div><div style="position:absolute;left:158.0px;top:200.0px;width:20.2px;height:20.5px;background:rgb(62,62,62)"></div><div style="position:absolute;left:177.7px;top:200.0px;width:20.2px;height:20.5px;background:rgb(58,58,58)"></div><div style="position:absolute;left:197.3px;top:200.0px;width:20.2px;height:20.5px;background:rgb(62,62,62)"></div><div style="position:absolute;left:217.0px;top:200.0px;width:20.2px;height:20.5px;background:rgb(80,80,80)"></div><div style="position:absolute;left:236.7px;top:200.0px;width:20.2px;height:20.5px;background:rgb(100,100,100)"></div><div style="position:absolute;left:256.3px;top:200.0px;width:20.2px;height:20.5px;background:rgb(75,75,75)"></div><div style="position:absolute;left:276.0px;top:200.0px;width:20.2px;height:20.5px;background:rgb(70,70,70)"></div><div style="position:absolute;left:295.7px;top:200.0px;width:20.2px;height:20.5px;background:rgb(110,110,110)"></div><div style="position:absolute;left:315.3px;top:200.0px;width:20.2px;height:20.5px;background:rgb(120,120,120)"></div><div style="position:absolute;left:335.0px;top:200.0px;width:20.2px;height:20.5px;background:rgb(170,170,170)"></div><div style="position:absolute;left:354.7px;top:200.0px;width:20.2px;height:20.5px;background:rgb(180,180,180)"></div><div style="position:absolute;left:374.3px;top:200.0px;width:20.2px;height:20.5px;background:rgb(185,185,185)"></div><div style="position:absolute;left:394.0px;top:200.0px;width:20.2px;height:20.5px;background:rgb(190,190,190)"></div><div style="position:absolute;left:413.7px;top:200.0px;width:20.2px;height:20.5px;background:rgb(175,175,175)"></div><div style="position:absolute;left:433.3px;top:200.0px;width:20.2px;height:20.5px;background:rgb(160,160,160)"></div><div style="position:absolute;left:453.0px;top:200.0px;width:20.2px;height:20.5px;background:rgb(140,140,140)"></div><div style="position:absolute;left:472.7px;top:200.0px;width:20.2px;height:20.5px;background:rgb(85,85,85)"></div><div style="position:absolute;left:492.3px;top:200.0px;width:20.2px;height:20.5px;background:rgb(85,85,85)"></div><div style="position:absolute;left:512.0px;top:200.0px;width:20.2px;height:20.5px;background:rgb(85,85,85)"></div><div style="position:absolute;left:531.7px;top:200.0px;width:20.2px;height:20.5px;background:rgb(85,85,85)"></div><div style="position:absolute;left:551.3px;top:200.0px;width:20.2px;height:20.5px;background:rgb(85,85,85)"></div><div style="position:absolute;left:571.0px;top:200.0px;width:20.2px;height:20.5px;background:rgb(85,85,85)"></div><div style="position:absolute;left:590.7px;top:200.0px;width:20.2px;height:20.5px;background:rgb(85,85,85)"></div><div style="position:absolute;left:610.3px;top:200.0px;width:20.2px;height:20.5px;background:rgb(85,85,85)"></div><div style="position:absolute;left:630.0px;top:200.0px;width:20.2px;height:20.5px;background:rgb(85,85,85)"></div><div style="position:absolute;left:649.7px;top:200.0px;width:20.2px;height:20.5px;background:rgb(85,85,85)"></div><div style="position:absolute;left:669.3px;top:200.0px;width:20.2px;height:20.5px;background:rgb(85,85,85)"></div><div style="position:absolute;left:-19.0px;top:220.0px;width:20.2px;height:20.5px;background:rgb(61,61,61)"></div><div style="position:absolute;left:0.7px;top:220.0px;width:20.2px;height:20.5px;background:rgb(61,61,61)"></div><div style="position:absolute;left:20.3px;top:220.0px;width:20.2px;height:20.5px;background:rgb(61,61,61)"></div><div style="position:absolute;left:40.0px;top:220.0px;width:20.2px;height:20.5px;background:rgb(61,61,61)"></div><div style="position:absolute;left:59.7px;top:220.0px;width:20.2px;height:20.5px;background:rgb(59,59,59)"></div><div style="position:absolute;left:79.3px;top:220.0px;width:20.2px;height:20.5px;background:rgb(58,58,58)"></div><div style="position:absolute;left:99.0px;top:220.0px;width:20.2px;height:20.5px;background:rgb(58,58,58)"></div><div style="position:absolute;left:118.7px;top:220.0px;width:20.2px;height:20.5px;background:rgb(58,58,58)"></div><div style="position:absolute;left:138.3px;top:220.0px;width:20.2px;height:20.5px;background:rgb(58,58,58)"></div><div style="position:absolute;left:158.0px;top:220.0px;width:20.2px;height:20.5px;background:rgb(58,58,58)"></div><div style="position:absolute;left:177.7px;top:220.0px;width:20.2px;height:20.5px;background:rgb(58,58,58)"></div><div style="position:absolute;left:197.3px;top:220.0px;width:20.2px;height:20.5px;background:rgb(59,59,59)"></div><div style="position:absolute;left:217.0px;top:220.0px;width:20.2px;height:20.5px;background:rgb(69,69,69)"></div><div style="position:absolute;left:236.7px;top:220.0px;width:20.2px;height:20.5px;background:rgb(90,90,90)"></div><div style="position:absolute;left:256.3px;top:220.0px;width:20.2px;height:20.5px;background:rgb(95,95,95)"></div><div style="position:absolute;left:276.0px;top:220.0px;width:20.2px;height:20.5px;background:rgb(100,100,100)"></div><div style="position:absolute;left:295.7px;top:220.0px;width:20.2px;height:20.5px;background:rgb(105,105,105)"></div><div style="position:absolute;left:315.3px;top:220.0px;width:20.2px;height:20.5px;background:rgb(110,110,110)"></div><div style="position:absolute;left:335.0px;top:220.0px;width:20.2px;height:20.5px;background:rgb(69,69,69)"></div><div style="position:absolute;left:354.7px;top:220.0px;width:20.2px;height:20.5px;background:rgb(65,65,65)"></div><div style="position:absolute;left:374.3px;top:220.0px;width:20.2px;height:20.5px;background:rgb(65,65,65)"></div><div style="position:absolute;left:394.0px;top:220.0px;width:20.2px;height:20.5px;background:rgb(69,69,69)"></div><div style="position:absolute;left:413.7px;top:220.0px;width:20.2px;height:20.5px;background:rgb(85,85,85)"></div><div style="position:absolute;left:433.3px;top:220.0px;width:20.2px;height:20.5px;background:rgb(95,95,95)"></div><div style="position:absolute;left:453.0px;top:220.0px;width:20.2px;height:20.5px;background:rgb(80,80,80)"></div><div style="position:absolute;left:472.7px;top:220.0px;width:20.2px;height:20.5px;background:rgb(72,72,72)"></div><div style="position:absolute;left:492.3px;top:220.0px;width:20.2px;height:20.5px;background:rgb(72,72,72)"></div><div style="position:absolute;left:512.0px;top:220.0px;width:20.2px;height:20.5px;background:rgb(74,74,74)"></div><div style="position:absolute;left:531.7px;top:220.0px;width:20.2px;height:20.5px;background:rgb(66,66,66)"></div><div style="position:absolute;left:551.3px;top:220.0px;width:20.2px;height:20.5px;background:rgb(64,64,64)"></div><div style="position:absolute;left:571.0px;top:220.0px;width:20.2px;height:20.5px;background:rgb(76,76,76)"></div><div style="position:absolute;left:590.7px;top:220.0px;width:20.2px;height:20.5px;background:rgb(80,80,80)"></div><div style="position:absolute;left:610.3px;top:220.0px;width:20.2px;height:20.5px;background:rgb(78,78,78)"></div><div style="position:absolute;left:630.0px;top:220.0px;width:20.2px;height:20.5px;background:rgb(78,78,78)"></div><div style="position:absolute;left:649.7px;top:220.0px;width:20.2px;height:20.5px;background:rgb(78,78,78)"></div><div style="position:absolute;left:669.3px;top:220.0px;width:20.2px;height:20.5px;background:rgb(78,78,78)"></div><div style="position:absolute;left:-19.0px;top:240.0px;width:20.2px;height:20.5px;background:rgb(65,65,65)"></div><div style="position:absolute;left:0.7px;top:240.0px;width:20.2px;height:20.5px;background:rgb(65,65,65)"></div><div style="position:absolute;left:20.3px;top:240.0px;width:20.2px;height:20.5px;background:rgb(65,65,65)"></div><div style="position:absolute;left:40.0px;top:240.0px;width:20.2px;height:20.5px;background:rgb(65,65,65)"></div><div style="position:absolute;left:59.7px;top:240.0px;width:20.2px;height:20.5px;background:rgb(61,61,61)"></div><div style="position:absolute;left:79.3px;top:240.0px;width:20.2px;height:20.5px;background:rgb(58,58,58)"></div><div style="position:absolute;left:99.0px;top:240.0px;width:20.2px;height:20.5px;background:rgb(58,58,58)"></div><div style="position:absolute;left:118.7px;top:240.0px;width:20.2px;height:20.5px;background:rgb(58,58,58)"></div><div style="position:absolute;left:138.3px;top:240.0px;width:20.2px;height:20.5px;background:rgb(58,58,58)"></div><div style="position:absolute;left:158.0px;top:240.0px;width:20.2px;height:20.5px;background:rgb(58,58,58)"></div><div style="position:absolute;left:177.7px;top:240.0px;width:20.2px;height:20.5px;background:rgb(58,58,58)"></div><div style="position:absolute;left:197.3px;top:240.0px;width:20.2px;height:20.5px;background:rgb(58,58,58)"></div><div style="position:absolute;left:217.0px;top:240.0px;width:20.2px;height:20.5px;background:rgb(61,61,61)"></div><div style="position:absolute;left:236.7px;top:240.0px;width:20.2px;height:20.5px;background:rgb(80,80,80)"></div><div style="position:absolute;left:256.3px;top:240.0px;width:20.2px;height:20.5px;background:rgb(92,92,92)"></div><div style="position:absolute;left:276.0px;top:240.0px;width:20.2px;height:20.5px;background:rgb(95,95,95)"></div><div style="position:absolute;left:295.7px;top:240.0px;width:20.2px;height:20.5px;background:rgb(100,100,100)"></div><div style="position:absolute;left:315.3px;top:240.0px;width:20.2px;height:20.5px;background:rgb(100,100,100)"></div><div style="position:absolute;left:335.0px;top:240.0px;width:20.2px;height:20.5px;background:rgb(120,120,120)"></div><div style="position:absolute;left:354.7px;top:240.0px;width:20.2px;height:20.5px;background:rgb(125,125,125)"></div><div style="position:absolute;left:374.3px;top:240.0px;width:20.2px;height:20.5px;background:rgb(105,105,105)"></div><div style="position:absolute;left:394.0px;top:240.0px;width:20.2px;height:20.5px;background:rgb(80,80,80)"></div><div style="position:absolute;left:413.7px;top:240.0px;width:20.2px;height:20.5px;background:rgb(85,85,85)"></div><div style="position:absolute;left:433.3px;top:240.0px;width:20.2px;height:20.5px;background:rgb(80,80,80)"></div><div style="position:absolute;left:453.0px;top:240.0px;width:20.2px;height:20.5px;background:rgb(74,74,74)"></div><div style="position:absolute;left:472.7px;top:240.0px;width:20.2px;height:20.5px;background:rgb(72,72,72)"></div><div style="position:absolute;left:492.3px;top:240.0px;width:20.2px;height:20.5px;background:rgb(71,71,71)"></div><div style="position:absolute;left:512.0px;top:240.0px;width:20.2px;height:20.5px;background:rgb(72,72,72)"></div><div style="position:absolute;left:531.7px;top:240.0px;width:20.2px;height:20.5px;background:rgb(65,65,65)"></div><div style="position:absolute;left:551.3px;top:240.0px;width:20.2px;height:20.5px;background:rgb(64,64,64)"></div><div style="position:absolute;left:571.0px;top:240.0px;width:20.2px;height:20.5px;background:rgb(76,76,76)"></div><div style="position:absolute;left:590.7px;top:240.0px;width:20.2px;height:20.5px;background:rgb(82,82,82)"></div><div style="position:absolute;left:610.3px;top:240.0px;width:20.2px;height:20.5px;background:rgb(78,78,78)"></div><div style="position:absolute;left:630.0px;top:240.0px;width:20.2px;height:20.5px;background:rgb(78,78,78)"></div><div style="position:absolute;left:649.7px;top:240.0px;width:20.2px;height:20.5px;background:rgb(78,78,78)"></div><div style="position:absolute;left:669.3px;top:240.0px;width:20.2px;height:20.5px;background:rgb(78,78,78)"></div><div style="position:absolute;left:-19.0px;top:260.0px;width:20.2px;height:20.5px;background:rgb(69,69,69)"></div><div style="position:absolute;left:0.7px;top:260.0px;width:20.2px;height:20.5px;background:rgb(69,69,69)"></div><div style="position:absolute;left:20.3px;top:260.0px;width:20.2px;height:20.5px;background:rgb(69,69,69)"></div><div style="position:absolute;left:40.0px;top:260.0px;width:20.2px;height:20.5px;background:rgb(69,69,69)"></div><div style="position:absolute;left:59.7px;top:260.0px;width:20.2px;height:20.5px;background:rgb(66,66,66)"></div><div style="position:absolute;left:79.3px;top:260.0px;width:20.2px;height:20.5px;background:rgb(61,61,61)"></div><div style="position:absolute;left:99.0px;top:260.0px;width:20.2px;height:20.5px;background:rgb(58,58,58)"></div><div style="position:absolute;left:118.7px;top:260.0px;width:20.2px;height:20.5px;background:rgb(58,58,58)"></div><div style="position:absolute;left:138.3px;top:260.0px;width:20.2px;height:20.5px;background:rgb(58,58,58)"></div><div style="position:absolute;left:158.0px;top:260.0px;width:20.2px;height:20.5px;background:rgb(58,58,58)"></div><div style="position:absolute;left:177.7px;top:260.0px;width:20.2px;height:20.5px;background:rgb(58,58,58)"></div><div style="position:absolute;left:197.3px;top:260.0px;width:20.2px;height:20.5px;background:rgb(58,58,58)"></div><div style="position:absolute;left:217.0px;top:260.0px;width:20.2px;height:20.5px;background:rgb(59,59,59)"></div><div style="position:absolute;left:236.7px;top:260.0px;width:20.2px;height:20.5px;background:rgb(65,65,65)"></div><div style="position:absolute;left:256.3px;top:260.0px;width:20.2px;height:20.5px;background:rgb(76,76,76)"></div><div style="position:absolute;left:276.0px;top:260.0px;width:20.2px;height:20.5px;background:rgb(85,85,85)"></div><div style="position:absolute;left:295.7px;top:260.0px;width:20.2px;height:20.5px;background:rgb(90,90,90)"></div><div style="position:absolute;left:315.3px;top:260.0px;width:20.2px;height:20.5px;background:rgb(90,90,90)"></div><div style="position:absolute;left:335.0px;top:260.0px;width:20.2px;height:20.5px;background:rgb(108,108,108)"></div><div style="position:absolute;left:354.7px;top:260.0px;width:20.2px;height:20.5px;background:rgb(102,102,102)"></div><div style="position:absolute;left:374.3px;top:260.0px;width:20.2px;height:20.5px;background:rgb(90,90,90)"></div><div style="position:absolute;left:394.0px;top:260.0px;width:20.2px;height:20.5px;background:rgb(74,74,74)"></div><div style="position:absolute;left:413.7px;top:260.0px;width:20.2px;height:20.5px;background:rgb(76,76,76)"></div><div style="position:absolute;left:433.3px;top:260.0px;width:20.2px;height:20.5px;background:rgb(72,72,72)"></div><div style="position:absolute;left:453.0px;top:260.0px;width:20.2px;height:20.5px;background:rgb(69,69,69)"></div><div style="position:absolute;left:472.7px;top:260.0px;width:20.2px;height:20.5px;background:rgb(71,71,71)"></div><div style="position:absolute;left:492.3px;top:260.0px;width:20.2px;height:20.5px;background:rgb(69,69,69)"></div><div style="position:absolute;left:512.0px;top:260.0px;width:20.2px;height:20.5px;background:rgb(69,69,69)"></div><div style="position:absolute;left:531.7px;top:260.0px;width:20.2px;height:20.5px;background:rgb(61,61,61)"></div><div style="position:absolute;left:551.3px;top:260.0px;width:20.2px;height:20.5px;background:rgb(66,66,66)"></div><div style="position:absolute;left:571.0px;top:260.0px;width:20.2px;height:20.5px;background:rgb(78,78,78)"></div><div style="position:absolute;left:590.7px;top:260.0px;width:20.2px;height:20.5px;background:rgb(80,80,80)"></div><div style="position:absolute;left:610.3px;top:260.0px;width:20.2px;height:20.5px;background:rgb(76,76,76)"></div><div style="position:absolute;left:630.0px;top:260.0px;width:20.2px;height:20.5px;background:rgb(76,76,76)"></div><div style="position:absolute;left:649.7px;top:260.0px;width:20.2px;height:20.5px;background:rgb(76,76,76)"></div><div style="position:absolute;left:669.3px;top:260.0px;width:20.2px;height:20.5px;background:rgb(76,76,76)"></div><div style="position:absolute;left:-19.0px;top:280.0px;width:20.2px;height:20.5px;background:rgb(71,71,71)"></div><div style="position:absolute;left:0.7px;top:280.0px;width:20.2px;height:20.5px;background:rgb(71,71,71)"></div><div style="position:absolute;left:20.3px;top:280.0px;width:20.2px;height:20.5px;background:rgb(71,71,71)"></div><div style="position:absolute;left:40.0px;top:280.0px;width:20.2px;height:20.5px;background:rgb(71,71,71)"></div><div style="position:absolute;left:59.7px;top:280.0px;width:20.2px;height:20.5px;background:rgb(69,69,69)"></div><div style="position:absolute;left:79.3px;top:280.0px;width:20.2px;height:20.5px;background:rgb(65,65,65)"></div><div style="position:absolute;left:99.0px;top:280.0px;width:20.2px;height:20.5px;background:rgb(59,59,59)"></div><div style="position:absolute;left:118.7px;top:280.0px;width:20.2px;height:20.5px;background:rgb(58,58,58)"></div><div style="position:absolute;left:138.3px;top:280.0px;width:20.2px;height:20.5px;background:rgb(58,58,58)"></div><div style="position:absolute;left:158.0px;top:280.0px;width:20.2px;height:20.5px;background:rgb(58,58,58)"></div><div style="position:absolute;left:177.7px;top:280.0px;width:20.2px;height:20.5px;background:rgb(58,58,58)"></div><div style="position:absolute;left:197.3px;top:280.0px;width:20.2px;height:20.5px;background:rgb(58,58,58)"></div><div style="position:absolute;left:217.0px;top:280.0px;width:20.2px;height:20.5px;background:rgb(58,58,58)"></div><div style="position:absolute;left:236.7px;top:280.0px;width:20.2px;height:20.5px;background:rgb(59,59,59)"></div><div style="position:absolute;left:256.3px;top:280.0px;width:20.2px;height:20.5px;background:rgb(65,65,65)"></div><div style="position:absolute;left:276.0px;top:280.0px;width:20.2px;height:20.5px;background:rgb(72,72,72)"></div><div style="position:absolute;left:295.7px;top:280.0px;width:20.2px;height:20.5px;background:rgb(80,80,80)"></div><div style="position:absolute;left:315.3px;top:280.0px;width:20.2px;height:20.5px;background:rgb(85,85,85)"></div><div style="position:absolute;left:335.0px;top:280.0px;width:20.2px;height:20.5px;background:rgb(85,85,85)"></div><div style="position:absolute;left:354.7px;top:280.0px;width:20.2px;height:20.5px;background:rgb(78,78,78)"></div><div style="position:absolute;left:374.3px;top:280.0px;width:20.2px;height:20.5px;background:rgb(74,74,74)"></div><div style="position:absolute;left:394.0px;top:280.0px;width:20.2px;height:20.5px;background:rgb(69,69,69)"></div><div style="position:absolute;left:413.7px;top:280.0px;width:20.2px;height:20.5px;background:rgb(69,69,69)"></div><div style="position:absolute;left:433.3px;top:280.0px;width:20.2px;height:20.5px;background:rgb(69,69,69)"></div><div style="position:absolute;left:453.0px;top:280.0px;width:20.2px;height:20.5px;background:rgb(65,65,65)"></div><div style="position:absolute;left:472.7px;top:280.0px;width:20.2px;height:20.5px;background:rgb(65,65,65)"></div><div style="position:absolute;left:492.3px;top:280.0px;width:20.2px;height:20.5px;background:rgb(64,64,64)"></div><div style="position:absolute;left:512.0px;top:280.0px;width:20.2px;height:20.5px;background:rgb(65,65,65)"></div><div style="position:absolute;left:531.7px;top:280.0px;width:20.2px;height:20.5px;background:rgb(61,61,61)"></div><div style="position:absolute;left:551.3px;top:280.0px;width:20.2px;height:20.5px;background:rgb(69,69,69)"></div><div style="position:absolute;left:571.0px;top:280.0px;width:20.2px;height:20.5px;background:rgb(74,74,74)"></div><div style="position:absolute;left:590.7px;top:280.0px;width:20.2px;height:20.5px;background:rgb(76,76,76)"></div><div style="position:absolute;left:610.3px;top:280.0px;width:20.2px;height:20.5px;background:rgb(74,74,74)"></div><div style="position:absolute;left:630.0px;top:280.0px;width:20.2px;height:20.5px;background:rgb(74,74,74)"></div><div style="position:absolute;left:649.7px;top:280.0px;width:20.2px;height:20.5px;background:rgb(74,74,74)"></div><div style="position:absolute;left:669.3px;top:280.0px;width:20.2px;height:20.5px;background:rgb(74,74,74)"></div><div style="position:absolute;left:-19.0px;top:300.0px;width:20.2px;height:20.5px;background:rgb(72,72,72)"></div><div style="position:absolute;left:0.7px;top:300.0px;width:20.2px;height:20.5px;background:rgb(72,72,72)"></div><div style="position:absolute;left:20.3px;top:300.0px;width:20.2px;height:20.5px;background:rgb(72,72,72)"></div><div style="position:absolute;left:40.0px;top:300.0px;width:20.2px;height:20.5px;background:rgb(72,72,72)"></div><div style="position:absolute;left:59.7px;top:300.0px;width:20.2px;height:20.5px;background:rgb(71,71,71)"></div><div style="position:absolute;left:79.3px;top:300.0px;width:20.2px;height:20.5px;background:rgb(69,69,69)"></div><div style="position:absolute;left:99.0px;top:300.0px;width:20.2px;height:20.5px;background:rgb(61,61,61)"></div><div style="position:absolute;left:118.7px;top:300.0px;width:20.2px;height:20.5px;background:rgb(59,59,59)"></div><div style="position:absolute;left:138.3px;top:300.0px;width:20.2px;height:20.5px;background:rgb(58,58,58)"></div><div style="position:absolute;left:158.0px;top:300.0px;width:20.2px;height:20.5px;background:rgb(58,58,58)"></div><div style="position:absolute;left:177.7px;top:300.0px;width:20.2px;height:20.5px;background:rgb(58,58,58)"></div><div style="position:absolute;left:197.3px;top:300.0px;width:20.2px;height:20.5px;background:rgb(58,58,58)"></div><div style="position:absolute;left:217.0px;top:300.0px;width:20.2px;height:20.5px;background:rgb(58,58,58)"></div><div style="position:absolute;left:236.7px;top:300.0px;width:20.2px;height:20.5px;background:rgb(58,58,58)"></div><div style="position:absolute;left:256.3px;top:300.0px;width:20.2px;height:20.5px;background:rgb(59,59,59)"></div><div style="position:absolute;left:276.0px;top:300.0px;width:20.2px;height:20.5px;background:rgb(65,65,65)"></div><div style="position:absolute;left:295.7px;top:300.0px;width:20.2px;height:20.5px;background:rgb(69,69,69)"></div><div style="position:absolute;left:315.3px;top:300.0px;width:20.2px;height:20.5px;background:rgb(76,76,76)"></div><div style="position:absolute;left:335.0px;top:300.0px;width:20.2px;height:20.5px;background:rgb(72,72,72)"></div><div style="position:absolute;left:354.7px;top:300.0px;width:20.2px;height:20.5px;background:rgb(69,69,69)"></div><div style="position:absolute;left:374.3px;top:300.0px;width:20.2px;height:20.5px;background:rgb(71,71,71)"></div><div style="position:absolute;left:394.0px;top:300.0px;width:20.2px;height:20.5px;background:rgb(69,69,69)"></div><div style="position:absolute;left:413.7px;top:300.0px;width:20.2px;height:20.5px;background:rgb(66,66,66)"></div><div style="position:absolute;left:433.3px;top:300.0px;width:20.2px;height:20.5px;background:rgb(65,65,65)"></div><div style="position:absolute;left:453.0px;top:300.0px;width:20.2px;height:20.5px;background:rgb(61,61,61)"></div><div style="position:absolute;left:472.7px;top:300.0px;width:20.2px;height:20.5px;background:rgb(59,59,59)"></div><div style="position:absolute;left:492.3px;top:300.0px;width:20.2px;height:20.5px;background:rgb(59,59,59)"></div><div style="position:absolute;left:512.0px;top:300.0px;width:20.2px;height:20.5px;background:rgb(65,65,65)"></div><div style="position:absolute;left:531.7px;top:300.0px;width:20.2px;height:20.5px;background:rgb(71,71,71)"></div><div style="position:absolute;left:551.3px;top:300.0px;width:20.2px;height:20.5px;background:rgb(74,74,74)"></div><div style="position:absolute;left:571.0px;top:300.0px;width:20.2px;height:20.5px;background:rgb(72,72,72)"></div><div style="position:absolute;left:590.7px;top:300.0px;width:20.2px;height:20.5px;background:rgb(72,72,72)"></div><div style="position:absolute;left:610.3px;top:300.0px;width:20.2px;height:20.5px;background:rgb(72,72,72)"></div><div style="position:absolute;left:630.0px;top:300.0px;width:20.2px;height:20.5px;background:rgb(72,72,72)"></div><div style="position:absolute;left:649.7px;top:300.0px;width:20.2px;height:20.5px;background:rgb(72,72,72)"></div><div style="position:absolute;left:669.3px;top:300.0px;width:20.2px;height:20.5px;background:rgb(72,72,72)"></div><div style="position:absolute;left:-19.0px;top:320.0px;width:20.2px;height:20.5px;background:rgb(69,69,69)"></div><div style="position:absolute;left:0.7px;top:320.0px;width:20.2px;height:20.5px;background:rgb(69,69,69)"></div><div style="position:absolute;left:20.3px;top:320.0px;width:20.2px;height:20.5px;background:rgb(69,69,69)"></div><div style="position:absolute;left:40.0px;top:320.0px;width:20.2px;height:20.5px;background:rgb(69,69,69)"></div><div style="position:absolute;left:59.7px;top:320.0px;width:20.2px;height:20.5px;background:rgb(66,66,66)"></div><div style="position:absolute;left:79.3px;top:320.0px;width:20.2px;height:20.5px;background:rgb(66,66,66)"></div><div style="position:absolute;left:99.0px;top:320.0px;width:20.2px;height:20.5px;background:rgb(64,64,64)"></div><div style="position:absolute;left:118.7px;top:320.0px;width:20.2px;height:20.5px;background:rgb(61,61,61)"></div><div style="position:absolute;left:138.3px;top:320.0px;width:20.2px;height:20.5px;background:rgb(59,59,59)"></div><div style="position:absolute;left:158.0px;top:320.0px;width:20.2px;height:20.5px;background:rgb(58,58,58)"></div><div style="position:absolute;left:177.7px;top:320.0px;width:20.2px;height:20.5px;background:rgb(58,58,58)"></div><div style="position:absolute;left:197.3px;top:320.0px;width:20.2px;height:20.5px;background:rgb(58,58,58)"></div><div style="position:absolute;left:217.0px;top:320.0px;width:20.2px;height:20.5px;background:rgb(58,58,58)"></div><div style="position:absolute;left:236.7px;top:320.0px;width:20.2px;height:20.5px;background:rgb(58,58,58)"></div><div style="position:absolute;left:256.3px;top:320.0px;width:20.2px;height:20.5px;background:rgb(59,59,59)"></div><div style="position:absolute;left:276.0px;top:320.0px;width:20.2px;height:20.5px;background:rgb(61,61,61)"></div><div style="position:absolute;left:295.7px;top:320.0px;width:20.2px;height:20.5px;background:rgb(65,65,65)"></div><div style="position:absolute;left:315.3px;top:320.0px;width:20.2px;height:20.5px;background:rgb(69,69,69)"></div><div style="position:absolute;left:335.0px;top:320.0px;width:20.2px;height:20.5px;background:rgb(69,69,69)"></div><div style="position:absolute;left:354.7px;top:320.0px;width:20.2px;height:20.5px;background:rgb(65,65,65)"></div><div style="position:absolute;left:374.3px;top:320.0px;width:20.2px;height:20.5px;background:rgb(69,69,69)"></div><div style="position:absolute;left:394.0px;top:320.0px;width:20.2px;height:20.5px;background:rgb(69,69,69)"></div><div style="position:absolute;left:413.7px;top:320.0px;width:20.2px;height:20.5px;background:rgb(65,65,65)"></div><div style="position:absolute;left:433.3px;top:320.0px;width:20.2px;height:20.5px;background:rgb(64,64,64)"></div><div style="position:absolute;left:453.0px;top:320.0px;width:20.2px;height:20.5px;background:rgb(59,59,59)"></div><div style="position:absolute;left:472.7px;top:320.0px;width:20.2px;height:20.5px;background:rgb(56,56,56)"></div><div style="position:absolute;left:492.3px;top:320.0px;width:20.2px;height:20.5px;background:rgb(58,58,58)"></div><div style="position:absolute;left:512.0px;top:320.0px;width:20.2px;height:20.5px;background:rgb(69,69,69)"></div><div style="position:absolute;left:531.7px;top:320.0px;width:20.2px;height:20.5px;background:rgb(95,95,95)"></div><div style="position:absolute;left:551.3px;top:320.0px;width:20.2px;height:20.5px;background:rgb(85,85,85)"></div><div style="position:absolute;left:571.0px;top:320.0px;width:20.2px;height:20.5px;background:rgb(74,74,74)"></div><div style="position:absolute;left:590.7px;top:320.0px;width:20.2px;height:20.5px;background:rgb(71,71,71)"></div><div style="position:absolute;left:610.3px;top:320.0px;width:20.2px;height:20.5px;background:rgb(71,71,71)"></div><div style="position:absolute;left:630.0px;top:320.0px;width:20.2px;height:20.5px;background:rgb(71,71,71)"></div><div style="position:absolute;left:649.7px;top:320.0px;width:20.2px;height:20.5px;background:rgb(71,71,71)"></div><div style="position:absolute;left:669.3px;top:320.0px;width:20.2px;height:20.5px;background:rgb(71,71,71)"></div><div style="position:absolute;left:-19.0px;top:340.0px;width:20.2px;height:20.5px;background:rgb(74,74,74)"></div><div style="position:absolute;left:0.7px;top:340.0px;width:20.2px;height:20.5px;background:rgb(74,74,74)"></div><div style="position:absolute;left:20.3px;top:340.0px;width:20.2px;height:20.5px;background:rgb(74,74,74)"></div><div style="position:absolute;left:40.0px;top:340.0px;width:20.2px;height:20.5px;background:rgb(74,74,74)"></div><div style="position:absolute;left:59.7px;top:340.0px;width:20.2px;height:20.5px;background:rgb(71,71,71)"></div><div style="position:absolute;left:79.3px;top:340.0px;width:20.2px;height:20.5px;background:rgb(69,69,69)"></div><div style="position:absolute;left:99.0px;top:340.0px;width:20.2px;height:20.5px;background:rgb(66,66,66)"></div><div style="position:absolute;left:118.7px;top:340.0px;width:20.2px;height:20.5px;background:rgb(65,65,65)"></div><div style="position:absolute;left:138.3px;top:340.0px;width:20.2px;height:20.5px;background:rgb(64,64,64)"></div><div style="position:absolute;left:158.0px;top:340.0px;width:20.2px;height:20.5px;background:rgb(61,61,61)"></div><div style="position:absolute;left:177.7px;top:340.0px;width:20.2px;height:20.5px;background:rgb(61,61,61)"></div><div style="position:absolute;left:197.3px;top:340.0px;width:20.2px;height:20.5px;background:rgb(61,61,61)"></div><div style="position:absolute;left:217.0px;top:340.0px;width:20.2px;height:20.5px;background:rgb(61,61,61)"></div><div style="position:absolute;left:236.7px;top:340.0px;width:20.2px;height:20.5px;background:rgb(61,61,61)"></div><div style="position:absolute;left:256.3px;top:340.0px;width:20.2px;height:20.5px;background:rgb(61,61,61)"></div><div style="position:absolute;left:276.0px;top:340.0px;width:20.2px;height:20.5px;background:rgb(61,61,61)"></div><div style="position:absolute;left:295.7px;top:340.0px;width:20.2px;height:20.5px;background:rgb(64,64,64)"></div><div style="position:absolute;left:315.3px;top:340.0px;width:20.2px;height:20.5px;background:rgb(65,65,65)"></div><div style="position:absolute;left:335.0px;top:340.0px;width:20.2px;height:20.5px;background:rgb(65,65,65)"></div><div style="position:absolute;left:354.7px;top:340.0px;width:20.2px;height:20.5px;background:rgb(64,64,64)"></div><div style="position:absolute;left:374.3px;top:340.0px;width:20.2px;height:20.5px;background:rgb(65,65,65)"></div><div style="position:absolute;left:394.0px;top:340.0px;width:20.2px;height:20.5px;background:rgb(69,69,69)"></div><div style="position:absolute;left:413.7px;top:340.0px;width:20.2px;height:20.5px;background:rgb(66,66,66)"></div><div style="position:absolute;left:433.3px;top:340.0px;width:20.2px;height:20.5px;background:rgb(61,61,61)"></div><div style="position:absolute;left:453.0px;top:340.0px;width:20.2px;height:20.5px;background:rgb(58,58,58)"></div><div style="position:absolute;left:472.7px;top:340.0px;width:20.2px;height:20.5px;background:rgb(56,56,56)"></div><div style="position:absolute;left:492.3px;top:340.0px;width:20.2px;height:20.5px;background:rgb(59,59,59)"></div><div style="position:absolute;left:512.0px;top:340.0px;width:20.2px;height:20.5px;background:rgb(72,72,72)"></div><div style="position:absolute;left:531.7px;top:340.0px;width:20.2px;height:20.5px;background:rgb(80,80,80)"></div><div style="position:absolute;left:551.3px;top:340.0px;width:20.2px;height:20.5px;background:rgb(78,78,78)"></div><div style="position:absolute;left:571.0px;top:340.0px;width:20.2px;height:20.5px;background:rgb(72,72,72)"></div><div style="position:absolute;left:590.7px;top:340.0px;width:20.2px;height:20.5px;background:rgb(71,71,71)"></div><div style="position:absolute;left:610.3px;top:340.0px;width:20.2px;height:20.5px;background:rgb(71,71,71)"></div><div style="position:absolute;left:630.0px;top:340.0px;width:20.2px;height:20.5px;background:rgb(71,71,71)"></div><div style="position:absolute;left:649.7px;top:340.0px;width:20.2px;height:20.5px;background:rgb(71,71,71)"></div><div style="position:absolute;left:669.3px;top:340.0px;width:20.2px;height:20.5px;background:rgb(71,71,71)"></div><div style="position:absolute;left:-19.0px;top:360.0px;width:20.2px;height:20.5px;background:rgb(80,80,80)"></div><div style="position:absolute;left:0.7px;top:360.0px;width:20.2px;height:20.5px;background:rgb(80,80,80)"></div><div style="position:absolute;left:20.3px;top:360.0px;width:20.2px;height:20.5px;background:rgb(80,80,80)"></div><div style="position:absolute;left:40.0px;top:360.0px;width:20.2px;height:20.5px;background:rgb(80,80,80)"></div><div style="position:absolute;left:59.7px;top:360.0px;width:20.2px;height:20.5px;background:rgb(76,76,76)"></div><div style="position:absolute;left:79.3px;top:360.0px;width:20.2px;height:20.5px;background:rgb(76,76,76)"></div><div style="position:absolute;left:99.0px;top:360.0px;width:20.2px;height:20.5px;background:rgb(78,78,78)"></div><div style="position:absolute;left:118.7px;top:360.0px;width:20.2px;height:20.5px;background:rgb(80,80,80)"></div><div style="position:absolute;left:138.3px;top:360.0px;width:20.2px;height:20.5px;background:rgb(85,85,85)"></div><div style="position:absolute;left:158.0px;top:360.0px;width:20.2px;height:20.5px;background:rgb(85,85,85)"></div><div style="position:absolute;left:177.7px;top:360.0px;width:20.2px;height:20.5px;background:rgb(80,80,80)"></div><div style="position:absolute;left:197.3px;top:360.0px;width:20.2px;height:20.5px;background:rgb(76,76,76)"></div><div style="position:absolute;left:217.0px;top:360.0px;width:20.2px;height:20.5px;background:rgb(72,72,72)"></div><div style="position:absolute;left:236.7px;top:360.0px;width:20.2px;height:20.5px;background:rgb(69,69,69)"></div><div style="position:absolute;left:256.3px;top:360.0px;width:20.2px;height:20.5px;background:rgb(65,65,65)"></div><div style="position:absolute;left:276.0px;top:360.0px;width:20.2px;height:20.5px;background:rgb(64,64,64)"></div><div style="position:absolute;left:295.7px;top:360.0px;width:20.2px;height:20.5px;background:rgb(65,65,65)"></div><div style="position:absolute;left:315.3px;top:360.0px;width:20.2px;height:20.5px;background:rgb(66,66,66)"></div><div style="position:absolute;left:335.0px;top:360.0px;width:20.2px;height:20.5px;background:rgb(64,64,64)"></div><div style="position:absolute;left:354.7px;top:360.0px;width:20.2px;height:20.5px;background:rgb(61,61,61)"></div><div style="position:absolute;left:374.3px;top:360.0px;width:20.2px;height:20.5px;background:rgb(64,64,64)"></div><div style="position:absolute;left:394.0px;top:360.0px;width:20.2px;height:20.5px;background:rgb(66,66,66)"></div><div style="position:absolute;left:413.7px;top:360.0px;width:20.2px;height:20.5px;background:rgb(66,66,66)"></div><div style="position:absolute;left:433.3px;top:360.0px;width:20.2px;height:20.5px;background:rgb(61,61,61)"></div><div style="position:absolute;left:453.0px;top:360.0px;width:20.2px;height:20.5px;background:rgb(58,58,58)"></div><div style="position:absolute;left:472.7px;top:360.0px;width:20.2px;height:20.5px;background:rgb(61,61,61)"></div><div style="position:absolute;left:492.3px;top:360.0px;width:20.2px;height:20.5px;background:rgb(66,66,66)"></div><div style="position:absolute;left:512.0px;top:360.0px;width:20.2px;height:20.5px;background:rgb(69,69,69)"></div><div style="position:absolute;left:531.7px;top:360.0px;width:20.2px;height:20.5px;background:rgb(72,72,72)"></div><div style="position:absolute;left:551.3px;top:360.0px;width:20.2px;height:20.5px;background:rgb(71,71,71)"></div><div style="position:absolute;left:571.0px;top:360.0px;width:20.2px;height:20.5px;background:rgb(69,69,69)"></div><div style="position:absolute;left:590.7px;top:360.0px;width:20.2px;height:20.5px;background:rgb(69,69,69)"></div><div style="position:absolute;left:610.3px;top:360.0px;width:20.2px;height:20.5px;background:rgb(71,71,71)"></div><div style="position:absolute;left:630.0px;top:360.0px;width:20.2px;height:20.5px;background:rgb(71,71,71)"></div><div style="position:absolute;left:649.7px;top:360.0px;width:20.2px;height:20.5px;background:rgb(71,71,71)"></div><div style="position:absolute;left:669.3px;top:360.0px;width:20.2px;height:20.5px;background:rgb(71,71,71)"></div><div style="position:absolute;left:-19.0px;top:380.0px;width:20.2px;height:20.5px;background:rgb(76,76,76)"></div><div style="position:absolute;left:0.7px;top:380.0px;width:20.2px;height:20.5px;background:rgb(76,76,76)"></div><div style="position:absolute;left:20.3px;top:380.0px;width:20.2px;height:20.5px;background:rgb(76,76,76)"></div><div style="position:absolute;left:40.0px;top:380.0px;width:20.2px;height:20.5px;background:rgb(76,76,76)"></div><div style="position:absolute;left:59.7px;top:380.0px;width:20.2px;height:20.5px;background:rgb(69,69,69)"></div><div style="position:absolute;left:79.3px;top:380.0px;width:20.2px;height:20.5px;background:rgb(74,74,74)"></div><div style="position:absolute;left:99.0px;top:380.0px;width:20.2px;height:20.5px;background:rgb(80,80,80)"></div><div style="position:absolute;left:118.7px;top:380.0px;width:20.2px;height:20.5px;background:rgb(82,82,82)"></div><div style="position:absolute;left:138.3px;top:380.0px;width:20.2px;height:20.5px;background:rgb(90,90,90)"></div><div style="position:absolute;left:158.0px;top:380.0px;width:20.2px;height:20.5px;background:rgb(90,90,90)"></div><div style="position:absolute;left:177.7px;top:380.0px;width:20.2px;height:20.5px;background:rgb(88,88,88)"></div><div style="position:absolute;left:197.3px;top:380.0px;width:20.2px;height:20.5px;background:rgb(85,85,85)"></div><div style="position:absolute;left:217.0px;top:380.0px;width:20.2px;height:20.5px;background:rgb(85,85,85)"></div><div style="position:absolute;left:236.7px;top:380.0px;width:20.2px;height:20.5px;background:rgb(82,82,82)"></div><div style="position:absolute;left:256.3px;top:380.0px;width:20.2px;height:20.5px;background:rgb(80,80,80)"></div><div style="position:absolute;left:276.0px;top:380.0px;width:20.2px;height:20.5px;background:rgb(76,76,76)"></div><div style="position:absolute;left:295.7px;top:380.0px;width:20.2px;height:20.5px;background:rgb(72,72,72)"></div><div style="position:absolute;left:315.3px;top:380.0px;width:20.2px;height:20.5px;background:rgb(71,71,71)"></div><div style="position:absolute;left:335.0px;top:380.0px;width:20.2px;height:20.5px;background:rgb(64,64,64)"></div><div style="position:absolute;left:354.7px;top:380.0px;width:20.2px;height:20.5px;background:rgb(61,61,61)"></div><div style="position:absolute;left:374.3px;top:380.0px;width:20.2px;height:20.5px;background:rgb(64,64,64)"></div><div style="position:absolute;left:394.0px;top:380.0px;width:20.2px;height:20.5px;background:rgb(65,65,65)"></div><div style="position:absolute;left:413.7px;top:380.0px;width:20.2px;height:20.5px;background:rgb(65,65,65)"></div><div style="position:absolute;left:433.3px;top:380.0px;width:20.2px;height:20.5px;background:rgb(66,66,66)"></div><div style="position:absolute;left:453.0px;top:380.0px;width:20.2px;height:20.5px;background:rgb(74,74,74)"></div><div style="position:absolute;left:472.7px;top:380.0px;width:20.2px;height:20.5px;background:rgb(80,80,80)"></div><div style="position:absolute;left:492.3px;top:380.0px;width:20.2px;height:20.5px;background:rgb(78,78,78)"></div><div style="position:absolute;left:512.0px;top:380.0px;width:20.2px;height:20.5px;background:rgb(66,66,66)"></div><div style="position:absolute;left:531.7px;top:380.0px;width:20.2px;height:20.5px;background:rgb(69,69,69)"></div><div style="position:absolute;left:551.3px;top:380.0px;width:20.2px;height:20.5px;background:rgb(69,69,69)"></div><div style="position:absolute;left:571.0px;top:380.0px;width:20.2px;height:20.5px;background:rgb(66,66,66)"></div><div style="position:absolute;left:590.7px;top:380.0px;width:20.2px;height:20.5px;background:rgb(69,69,69)"></div><div style="position:absolute;left:610.3px;top:380.0px;width:20.2px;height:20.5px;background:rgb(72,72,72)"></div><div style="position:absolute;left:630.0px;top:380.0px;width:20.2px;height:20.5px;background:rgb(72,72,72)"></div><div style="position:absolute;left:649.7px;top:380.0px;width:20.2px;height:20.5px;background:rgb(72,72,72)"></div><div style="position:absolute;left:669.3px;top:380.0px;width:20.2px;height:20.5px;background:rgb(72,72,72)"></div><div style="position:absolute;left:-19.0px;top:400.0px;width:20.2px;height:20.5px;background:rgb(72,72,72)"></div><div style="position:absolute;left:0.7px;top:400.0px;width:20.2px;height:20.5px;background:rgb(72,72,72)"></div><div style="position:absolute;left:20.3px;top:400.0px;width:20.2px;height:20.5px;background:rgb(72,72,72)"></div><div style="position:absolute;left:40.0px;top:400.0px;width:20.2px;height:20.5px;background:rgb(72,72,72)"></div><div style="position:absolute;left:59.7px;top:400.0px;width:20.2px;height:20.5px;background:rgb(66,66,66)"></div><div style="position:absolute;left:79.3px;top:400.0px;width:20.2px;height:20.5px;background:rgb(71,71,71)"></div><div style="position:absolute;left:99.0px;top:400.0px;width:20.2px;height:20.5px;background:rgb(76,76,76)"></div><div style="position:absolute;left:118.7px;top:400.0px;width:20.2px;height:20.5px;background:rgb(78,78,78)"></div><div style="position:absolute;left:138.3px;top:400.0px;width:20.2px;height:20.5px;background:rgb(80,80,80)"></div><div style="position:absolute;left:158.0px;top:400.0px;width:20.2px;height:20.5px;background:rgb(82,82,82)"></div><div style="position:absolute;left:177.7px;top:400.0px;width:20.2px;height:20.5px;background:rgb(85,85,85)"></div><div style="position:absolute;left:197.3px;top:400.0px;width:20.2px;height:20.5px;background:rgb(85,85,85)"></div><div style="position:absolute;left:217.0px;top:400.0px;width:20.2px;height:20.5px;background:rgb(88,88,88)"></div><div style="position:absolute;left:236.7px;top:400.0px;width:20.2px;height:20.5px;background:rgb(90,90,90)"></div><div style="position:absolute;left:256.3px;top:400.0px;width:20.2px;height:20.5px;background:rgb(85,85,85)"></div><div style="position:absolute;left:276.0px;top:400.0px;width:20.2px;height:20.5px;background:rgb(80,80,80)"></div><div style="position:absolute;left:295.7px;top:400.0px;width:20.2px;height:20.5px;background:rgb(76,76,76)"></div><div style="position:absolute;left:315.3px;top:400.0px;width:20.2px;height:20.5px;background:rgb(74,74,74)"></div><div style="position:absolute;left:335.0px;top:400.0px;width:20.2px;height:20.5px;background:rgb(65,65,65)"></div><div style="position:absolute;left:354.7px;top:400.0px;width:20.2px;height:20.5px;background:rgb(64,64,64)"></div><div style="position:absolute;left:374.3px;top:400.0px;width:20.2px;height:20.5px;background:rgb(65,65,65)"></div><div style="position:absolute;left:394.0px;top:400.0px;width:20.2px;height:20.5px;background:rgb(69,69,69)"></div><div style="position:absolute;left:413.7px;top:400.0px;width:20.2px;height:20.5px;background:rgb(76,76,76)"></div><div style="position:absolute;left:433.3px;top:400.0px;width:20.2px;height:20.5px;background:rgb(80,80,80)"></div><div style="position:absolute;left:453.0px;top:400.0px;width:20.2px;height:20.5px;background:rgb(85,85,85)"></div><div style="position:absolute;left:472.7px;top:400.0px;width:20.2px;height:20.5px;background:rgb(82,82,82)"></div><div style="position:absolute;left:492.3px;top:400.0px;width:20.2px;height:20.5px;background:rgb(78,78,78)"></div><div style="position:absolute;left:512.0px;top:400.0px;width:20.2px;height:20.5px;background:rgb(71,71,71)"></div><div style="position:absolute;left:531.7px;top:400.0px;width:20.2px;height:20.5px;background:rgb(69,69,69)"></div><div style="position:absolute;left:551.3px;top:400.0px;width:20.2px;height:20.5px;background:rgb(69,69,69)"></div><div style="position:absolute;left:571.0px;top:400.0px;width:20.2px;height:20.5px;background:rgb(69,69,69)"></div><div style="position:absolute;left:590.7px;top:400.0px;width:20.2px;height:20.5px;background:rgb(71,71,71)"></div><div style="position:absolute;left:610.3px;top:400.0px;width:20.2px;height:20.5px;background:rgb(72,72,72)"></div><div style="position:absolute;left:630.0px;top:400.0px;width:20.2px;height:20.5px;background:rgb(72,72,72)"></div><div style="position:absolute;left:649.7px;top:400.0px;width:20.2px;height:20.5px;background:rgb(72,72,72)"></div><div style="position:absolute;left:669.3px;top:400.0px;width:20.2px;height:20.5px;background:rgb(72,72,72)"></div><div style="position:absolute;left:-19.0px;top:420.0px;width:20.2px;height:20.5px;background:rgb(72,72,72)"></div><div style="position:absolute;left:0.7px;top:420.0px;width:20.2px;height:20.5px;background:rgb(72,72,72)"></div><div style="position:absolute;left:20.3px;top:420.0px;width:20.2px;height:20.5px;background:rgb(72,72,72)"></div><div style="position:absolute;left:40.0px;top:420.0px;width:20.2px;height:20.5px;background:rgb(72,72,72)"></div><div style="position:absolute;left:59.7px;top:420.0px;width:20.2px;height:20.5px;background:rgb(66,66,66)"></div><div style="position:absolute;left:79.3px;top:420.0px;width:20.2px;height:20.5px;background:rgb(71,71,71)"></div><div style="position:absolute;left:99.0px;top:420.0px;width:20.2px;height:20.5px;background:rgb(76,76,76)"></div><div style="position:absolute;left:118.7px;top:420.0px;width:20.2px;height:20.5px;background:rgb(78,78,78)"></div><div style="position:absolute;left:138.3px;top:420.0px;width:20.2px;height:20.5px;background:rgb(80,80,80)"></div><div style="position:absolute;left:158.0px;top:420.0px;width:20.2px;height:20.5px;background:rgb(82,82,82)"></div><div style="position:absolute;left:177.7px;top:420.0px;width:20.2px;height:20.5px;background:rgb(85,85,85)"></div><div style="position:absolute;left:197.3px;top:420.0px;width:20.2px;height:20.5px;background:rgb(85,85,85)"></div><div style="position:absolute;left:217.0px;top:420.0px;width:20.2px;height:20.5px;background:rgb(88,88,88)"></div><div style="position:absolute;left:236.7px;top:420.0px;width:20.2px;height:20.5px;background:rgb(90,90,90)"></div><div style="position:absolute;left:256.3px;top:420.0px;width:20.2px;height:20.5px;background:rgb(85,85,85)"></div><div style="position:absolute;left:276.0px;top:420.0px;width:20.2px;height:20.5px;background:rgb(80,80,80)"></div><div style="position:absolute;left:295.7px;top:420.0px;width:20.2px;height:20.5px;background:rgb(76,76,76)"></div><div style="position:absolute;left:315.3px;top:420.0px;width:20.2px;height:20.5px;background:rgb(74,74,74)"></div><div style="position:absolute;left:335.0px;top:420.0px;width:20.2px;height:20.5px;background:rgb(65,65,65)"></div><div style="position:absolute;left:354.7px;top:420.0px;width:20.2px;height:20.5px;background:rgb(64,64,64)"></div><div style="position:absolute;left:374.3px;top:420.0px;width:20.2px;height:20.5px;background:rgb(65,65,65)"></div><div style="position:absolute;left:394.0px;top:420.0px;width:20.2px;height:20.5px;background:rgb(69,69,69)"></div><div style="position:absolute;left:413.7px;top:420.0px;width:20.2px;height:20.5px;background:rgb(76,76,76)"></div><div style="position:absolute;left:433.3px;top:420.0px;width:20.2px;height:20.5px;background:rgb(80,80,80)"></div><div style="position:absolute;left:453.0px;top:420.0px;width:20.2px;height:20.5px;background:rgb(85,85,85)"></div><div style="position:absolute;left:472.7px;top:420.0px;width:20.2px;height:20.5px;background:rgb(82,82,82)"></div><div style="position:absolute;left:492.3px;top:420.0px;width:20.2px;height:20.5px;background:rgb(78,78,78)"></div><div style="position:absolute;left:512.0px;top:420.0px;width:20.2px;height:20.5px;background:rgb(71,71,71)"></div><div style="position:absolute;left:531.7px;top:420.0px;width:20.2px;height:20.5px;background:rgb(69,69,69)"></div><div style="position:absolute;left:551.3px;top:420.0px;width:20.2px;height:20.5px;background:rgb(69,69,69)"></div><div style="position:absolute;left:571.0px;top:420.0px;width:20.2px;height:20.5px;background:rgb(69,69,69)"></div><div style="position:absolute;left:590.7px;top:420.0px;width:20.2px;height:20.5px;background:rgb(71,71,71)"></div><div style="position:absolute;left:610.3px;top:420.0px;width:20.2px;height:20.5px;background:rgb(72,72,72)"></div><div style="position:absolute;left:630.0px;top:420.0px;width:20.2px;height:20.5px;background:rgb(72,72,72)"></div><div style="position:absolute;left:649.7px;top:420.0px;width:20.2px;height:20.5px;background:rgb(72,72,72)"></div><div style="position:absolute;left:669.3px;top:420.0px;width:20.2px;height:20.5px;background:rgb(72,72,72)"></div><div style="position:absolute;left:-19.0px;top:440.0px;width:20.2px;height:20.5px;background:rgb(72,72,72)"></div><div style="position:absolute;left:0.7px;top:440.0px;width:20.2px;height:20.5px;background:rgb(72,72,72)"></div><div style="position:absolute;left:20.3px;top:440.0px;width:20.2px;height:20.5px;background:rgb(72,72,72)"></div><div style="position:absolute;left:40.0px;top:440.0px;width:20.2px;height:20.5px;background:rgb(72,72,72)"></div><div style="position:absolute;left:59.7px;top:440.0px;width:20.2px;height:20.5px;background:rgb(66,66,66)"></div><div style="position:absolute;left:79.3px;top:440.0px;width:20.2px;height:20.5px;background:rgb(71,71,71)"></div><div style="position:absolute;left:99.0px;top:440.0px;width:20.2px;height:20.5px;background:rgb(76,76,76)"></div><div style="position:absolute;left:118.7px;top:440.0px;width:20.2px;height:20.5px;background:rgb(78,78,78)"></div><div style="position:absolute;left:138.3px;top:440.0px;width:20.2px;height:20.5px;background:rgb(80,80,80)"></div><div style="position:absolute;left:158.0px;top:440.0px;width:20.2px;height:20.5px;background:rgb(82,82,82)"></div><div style="position:absolute;left:177.7px;top:440.0px;width:20.2px;height:20.5px;background:rgb(85,85,85)"></div><div style="position:absolute;left:197.3px;top:440.0px;width:20.2px;height:20.5px;background:rgb(85,85,85)"></div><div style="position:absolute;left:217.0px;top:440.0px;width:20.2px;height:20.5px;background:rgb(88,88,88)"></div><div style="position:absolute;left:236.7px;top:440.0px;width:20.2px;height:20.5px;background:rgb(90,90,90)"></div><div style="position:absolute;left:256.3px;top:440.0px;width:20.2px;height:20.5px;background:rgb(85,85,85)"></div><div style="position:absolute;left:276.0px;top:440.0px;width:20.2px;height:20.5px;background:rgb(80,80,80)"></div><div style="position:absolute;left:295.7px;top:440.0px;width:20.2px;height:20.5px;background:rgb(76,76,76)"></div><div style="position:absolute;left:315.3px;top:440.0px;width:20.2px;height:20.5px;background:rgb(74,74,74)"></div><div style="position:absolute;left:335.0px;top:440.0px;width:20.2px;height:20.5px;background:rgb(65,65,65)"></div><div style="position:absolute;left:354.7px;top:440.0px;width:20.2px;height:20.5px;background:rgb(64,64,64)"></div><div style="position:absolute;left:374.3px;top:440.0px;width:20.2px;height:20.5px;background:rgb(65,65,65)"></div><div style="position:absolute;left:394.0px;top:440.0px;width:20.2px;height:20.5px;background:rgb(69,69,69)"></div><div style="position:absolute;left:413.7px;top:440.0px;width:20.2px;height:20.5px;background:rgb(76,76,76)"></div><div style="position:absolute;left:433.3px;top:440.0px;width:20.2px;height:20.5px;background:rgb(80,80,80)"></div><div style="position:absolute;left:453.0px;top:440.0px;width:20.2px;height:20.5px;background:rgb(85,85,85)"></div><div style="position:absolute;left:472.7px;top:440.0px;width:20.2px;height:20.5px;background:rgb(82,82,82)"></div><div style="position:absolute;left:492.3px;top:440.0px;width:20.2px;height:20.5px;background:rgb(78,78,78)"></div><div style="position:absolute;left:512.0px;top:440.0px;width:20.2px;height:20.5px;background:rgb(71,71,71)"></div><div style="position:absolute;left:531.7px;top:440.0px;width:20.2px;height:20.5px;background:rgb(69,69,69)"></div><div style="position:absolute;left:551.3px;top:440.0px;width:20.2px;height:20.5px;background:rgb(69,69,69)"></div><div style="position:absolute;left:571.0px;top:440.0px;width:20.2px;height:20.5px;background:rgb(69,69,69)"></div><div style="position:absolute;left:590.7px;top:440.0px;width:20.2px;height:20.5px;background:rgb(71,71,71)"></div><div style="position:absolute;left:610.3px;top:440.0px;width:20.2px;height:20.5px;background:rgb(72,72,72)"></div><div style="position:absolute;left:630.0px;top:440.0px;width:20.2px;height:20.5px;background:rgb(72,72,72)"></div><div style="position:absolute;left:649.7px;top:440.0px;width:20.2px;height:20.5px;background:rgb(72,72,72)"></div><div style="position:absolute;left:669.3px;top:440.0px;width:20.2px;height:20.5px;background:rgb(72,72,72)"></div><div style="position:absolute;left:-19.0px;top:460.0px;width:20.2px;height:20.5px;background:rgb(72,72,72)"></div><div style="position:absolute;left:0.7px;top:460.0px;width:20.2px;height:20.5px;background:rgb(72,72,72)"></div><div style="position:absolute;left:20.3px;top:460.0px;width:20.2px;height:20.5px;background:rgb(72,72,72)"></div><div style="position:absolute;left:40.0px;top:460.0px;width:20.2px;height:20.5px;background:rgb(72,72,72)"></div><div style="position:absolute;left:59.7px;top:460.0px;width:20.2px;height:20.5px;background:rgb(66,66,66)"></div><div style="position:absolute;left:79.3px;top:460.0px;width:20.2px;height:20.5px;background:rgb(71,71,71)"></div><div style="position:absolute;left:99.0px;top:460.0px;width:20.2px;height:20.5px;background:rgb(76,76,76)"></div><div style="position:absolute;left:118.7px;top:460.0px;width:20.2px;height:20.5px;background:rgb(78,78,78)"></div><div style="position:absolute;left:138.3px;top:460.0px;width:20.2px;height:20.5px;background:rgb(80,80,80)"></div><div style="position:absolute;left:158.0px;top:460.0px;width:20.2px;height:20.5px;background:rgb(82,82,82)"></div><div style="position:absolute;left:177.7px;top:460.0px;width:20.2px;height:20.5px;background:rgb(85,85,85)"></div><div style="position:absolute;left:197.3px;top:460.0px;width:20.2px;height:20.5px;background:rgb(85,85,85)"></div><div style="position:absolute;left:217.0px;top:460.0px;width:20.2px;height:20.5px;background:rgb(88,88,88)"></div><div style="position:absolute;left:236.7px;top:460.0px;width:20.2px;height:20.5px;background:rgb(90,90,90)"></div><div style="position:absolute;left:256.3px;top:460.0px;width:20.2px;height:20.5px;background:rgb(85,85,85)"></div><div style="position:absolute;left:276.0px;top:460.0px;width:20.2px;height:20.5px;background:rgb(80,80,80)"></div><div style="position:absolute;left:295.7px;top:460.0px;width:20.2px;height:20.5px;background:rgb(76,76,76)"></div><div style="position:absolute;left:315.3px;top:460.0px;width:20.2px;height:20.5px;background:rgb(74,74,74)"></div><div style="position:absolute;left:335.0px;top:460.0px;width:20.2px;height:20.5px;background:rgb(65,65,65)"></div><div style="position:absolute;left:354.7px;top:460.0px;width:20.2px;height:20.5px;background:rgb(64,64,64)"></div><div style="position:absolute;left:374.3px;top:460.0px;width:20.2px;height:20.5px;background:rgb(65,65,65)"></div><div style="position:absolute;left:394.0px;top:460.0px;width:20.2px;height:20.5px;background:rgb(69,69,69)"></div><div style="position:absolute;left:413.7px;top:460.0px;width:20.2px;height:20.5px;background:rgb(76,76,76)"></div><div style="position:absolute;left:433.3px;top:460.0px;width:20.2px;height:20.5px;background:rgb(80,80,80)"></div><div style="position:absolute;left:453.0px;top:460.0px;width:20.2px;height:20.5px;background:rgb(85,85,85)"></div><div style="position:absolute;left:472.7px;top:460.0px;width:20.2px;height:20.5px;background:rgb(82,82,82)"></div><div style="position:absolute;left:492.3px;top:460.0px;width:20.2px;height:20.5px;background:rgb(78,78,78)"></div><div style="position:absolute;left:512.0px;top:460.0px;width:20.2px;height:20.5px;background:rgb(71,71,71)"></div><div style="position:absolute;left:531.7px;top:460.0px;width:20.2px;height:20.5px;background:rgb(69,69,69)"></div><div style="position:absolute;left:551.3px;top:460.0px;width:20.2px;height:20.5px;background:rgb(69,69,69)"></div><div style="position:absolute;left:571.0px;top:460.0px;width:20.2px;height:20.5px;background:rgb(69,69,69)"></div><div style="position:absolute;left:590.7px;top:460.0px;width:20.2px;height:20.5px;background:rgb(71,71,71)"></div><div style="position:absolute;left:610.3px;top:460.0px;width:20.2px;height:20.5px;background:rgb(72,72,72)"></div><div style="position:absolute;left:630.0px;top:460.0px;width:20.2px;height:20.5px;background:rgb(72,72,72)"></div><div style="position:absolute;left:649.7px;top:460.0px;width:20.2px;height:20.5px;background:rgb(72,72,72)"></div><div style="position:absolute;left:669.3px;top:460.0px;width:20.2px;height:20.5px;background:rgb(72,72,72)"></div></div></div>
<svg style="position:absolute;left:21px;top:228.5px" width="590" height="380" viewBox="0 0 590 380">
<defs><filter id="bl" x="-5%" y="-5%" width="110%" height="110%"><feGaussianBlur stdDeviation="15"/></filter><filter id="bl2" x="-50%" y="-50%" width="200%" height="200%"><feGaussianBlur stdDeviation="7"/></filter><filter id="bl3" x="-50%" y="-50%" width="200%" height="200%"><feGaussianBlur stdDeviation="4"/></filter></defs>
<defs><filter id="kb" x="-50%" y="-50%" width="200%" height="200%"><feGaussianBlur stdDeviation="1.1"/></filter><filter id="lb" x="-20%" y="-50%" width="140%" height="200%"><feGaussianBlur stdDeviation="4"/></filter></defs><g opacity="0.45"><g filter="url(#lb)" fill="none" stroke="rgb(30,30,30)" stroke-linecap="round"><path d="M237 156.5 Q259 181.5 299 189.5 T355 193.5 Q394 191.5 422 179.5" stroke-width="7"/></g></g>
<g opacity="0.35"><g filter="url(#lb)" fill="none" stroke="rgb(30,30,30)" stroke-linecap="round"><path d="M371 203.5 L329 246.5 L290 301.5" stroke-width="6"/></g></g>
<g opacity="0.3"><g filter="url(#lb)" fill="none" stroke="rgb(30,30,30)" stroke-linecap="round"><path d="M475 179.5 Q457 241.5 424 301.5 T384 361.5" stroke-width="14"/><path d="M506 173.5 L512 261.5" stroke-width="8"/></g></g><g fill="#fff" filter="url(#kb)"><ellipse cx="106" cy="34.5" rx="4" ry="2.2" fill-opacity="0.7"/><ellipse cx="112" cy="37.5" rx="2.5" ry="2" fill-opacity="0.7"/><ellipse cx="137" cy="52.5" rx="2.5" ry="2.5" fill-opacity="0.85"/><ellipse cx="142" cy="56.5" rx="2" ry="2" fill-opacity="0.7"/><ellipse cx="88" cy="23.5" rx="1.5" ry="1.5" fill-opacity="0.7"/><ellipse cx="211" cy="18.5" rx="2.5" ry="3" fill-opacity="0.5"/><ellipse cx="260" cy="22.5" rx="2" ry="2" fill-opacity="0.55"/><ellipse cx="237" cy="61.5" rx="3" ry="4" fill-opacity="0.45"/><ellipse cx="237" cy="82.5" rx="2.5" ry="2.5" fill-opacity="0.65"/><ellipse cx="259" cy="67.5" rx="3" ry="4" fill-opacity="0.5"/><ellipse cx="211" cy="155.5" rx="4" ry="2.5" fill-opacity="0.6"/><ellipse cx="219" cy="158.5" rx="2.5" ry="2" fill-opacity="0.5"/><ellipse cx="254" cy="163.5" rx="3" ry="2.5" fill-opacity="0.65"/><ellipse cx="274" cy="160.5" rx="3.5" ry="2.5" fill-opacity="0.5"/><ellipse cx="499" cy="287.5" rx="2.5" ry="2.5" fill-opacity="0.8"/><ellipse cx="507" cy="295.5" rx="2" ry="2" fill-opacity="0.6"/><ellipse cx="513" cy="289.5" rx="1.5" ry="1.5" fill-opacity="0.6"/><ellipse cx="503" cy="301.5" rx="1.5" ry="1.5" fill-opacity="0.5"/><ellipse cx="114" cy="339.5" rx="4" ry="2" fill-opacity="0.75"/><ellipse cx="122" cy="336.5" rx="2" ry="1.5" fill-opacity="0.7"/><ellipse cx="139" cy="337.5" rx="2" ry="1.5" fill-opacity="0.6"/><ellipse cx="231" cy="359.5" rx="2" ry="2" fill-opacity="0.7"/><ellipse cx="150" cy="33.5" rx="2" ry="2" fill-opacity="0.5"/><ellipse cx="442" cy="271.5" rx="1.5" ry="1.5" fill-opacity="0.7"/><ellipse cx="229" cy="101.5" rx="2.5" ry="2.5" fill-opacity="0.6"/><ellipse cx="222" cy="41.5" rx="2.5" ry="2.5" fill-opacity="0.45"/></g>
<g fill="#fff"><circle cx="189.8" cy="57.2" r="0.5" fill-opacity="0.90"/><circle cx="125.8" cy="32.6" r="0.6" fill-opacity="0.50"/><circle cx="248.8" cy="313.8" r="0.6" fill-opacity="0.80"/><circle cx="129.6" cy="211.3" r="0.8" fill-opacity="0.53"/><circle cx="105.9" cy="220.7" r="0.7" fill-opacity="0.50"/><circle cx="417.3" cy="214.2" r="0.8" fill-opacity="0.82"/><circle cx="250.6" cy="119.2" r="0.8" fill-opacity="0.65"/><circle cx="48.0" cy="113.9" r="0.7" fill-opacity="0.85"/><circle cx="168.7" cy="372.0" r="0.8" fill-opacity="0.54"/><circle cx="200.4" cy="354.2" r="1.0" fill-opacity="0.49"/><circle cx="199.3" cy="132.9" r="1.2" fill-opacity="0.70"/><circle cx="492.2" cy="358.5" r="1.0" fill-opacity="0.49"/><circle cx="338.7" cy="258.5" r="1.0" fill-opacity="0.66"/><circle cx="270.6" cy="63.8" r="0.5" fill-opacity="0.57"/><circle cx="168.4" cy="280.2" r="1.2" fill-opacity="0.72"/><circle cx="97.5" cy="152.4" r="0.6" fill-opacity="0.90"/><circle cx="103.3" cy="88.0" r="0.8" fill-opacity="0.91"/><circle cx="106.9" cy="107.0" r="0.9" fill-opacity="0.65"/><circle cx="302.1" cy="234.4" r="0.5" fill-opacity="0.70"/><circle cx="510.4" cy="361.2" r="0.9" fill-opacity="0.67"/><circle cx="233.8" cy="39.3" r="0.5" fill-opacity="0.55"/><circle cx="64.4" cy="228.0" r="0.9" fill-opacity="0.53"/><circle cx="59.5" cy="138.0" r="1.2" fill-opacity="0.56"/><circle cx="352.9" cy="179.9" r="0.8" fill-opacity="1.00"/><circle cx="273.1" cy="183.6" r="0.5" fill-opacity="0.86"/><circle cx="433.8" cy="181.6" r="0.9" fill-opacity="0.46"/><circle cx="557.3" cy="200.5" r="0.9" fill-opacity="0.95"/><circle cx="208.4" cy="84.5" r="0.9" fill-opacity="0.63"/><circle cx="17.0" cy="10.6" r="0.7" fill-opacity="0.56"/><circle cx="473.8" cy="274.4" r="0.7" fill-opacity="0.49"/><circle cx="59.9" cy="178.4" r="0.8" fill-opacity="0.79"/><circle cx="527.6" cy="318.9" r="1.0" fill-opacity="0.64"/><circle cx="376.9" cy="316.7" r="0.8" fill-opacity="0.88"/><circle cx="439.6" cy="181.4" r="1.2" fill-opacity="0.80"/><circle cx="271.4" cy="282.1" r="0.6" fill-opacity="0.54"/><circle cx="484.3" cy="372.0" r="0.7" fill-opacity="0.54"/><circle cx="468.4" cy="275.7" r="1.0" fill-opacity="0.96"/><circle cx="123.7" cy="95.6" r="0.6" fill-opacity="0.87"/><circle cx="388.2" cy="309.3" r="1.2" fill-opacity="0.95"/><circle cx="294.0" cy="201.8" r="0.5" fill-opacity="0.93"/><circle cx="112.1" cy="16.0" r="0.8" fill-opacity="0.76"/><circle cx="445.4" cy="346.3" r="0.9" fill-opacity="0.99"/><circle cx="540.8" cy="338.8" r="0.8" fill-opacity="0.53"/><circle cx="71.3" cy="167.8" r="0.6" fill-opacity="0.69"/><circle cx="124.6" cy="114.9" r="1.2" fill-opacity="0.53"/><circle cx="419.6" cy="250.6" r="0.6" fill-opacity="0.98"/><circle cx="128.7" cy="361.5" r="0.8" fill-opacity="0.54"/><circle cx="413.9" cy="377.3" r="0.8" fill-opacity="0.56"/><circle cx="186.7" cy="274.1" r="0.9" fill-opacity="0.70"/><circle cx="159.3" cy="343.8" r="1.2" fill-opacity="0.52"/><circle cx="334.4" cy="265.8" r="0.5" fill-opacity="0.89"/><circle cx="107.4" cy="339.8" r="0.5" fill-opacity="0.80"/><circle cx="505.6" cy="172.2" r="0.9" fill-opacity="0.68"/><circle cx="536.4" cy="235.9" r="1.0" fill-opacity="0.58"/><circle cx="64.1" cy="61.3" r="0.6" fill-opacity="0.96"/><circle cx="368.4" cy="201.5" r="0.8" fill-opacity="0.73"/><circle cx="104.2" cy="131.7" r="0.7" fill-opacity="0.47"/><circle cx="262.0" cy="249.8" r="1.0" fill-opacity="0.72"/><circle cx="203.7" cy="20.6" r="0.5" fill-opacity="0.79"/><circle cx="32.5" cy="252.5" r="0.9" fill-opacity="0.82"/><circle cx="165.2" cy="91.9" r="0.8" fill-opacity="0.55"/><circle cx="157.7" cy="1.4" r="0.7" fill-opacity="0.98"/><circle cx="209.0" cy="0.4" r="0.8" fill-opacity="0.60"/><circle cx="175.6" cy="239.0" r="0.9" fill-opacity="0.92"/><circle cx="483.4" cy="271.3" r="0.8" fill-opacity="0.85"/><circle cx="471.5" cy="313.6" r="1.0" fill-opacity="0.83"/><circle cx="18.3" cy="50.5" r="0.5" fill-opacity="0.66"/><circle cx="264.5" cy="19.3" r="0.9" fill-opacity="0.82"/><circle cx="286.7" cy="1.3" r="1.0" fill-opacity="0.96"/><circle cx="308.2" cy="283.0" r="1.2" fill-opacity="0.49"/><circle cx="155.6" cy="276.8" r="1.0" fill-opacity="0.81"/><circle cx="269.8" cy="320.9" r="1.0" fill-opacity="0.61"/><circle cx="27.4" cy="240.1" r="0.9" fill-opacity="0.53"/><circle cx="148.8" cy="282.1" r="0.9" fill-opacity="0.52"/><circle cx="58.3" cy="82.6" r="1.0" fill-opacity="0.73"/><circle cx="272.3" cy="177.0" r="0.9" fill-opacity="0.56"/><circle cx="573.2" cy="355.3" r="0.8" fill-opacity="0.49"/><circle cx="153.4" cy="136.5" r="1.0" fill-opacity="0.73"/><circle cx="519.7" cy="266.9" r="0.8" fill-opacity="0.67"/><circle cx="93.2" cy="360.5" r="0.8" fill-opacity="0.62"/><circle cx="82.5" cy="130.5" r="1.2" fill-opacity="0.63"/><circle cx="190.2" cy="128.4" r="0.6" fill-opacity="0.84"/><circle cx="250.8" cy="104.4" r="0.5" fill-opacity="0.48"/><circle cx="387.9" cy="241.0" r="0.7" fill-opacity="0.69"/><circle cx="250.7" cy="11.0" r="0.8" fill-opacity="0.95"/><circle cx="551.2" cy="208.4" r="0.5" fill-opacity="0.96"/><circle cx="240.8" cy="233.4" r="1.2" fill-opacity="0.61"/><circle cx="28.7" cy="351.7" r="0.8" fill-opacity="0.68"/><circle cx="70.2" cy="244.1" r="0.9" fill-opacity="0.95"/><circle cx="531.1" cy="378.2" r="0.6" fill-opacity="0.75"/><circle cx="143.0" cy="66.3" r="0.7" fill-opacity="0.58"/><circle cx="242.5" cy="198.9" r="0.7" fill-opacity="0.86"/><circle cx="291.9" cy="217.9" r="1.0" fill-opacity="0.73"/><circle cx="369.0" cy="327.5" r="0.7" fill-opacity="0.94"/><circle cx="225.4" cy="245.1" r="0.7" fill-opacity="0.92"/><circle cx="277.3" cy="222.8" r="0.8" fill-opacity="0.96"/><circle cx="543.9" cy="200.3" r="0.8" fill-opacity="0.59"/><circle cx="63.9" cy="58.6" r="1.0" fill-opacity="0.51"/><circle cx="73.6" cy="216.1" r="1.0" fill-opacity="0.62"/><circle cx="41.2" cy="199.0" r="0.8" fill-opacity="0.59"/><circle cx="315.0" cy="378.1" r="0.7" fill-opacity="0.80"/><circle cx="517.9" cy="180.4" r="0.6" fill-opacity="0.47"/><circle cx="241.3" cy="246.5" r="0.6" fill-opacity="0.72"/><circle cx="132.9" cy="12.9" r="0.8" fill-opacity="0.65"/><circle cx="232.3" cy="2.6" r="1.2" fill-opacity="0.73"/><circle cx="120.3" cy="368.1" r="1.2" fill-opacity="0.56"/><circle cx="272.6" cy="100.6" r="0.5" fill-opacity="0.97"/><circle cx="290.5" cy="71.1" r="0.8" fill-opacity="0.95"/><circle cx="31.9" cy="9.0" r="0.8" fill-opacity="0.48"/><circle cx="108.7" cy="355.2" r="0.5" fill-opacity="0.62"/><circle cx="259.3" cy="41.3" r="0.5" fill-opacity="0.64"/><circle cx="253.4" cy="18.7" r="0.7" fill-opacity="0.75"/><circle cx="261.6" cy="122.7" r="0.8" fill-opacity="0.47"/><circle cx="23.8" cy="13.2" r="0.5" fill-opacity="0.59"/><circle cx="437.9" cy="341.0" r="0.7" fill-opacity="0.63"/><circle cx="174.3" cy="273.8" r="1.2" fill-opacity="0.80"/><circle cx="147.1" cy="163.2" r="0.8" fill-opacity="0.55"/><circle cx="452.9" cy="230.5" r="0.7" fill-opacity="0.70"/><circle cx="459.3" cy="226.1" r="0.8" fill-opacity="0.86"/><circle cx="144.9" cy="24.6" r="0.9" fill-opacity="0.75"/><circle cx="94.2" cy="161.9" r="0.5" fill-opacity="0.60"/><circle cx="49.3" cy="36.6" r="1.0" fill-opacity="0.98"/><circle cx="101.5" cy="50.4" r="1.0" fill-opacity="0.58"/><circle cx="163.7" cy="101.6" r="0.7" fill-opacity="0.56"/><circle cx="145.0" cy="93.1" r="0.9" fill-opacity="0.55"/><circle cx="38.0" cy="95.5" r="0.9" fill-opacity="0.58"/><circle cx="492.6" cy="347.0" r="0.7" fill-opacity="0.58"/><circle cx="113.8" cy="28.5" r="0.6" fill-opacity="0.70"/><circle cx="62.0" cy="226.2" r="0.6" fill-opacity="0.47"/><circle cx="477.4" cy="310.7" r="0.7" fill-opacity="0.55"/><circle cx="59.4" cy="150.0" r="1.0" fill-opacity="0.74"/><circle cx="158.9" cy="375.0" r="0.8" fill-opacity="0.97"/><circle cx="183.0" cy="215.0" r="0.8" fill-opacity="0.46"/><circle cx="254.4" cy="59.4" r="0.5" fill-opacity="0.67"/><circle cx="517.3" cy="174.9" r="0.5" fill-opacity="0.48"/><circle cx="83.5" cy="306.1" r="0.9" fill-opacity="0.79"/><circle cx="217.3" cy="191.4" r="0.7" fill-opacity="0.54"/><circle cx="100.7" cy="25.5" r="1.2" fill-opacity="0.89"/><circle cx="282.9" cy="20.3" r="0.8" fill-opacity="0.50"/><circle cx="375.2" cy="325.1" r="0.9" fill-opacity="0.92"/><circle cx="127.8" cy="151.7" r="0.8" fill-opacity="0.65"/><circle cx="393.9" cy="253.5" r="0.8" fill-opacity="0.78"/><circle cx="322.3" cy="238.0" r="0.8" fill-opacity="0.62"/><circle cx="146.1" cy="147.7" r="0.9" fill-opacity="0.69"/><circle cx="13.7" cy="234.9" r="0.6" fill-opacity="0.70"/><circle cx="39.3" cy="136.1" r="1.2" fill-opacity="0.69"/><circle cx="429.8" cy="295.1" r="0.5" fill-opacity="0.86"/><circle cx="77.1" cy="336.1" r="1.2" fill-opacity="0.95"/><circle cx="93.0" cy="340.2" r="1.2" fill-opacity="0.70"/><circle cx="148.9" cy="366.0" r="0.9" fill-opacity="0.59"/><circle cx="21.6" cy="69.1" r="0.7" fill-opacity="0.82"/><circle cx="311.0" cy="241.5" r="1.2" fill-opacity="0.70"/><circle cx="220.2" cy="140.0" r="0.7" fill-opacity="0.87"/><circle cx="259.2" cy="67.1" r="0.5" fill-opacity="0.61"/><circle cx="129.9" cy="110.4" r="0.8" fill-opacity="0.73"/><circle cx="133.2" cy="247.9" r="0.5" fill-opacity="0.76"/><circle cx="178.0" cy="198.5" r="0.8" fill-opacity="0.77"/><circle cx="365.6" cy="180.2" r="1.2" fill-opacity="0.58"/><circle cx="510.6" cy="296.8" r="0.7" fill-opacity="0.98"/><circle cx="348.5" cy="219.5" r="0.9" fill-opacity="0.85"/><circle cx="145.6" cy="342.9" r="0.9" fill-opacity="0.46"/><circle cx="115.6" cy="156.8" r="1.0" fill-opacity="0.73"/><circle cx="376.0" cy="308.7" r="0.7" fill-opacity="0.49"/><circle cx="280.1" cy="204.3" r="0.8" fill-opacity="0.86"/><circle cx="272.6" cy="281.5" r="0.6" fill-opacity="1.00"/><circle cx="153.2" cy="244.4" r="1.0" fill-opacity="0.96"/><circle cx="30.8" cy="241.3" r="1.0" fill-opacity="0.88"/><circle cx="376.2" cy="366.3" r="0.9" fill-opacity="0.46"/><circle cx="553.6" cy="283.2" r="0.8" fill-opacity="0.63"/><circle cx="140.2" cy="344.4" r="1.0" fill-opacity="0.99"/><circle cx="493.1" cy="203.5" r="0.9" fill-opacity="0.83"/><circle cx="424.6" cy="216.4" r="0.6" fill-opacity="0.67"/><circle cx="343.0" cy="214.5" r="0.5" fill-opacity="0.46"/><circle cx="62.5" cy="352.5" r="0.6" fill-opacity="0.84"/><circle cx="25.0" cy="25.7" r="1.2" fill-opacity="0.77"/><circle cx="62.8" cy="78.1" r="0.5" fill-opacity="0.97"/><circle cx="533.9" cy="286.1" r="1.2" fill-opacity="0.80"/><circle cx="168.4" cy="37.9" r="1.2" fill-opacity="0.81"/><circle cx="172.6" cy="127.7" r="0.7" fill-opacity="0.59"/><circle cx="165.6" cy="271.6" r="0.7" fill-opacity="0.87"/><circle cx="352.8" cy="180.7" r="1.0" fill-opacity="0.47"/><circle cx="203.2" cy="267.4" r="0.6" fill-opacity="0.84"/><circle cx="485.1" cy="218.0" r="0.8" fill-opacity="0.45"/><circle cx="2.6" cy="186.3" r="1.2" fill-opacity="0.90"/><circle cx="301.9" cy="219.4" r="1.2" fill-opacity="0.57"/><circle cx="409.9" cy="189.1" r="1.0" fill-opacity="0.87"/><circle cx="287.3" cy="376.1" r="0.5" fill-opacity="0.80"/><circle cx="208.4" cy="152.3" r="1.0" fill-opacity="0.50"/><circle cx="293.7" cy="143.9" r="0.6" fill-opacity="0.97"/><circle cx="263.9" cy="210.1" r="0.8" fill-opacity="0.69"/><circle cx="453.2" cy="219.8" r="0.8" fill-opacity="0.80"/><circle cx="408.2" cy="192.7" r="1.2" fill-opacity="0.84"/><circle cx="91.4" cy="94.0" r="0.9" fill-opacity="0.64"/><circle cx="138.4" cy="362.7" r="1.0" fill-opacity="1.00"/><circle cx="96.5" cy="249.7" r="0.6" fill-opacity="0.99"/><circle cx="465.8" cy="278.3" r="0.6" fill-opacity="0.51"/><circle cx="518.8" cy="176.1" r="1.2" fill-opacity="0.89"/><circle cx="406.4" cy="189.9" r="0.8" fill-opacity="0.46"/><circle cx="150.7" cy="280.2" r="0.6" fill-opacity="0.95"/><circle cx="252.0" cy="217.8" r="0.8" fill-opacity="0.92"/><circle cx="376.0" cy="221.5" r="0.6" fill-opacity="0.80"/><circle cx="266.0" cy="118.8" r="0.5" fill-opacity="0.94"/><circle cx="91.7" cy="322.4" r="0.5" fill-opacity="0.79"/><circle cx="22.4" cy="206.2" r="1.2" fill-opacity="0.97"/><circle cx="267.7" cy="77.8" r="0.5" fill-opacity="0.80"/><circle cx="485.8" cy="198.0" r="0.8" fill-opacity="0.57"/><circle cx="33.2" cy="104.1" r="0.5" fill-opacity="0.49"/><circle cx="536.4" cy="238.5" r="0.9" fill-opacity="0.60"/><circle cx="474.4" cy="240.7" r="0.9" fill-opacity="0.85"/><circle cx="380.7" cy="296.0" r="1.2" fill-opacity="0.92"/></g>
<path d="M289 0 H590 V380 H586 V171.2 H425 V37.9 H289 Z" fill="#000"/>
<g fill="none" stroke="#1fd01f" stroke-width="1.2"><circle cx="121.0" cy="40.6" r="4.8"/><circle cx="142.6" cy="61.0" r="4.8"/><circle cx="208.3" cy="19.6" r="4.8"/><circle cx="236.8" cy="83.8" r="4.8"/><circle cx="280.0" cy="81.5" r="4.8"/><circle cx="290.2" cy="110.5" r="4.8"/><circle cx="215.2" cy="160.1" r="4.8"/><circle cx="256.0" cy="164.6" r="4.8"/><circle cx="287.2" cy="166.1" r="4.8"/><circle cx="327.1" cy="18.1" r="4.8"/><circle cx="341.2" cy="18.1" r="4.8"/><circle cx="367.3" cy="12.1" r="4.8"/><circle cx="401.5" cy="4.9" r="4.8"/><circle cx="424.4" cy="17.5" r="4.8"/><circle cx="446.9" cy="32.5" r="4.8"/><circle cx="494.0" cy="68.8" r="4.8"/><circle cx="325.3" cy="34.0" r="4.8"/><circle cx="339.1" cy="40.3" r="4.8"/><circle cx="351.4" cy="36.4" r="4.8"/><circle cx="326.2" cy="54.4" r="4.8"/><circle cx="339.4" cy="52.9" r="4.8"/><circle cx="345.1" cy="63.1" r="4.8"/><circle cx="354.1" cy="61.6" r="4.8"/><circle cx="362.8" cy="72.7" r="4.8"/><circle cx="347.5" cy="76.9" r="4.8"/><circle cx="337.3" cy="83.5" r="4.8"/><circle cx="362.8" cy="85.6" r="4.8"/><circle cx="376.9" cy="91.6" r="4.8"/><circle cx="428.6" cy="74.2" r="4.8"/><circle cx="439.4" cy="91.6" r="4.8"/><circle cx="298.6" cy="80.5" r="4.8"/><circle cx="359.8" cy="104.5" r="4.8"/><circle cx="368.8" cy="120.1" r="4.8"/><circle cx="381.4" cy="125.5" r="4.8"/><circle cx="356.5" cy="130.4" r="4.8"/><circle cx="365.8" cy="131.9" r="4.8"/><circle cx="388.0" cy="142.4" r="4.8"/><circle cx="372.1" cy="143.9" r="4.8"/><circle cx="358.0" cy="145.7" r="4.8"/><circle cx="362.5" cy="146.6" r="4.8"/><circle cx="373.0" cy="148.1" r="4.8"/><circle cx="364.9" cy="154.4" r="4.8"/><circle cx="329.5" cy="148.4" r="4.8"/><circle cx="346.0" cy="153.5" r="4.8"/><circle cx="359.5" cy="161.3" r="4.8"/><circle cx="305.8" cy="158.3" r="4.8"/><circle cx="372.4" cy="177.2" r="4.8"/><circle cx="390.4" cy="172.7" r="4.8"/><circle cx="265.0" cy="196.1" r="4.8"/><circle cx="275.2" cy="193.7" r="4.8"/><circle cx="193.3" cy="351.6" r="4.8"/><circle cx="231.1" cy="364.2" r="4.8"/><circle cx="205.9" cy="373.2" r="4.8"/><circle cx="322.9" cy="215.3" r="4.8"/><circle cx="442.4" cy="275.6" r="4.8"/><circle cx="508.4" cy="294.2" r="4.8"/><circle cx="491.6" cy="336.6" r="4.8"/><circle cx="396.4" cy="375.0" r="4.8"/><circle cx="400.6" cy="378.5" r="4.8"/></g>
</svg>
<div style="position:absolute;left:21px;top:608px;width:591px;height:50px;background:#fff;"></div>
<div style="position:absolute;left:21px;top:612.3px;width:591px;height:14.4px;background:linear-gradient(to right,#000,#fafafa);border-top:1px solid #222;border-bottom:1px solid #444;border-right:1px solid #555;"></div>
<div style="position:absolute;left:80.0px;top:626.5px;width:1px;height:3.5px;background:#444;"></div>
<div style="position:absolute;left:-119.5px;top:636.3px;width:400px;text-align:center;font-size:11px;line-height:11px;color:#3a3a3a;white-space:pre;-webkit-text-stroke:0.2px currentColor;">5.7</div>
<div style="position:absolute;left:138.8px;top:626.5px;width:1px;height:3.5px;background:#444;"></div>
<div style="position:absolute;left:-60.69999999999999px;top:636.3px;width:400px;text-align:center;font-size:11px;line-height:11px;color:#3a3a3a;white-space:pre;-webkit-text-stroke:0.2px currentColor;">12</div>
<div style="position:absolute;left:197.5px;top:626.5px;width:1px;height:3.5px;background:#444;"></div>
<div style="position:absolute;left:-2px;top:636.3px;width:400px;text-align:center;font-size:11px;line-height:11px;color:#3a3a3a;white-space:pre;-webkit-text-stroke:0.2px currentColor;">19</div>
<div style="position:absolute;left:256.7px;top:626.5px;width:1px;height:3.5px;background:#444;"></div>
<div style="position:absolute;left:57.19999999999999px;top:636.3px;width:400px;text-align:center;font-size:11px;line-height:11px;color:#3a3a3a;white-space:pre;-webkit-text-stroke:0.2px currentColor;">26</div>
<div style="position:absolute;left:316.1px;top:626.5px;width:1px;height:3.5px;background:#444;"></div>
<div style="position:absolute;left:116.60000000000002px;top:636.3px;width:400px;text-align:center;font-size:11px;line-height:11px;color:#3a3a3a;white-space:pre;-webkit-text-stroke:0.2px currentColor;">33</div>
<div style="position:absolute;left:375.0px;top:626.5px;width:1px;height:3.5px;background:#444;"></div>
<div style="position:absolute;left:175.5px;top:636.3px;width:400px;text-align:center;font-size:11px;line-height:11px;color:#3a3a3a;white-space:pre;-webkit-text-stroke:0.2px currentColor;">39</div>
<div style="position:absolute;left:433.9px;top:626.5px;width:1px;height:3.5px;background:#444;"></div>
<div style="position:absolute;left:234.39999999999998px;top:636.3px;width:400px;text-align:center;font-size:11px;line-height:11px;color:#3a3a3a;white-space:pre;-webkit-text-stroke:0.2px currentColor;">46</div>
<div style="position:absolute;left:492.9px;top:626.5px;width:1px;height:3.5px;background:#444;"></div>
<div style="position:absolute;left:293.4px;top:636.3px;width:400px;text-align:center;font-size:11px;line-height:11px;color:#3a3a3a;white-space:pre;-webkit-text-stroke:0.2px currentColor;">53</div>
<div style="position:absolute;left:552.1px;top:626.5px;width:1px;height:3.5px;background:#444;"></div>
<div style="position:absolute;left:352.6px;top:636.3px;width:400px;text-align:center;font-size:11px;line-height:11px;color:#3a3a3a;white-space:pre;-webkit-text-stroke:0.2px currentColor;">59</div>
<div style="position:absolute;left:600.3px;top:645px;width:11.7px;height:13px;border-left:1px solid #e4e4e4;border-top:1px solid #e4e4e4;"></div>
<svg style="position:absolute;left:601px;top:646px" width="11" height="12"><path d="M10.5 4 L3 11.5 M10.5 7 L6 11.5 M10.5 10 L9 11.5" stroke="#999" stroke-width="0.8"/></svg>
<div style="position:absolute;left:611px;top:226.6px;width:1px;height:381.4px;background:#111;"></div>
<div style="position:absolute;left:611px;top:33px;width:1px;height:193.6px;background:#b4b4b4;"></div>
</div>
<div style="-webkit-text-stroke:0.1px currentColor">
<div style="position:absolute;left:679.5px;top:14px;width:269.0px;height:348.6px;border-radius:4px 4px 0 0;box-shadow:0 3px 8px 0px rgba(0,0,0,0.5);background:#d9d9d9;"></div>
<div style="position:absolute;left:679.5px;top:14px;width:269.0px;height:8.5px;border-radius:4px 4px 0 0;background:linear-gradient(#ececec,#dedede);border-bottom:1px solid #c4c4c4;"></div>
<div style="position:absolute;left:682.6999999999999px;top:16px;width:5.4px;height:5.4px;border-radius:50%;background:#fe5f57;"></div>
<div style="position:absolute;left:691.5px;top:16px;width:5.4px;height:5.4px;border-radius:50%;background:#febc2e;"></div>
<div style="position:absolute;left:700.3px;top:16px;width:5.4px;height:5.4px;border-radius:50%;background:#28c840;"></div>
<svg style="position:absolute;left:779.5px;top:15.3px" width="6.5" height="6.5" viewBox="0 0 12 12"><rect x="0.5" y="0.5" width="11" height="11" fill="#f4f4f4" stroke="#888"/><path d="M2.5 1.5 L9.5 10.5 M9.5 1.5 L2.5 10.5" stroke="#222" stroke-width="1.5"/></svg>
<div style="position:absolute;left:788.5px;top:15.3px;font-size:6px;line-height:6px;color:#222;white-space:pre;font-weight:bold;">2MASS Point Sources</div>
<div style="position:absolute;left:679.5px;top:22.5px;width:269.0px;height:14px;background:#d9d9d9;border-bottom:1px solid #a0a0a0;"></div>
<div style="position:absolute;left:683.3px;top:27px;font-size:6px;line-height:6px;color:#333;white-space:pre;">File</div>
<div style="position:absolute;left:697.4px;top:27px;font-size:6px;line-height:6px;color:#333;white-space:pre;">Edit</div>
<div style="position:absolute;left:713.4px;top:27px;font-size:6px;line-height:6px;color:#333;white-space:pre;">Catalog Server</div>
<div style="position:absolute;left:757.9px;top:27px;font-size:6px;line-height:6px;color:#333;white-space:pre;">Name Server</div>
<div style="position:absolute;left:797.7px;top:27px;font-size:6px;line-height:6px;color:#333;white-space:pre;">Symbol</div>
<div style="position:absolute;left:822.8px;top:27px;font-size:6px;line-height:6px;color:#333;white-space:pre;">Preferences</div>
<div style="position:absolute;left:681px;top:41px;width:266px;height:1px;background:#a8a8a8;"></div>
<div style="position:absolute;left:681px;top:42px;width:266px;height:1px;background:#f2f2f2;"></div>
<div style="position:absolute;left:682px;top:37.5px;width:25.099999999999998px;height:7px;background:#d9d9d9;"></div>
<div style="position:absolute;left:683px;top:38px;font-size:6px;line-height:6px;color:#333;white-space:pre;">Catalog</div>
<div style="position:absolute;left:683px;top:49px;font-size:6px;line-height:6px;color:#333;white-space:pre;">Name</div>
<div style="position:absolute;left:683px;top:60.3px;font-size:6px;line-height:6px;color:#333;white-space:pre;">Identification</div>
<div style="position:absolute;left:683px;top:71.5px;font-size:6px;line-height:6px;color:#333;white-space:pre;">Reference</div>
<div style="position:absolute;left:721.3px;top:46.7px;width:214.5px;height:10.399999999999999px;background:#d9d9d9;border-top:1px solid #8c8c8c;border-left:1px solid #8c8c8c;border-bottom:1px solid #f0f0f0;border-right:1px solid #f0f0f0;"></div>
<div style="position:absolute;left:723.3px;top:48.900000000000006px;font-size:6px;line-height:6px;color:#222;white-space:pre;">2MASS Point Sources</div>
<div style="position:absolute;left:721.3px;top:58.1px;width:214.5px;height:10.399999999999999px;background:#d9d9d9;border-top:1px solid #8c8c8c;border-left:1px solid #8c8c8c;border-bottom:1px solid #f0f0f0;border-right:1px solid #f0f0f0;"></div>
<div style="position:absolute;left:723.3px;top:60.3px;font-size:6px;line-height:6px;color:#222;white-space:pre;">II/246/out</div>
<div style="position:absolute;left:721.3px;top:69.3px;width:48.0px;height:9.900000000000006px;background:#d9d9d9;border-top:1px solid #8c8c8c;border-left:1px solid #8c8c8c;border-bottom:1px solid #f0f0f0;border-right:1px solid #f0f0f0;"></div>
<div style="position:absolute;left:723.3px;top:71.25px;font-size:6px;line-height:6px;color:#222;white-space:pre;">2mass</div>
<div style="position:absolute;left:681px;top:86px;width:266px;height:1px;background:#a8a8a8;"></div>
<div style="position:absolute;left:681px;top:87px;width:266px;height:1px;background:#f2f2f2;"></div>
<div style="position:absolute;left:682px;top:82.5px;width:21.799999999999997px;height:7px;background:#d9d9d9;"></div>
<div style="position:absolute;left:683px;top:83px;font-size:6px;line-height:6px;color:#333;white-space:pre;">Object</div>
<div style="position:absolute;left:683px;top:94px;font-size:6px;line-height:6px;color:#333;white-space:pre;">Name</div>
<div style="position:absolute;left:703.6px;top:92.7px;width:214.0px;height:8.5px;background:#fff;border-top:1px solid #8c8c8c;border-left:1px solid #8c8c8c;border-bottom:1px solid #f0f0f0;border-right:1px solid #f0f0f0;"></div>
<div style="position:absolute;left:683px;top:106px;font-size:6px;line-height:6px;color:#333;white-space:pre;">α</div>
<div style="position:absolute;left:703.6px;top:105.3px;width:51.10000000000002px;height:8.100000000000009px;background:#fff;border-top:1px solid #8c8c8c;border-left:1px solid #8c8c8c;border-bottom:1px solid #f0f0f0;border-right:1px solid #f0f0f0;"></div>
<div style="position:absolute;left:705.6px;top:106.35px;font-size:6px;line-height:6px;color:#222;white-space:pre;">13:29:55.3009</div>
<div style="position:absolute;left:759px;top:105.5px;font-size:6px;line-height:6px;color:#333;white-space:pre;">δ</div>
<div style="position:absolute;left:798.2px;top:105.3px;width:51.09999999999991px;height:8.100000000000009px;background:#fff;border-top:1px solid #8c8c8c;border-left:1px solid #8c8c8c;border-bottom:1px solid #f0f0f0;border-right:1px solid #f0f0f0;"></div>
<div style="position:absolute;left:800.2px;top:106.35px;font-size:6px;line-height:6px;color:#222;white-space:pre;">+47:11:37.729</div>
<div style="position:absolute;left:852px;top:104px;width:29.600000000000023px;height:10.400000000000006px;background:#d9d9d9;border-top:1px solid #f6f6f6;border-left:1px solid #f6f6f6;border-bottom:1px solid #8c8c8c;border-right:1px solid #8c8c8c;"></div>
<div style="position:absolute;left:857px;top:106.2px;font-size:6px;line-height:6px;color:#222;white-space:pre;">fk5</div>
<div style="position:absolute;left:872.6px;top:109.2px;width:6px;height:1.5px;background:#f4f4f4;border-bottom:1px solid #8c8c8c;"></div>
<div style="position:absolute;left:883.8px;top:104px;width:36.80000000000007px;height:10.400000000000006px;background:#d9d9d9;border-top:1px solid #f6f6f6;border-left:1px solid #f6f6f6;border-bottom:1px solid #8c8c8c;border-right:1px solid #8c8c8c;"></div>
<div style="position:absolute;left:702.2px;top:106.2px;width:400px;text-align:center;font-size:6px;line-height:6px;color:#222;white-space:pre;">Update</div>
<div style="position:absolute;left:683px;top:120px;font-size:6px;line-height:6px;color:#333;white-space:pre;">Radius</div>
<div style="position:absolute;left:703.6px;top:118.8px;width:51.10000000000002px;height:8.200000000000003px;background:#fff;border-top:1px solid #8c8c8c;border-left:1px solid #8c8c8c;border-bottom:1px solid #f0f0f0;border-right:1px solid #f0f0f0;"></div>
<div style="position:absolute;left:705.6px;top:119.9px;font-size:6px;line-height:6px;color:#222;white-space:pre;">1.8675575</div>
<div style="position:absolute;left:757px;top:117.4px;width:39.700000000000045px;height:10.599999999999994px;background:#d9d9d9;border-top:1px solid #f6f6f6;border-left:1px solid #f6f6f6;border-bottom:1px solid #8c8c8c;border-right:1px solid #8c8c8c;"></div>
<div style="position:absolute;left:762px;top:119.7px;font-size:6px;line-height:6px;color:#222;white-space:pre;">arcmin</div>
<div style="position:absolute;left:787.7px;top:122.7px;width:6px;height:1.5px;background:#f4f4f4;border-bottom:1px solid #8c8c8c;"></div>
<div style="position:absolute;left:681px;top:129.8px;width:266px;height:1px;background:#a8a8a8;"></div>
<div style="position:absolute;left:681px;top:135.2px;width:266px;height:1px;background:#a8a8a8;"></div>
<div style="position:absolute;left:681px;top:136.2px;width:266px;height:1px;background:#f2f2f2;"></div>
<div style="position:absolute;left:682px;top:131.7px;width:18.5px;height:7px;background:#d9d9d9;"></div>
<div style="position:absolute;left:683px;top:132.2px;font-size:6px;line-height:6px;color:#333;white-space:pre;">Table</div>
<div style="position:absolute;left:683px;top:144px;font-size:6px;line-height:6px;color:#333;white-space:pre;">Filter</div>
<div style="position:absolute;left:712.9px;top:142.9px;width:178.0px;height:8.400000000000006px;background:#fff;border-top:1px solid #8c8c8c;border-left:1px solid #8c8c8c;border-bottom:1px solid #f0f0f0;border-right:1px solid #f0f0f0;"></div>
<div style="position:absolute;left:893.1px;top:141.4px;width:36.39999999999998px;height:11.099999999999994px;background:#d9d9d9;border-top:1px solid #f6f6f6;border-left:1px solid #f6f6f6;border-bottom:1px solid #8c8c8c;border-right:1px solid #8c8c8c;"></div>
<div style="position:absolute;left:711.3px;top:143.95px;width:400px;text-align:center;font-size:6px;line-height:6px;color:#222;white-space:pre;">Edit</div>
<div style="position:absolute;left:683px;top:157.5px;font-size:6px;line-height:6px;color:#333;white-space:pre;">Sort</div>
<div style="position:absolute;left:712.9px;top:154.8px;width:70.5px;height:11.599999999999994px;background:#d9d9d9;border-top:1px solid #f6f6f6;border-left:1px solid #f6f6f6;border-bottom:1px solid #8c8c8c;border-right:1px solid #8c8c8c;"></div>
<div style="position:absolute;left:717.9px;top:157.60000000000002px;font-size:6px;line-height:6px;color:#222;white-space:pre;"></div>
<div style="position:absolute;left:774.4px;top:160.60000000000002px;width:6px;height:1.5px;background:#f4f4f4;border-bottom:1px solid #8c8c8c;"></div>
<div style="position:absolute;left:786.5px;top:158px;width:4px;height:4px;background:#3a5a8c;transform:rotate(45deg);"></div>
<div style="position:absolute;left:793.8px;top:157.5px;font-size:6px;line-height:6px;color:#333;white-space:pre;">Increase</div>
<div style="position:absolute;left:820.5px;top:158px;width:4px;height:4px;background:#f4f4f4;transform:rotate(45deg);"></div>
<div style="position:absolute;left:828.1px;top:157.5px;font-size:6px;line-height:6px;color:#333;white-space:pre;">Decrease</div>
<div style="position:absolute;left:683px;top:170px;font-size:6px;line-height:6px;color:#333;white-space:pre;">Max Rows</div>
<div style="position:absolute;left:712.9px;top:168.4px;width:50.89999999999998px;height:8.900000000000006px;background:#fff;border-top:1px solid #8c8c8c;border-left:1px solid #8c8c8c;border-bottom:1px solid #f0f0f0;border-right:1px solid #f0f0f0;"></div>
<div style="position:absolute;left:714.9px;top:169.85000000000002px;font-size:6px;line-height:6px;color:#222;white-space:pre;">5000</div>
<div style="position:absolute;left:786.6px;top:170px;font-size:6px;line-height:6px;color:#333;white-space:pre;">Found</div>
<div style="position:absolute;left:820px;top:168.4px;width:52px;height:9.400000000000006px;background:#d9d9d9;border-top:1px solid #8c8c8c;border-left:1px solid #8c8c8c;border-bottom:1px solid #f0f0f0;border-right:1px solid #f0f0f0;"></div>
<div style="position:absolute;left:822px;top:170.10000000000002px;font-size:6px;line-height:6px;color:#222;white-space:pre;">70</div>
<div style="position:absolute;left:683px;top:182.5px;font-size:6px;line-height:6px;color:#333;white-space:pre;">α</div>
<div style="position:absolute;left:712.9px;top:180px;width:70.5px;height:10.699999999999989px;background:#d9d9d9;border-top:1px solid #f6f6f6;border-left:1px solid #f6f6f6;border-bottom:1px solid #8c8c8c;border-right:1px solid #8c8c8c;"></div>
<div style="position:absolute;left:717.9px;top:182.35px;font-size:6px;line-height:6px;color:#222;white-space:pre;">_RAJ2000</div>
<div style="position:absolute;left:774.4px;top:185.35px;width:6px;height:1.5px;background:#f4f4f4;border-bottom:1px solid #8c8c8c;"></div>
<div style="position:absolute;left:787.4px;top:182.5px;font-size:6px;line-height:6px;color:#333;white-space:pre;">δ</div>
<div style="position:absolute;left:820.1px;top:180px;width:70.79999999999995px;height:10.699999999999989px;background:#d9d9d9;border-top:1px solid #f6f6f6;border-left:1px solid #f6f6f6;border-bottom:1px solid #8c8c8c;border-right:1px solid #8c8c8c;"></div>
<div style="position:absolute;left:825.1px;top:182.35px;font-size:6px;line-height:6px;color:#222;white-space:pre;">_DEJ2000</div>
<div style="position:absolute;left:881.9px;top:185.35px;width:6px;height:1.5px;background:#f4f4f4;border-bottom:1px solid #8c8c8c;"></div>
<div style="position:absolute;left:893.6px;top:180px;width:29.199999999999932px;height:10.699999999999989px;background:#d9d9d9;border-top:1px solid #f6f6f6;border-left:1px solid #f6f6f6;border-bottom:1px solid #8c8c8c;border-right:1px solid #8c8c8c;"></div>
<div style="position:absolute;left:898.6px;top:182.35px;font-size:6px;line-height:6px;color:#222;white-space:pre;">fk5</div>
<div style="position:absolute;left:913.8px;top:185.35px;width:6px;height:1.5px;background:#f4f4f4;border-bottom:1px solid #8c8c8c;"></div>
<div style="position:absolute;left:680.5px;top:193.5px;width:262px;height:133.5px;background:#fff;"></div>
<div style="position:absolute;left:680.5px;top:193.5px;width:262px;height:10px;background:#d6d6d6;"></div>
<div style="position:absolute;left:683.5px;top:196.0px;font-size:6px;line-height:6px;color:#444;white-space:pre;">RAJ2000</div>
<div style="position:absolute;left:733.3px;top:196.0px;font-size:6px;line-height:6px;color:#444;white-space:pre;">DEJ2000</div>
<div style="position:absolute;left:784.1px;top:196.0px;font-size:6px;line-height:6px;color:#444;white-space:pre;">RAJ2000</div>
<div style="position:absolute;left:834.4px;top:196.0px;font-size:6px;line-height:6px;color:#444;white-space:pre;">DEJ2000</div>
<div style="position:absolute;left:885.4px;top:196.0px;font-size:6px;line-height:6px;color:#444;white-space:pre;">2MASS</div>
<div style="position:absolute;left:935.5px;top:196.0px;font-size:6px;line-height:6px;color:#444;white-space:pre;">Jm</div>
<div style="position:absolute;left:680.5px;top:211.54999999999998px;width:262px;height:0.8px;background:#e4e4e4;"></div>
<div style="position:absolute;left:680.5px;top:205.0px;width:49.799999999999955px;height:7px;overflow:hidden;font-size:6px;line-height:7px;color:#222;white-space:pre;letter-spacing:0.25px;-webkit-text-stroke:0;">202.48919400</div>
<div style="position:absolute;left:730.3px;top:205.0px;width:50.80000000000007px;height:7px;overflow:hidden;font-size:6px;line-height:7px;color:#222;white-space:pre;letter-spacing:0.25px;-webkit-text-stroke:0;">+47.17913100</div>
<div style="position:absolute;left:781.1px;top:205.0px;width:50.299999999999955px;height:7px;overflow:hidden;font-size:6px;line-height:7px;color:#222;white-space:pre;letter-spacing:0.25px;-webkit-text-stroke:0;">202.489194</div>
<div style="position:absolute;left:831.4px;top:205.0px;width:51.0px;height:7px;overflow:hidden;font-size:6px;line-height:7px;color:#222;white-space:pre;letter-spacing:0.25px;-webkit-text-stroke:0;">+47.179131</div>
<div style="position:absolute;left:882.4px;top:205.0px;width:50.10000000000002px;height:7px;overflow:hidden;font-size:6px;line-height:7px;color:#222;white-space:pre;letter-spacing:0.25px;-webkit-text-stroke:0;">13295740+4710448</div>
<div style="position:absolute;left:932.5px;top:205.0px;width:9.5px;height:7px;overflow:hidden;font-size:6px;line-height:7px;color:#222;white-space:pre;letter-spacing:0.25px;-webkit-text-stroke:0;">15.797</div>
<div style="position:absolute;left:680.5px;top:220.39999999999998px;width:262px;height:0.8px;background:#e4e4e4;"></div>
<div style="position:absolute;left:680.5px;top:213.85px;width:49.799999999999955px;height:7px;overflow:hidden;font-size:6px;line-height:7px;color:#222;white-space:pre;letter-spacing:0.25px;-webkit-text-stroke:0;">202.48563400</div>
<div style="position:absolute;left:730.3px;top:213.85px;width:50.80000000000007px;height:7px;overflow:hidden;font-size:6px;line-height:7px;color:#222;white-space:pre;letter-spacing:0.25px;-webkit-text-stroke:0;">+47.17950100</div>
<div style="position:absolute;left:781.1px;top:213.85px;width:50.299999999999955px;height:7px;overflow:hidden;font-size:6px;line-height:7px;color:#222;white-space:pre;letter-spacing:0.25px;-webkit-text-stroke:0;">202.485634</div>
<div style="position:absolute;left:831.4px;top:213.85px;width:51.0px;height:7px;overflow:hidden;font-size:6px;line-height:7px;color:#222;white-space:pre;letter-spacing:0.25px;-webkit-text-stroke:0;">+47.179501</div>
<div style="position:absolute;left:882.4px;top:213.85px;width:50.10000000000002px;height:7px;overflow:hidden;font-size:6px;line-height:7px;color:#222;white-space:pre;letter-spacing:0.25px;-webkit-text-stroke:0;">13295655+4710462</div>
<div style="position:absolute;left:932.5px;top:213.85px;width:9.5px;height:7px;overflow:hidden;font-size:6px;line-height:7px;color:#222;white-space:pre;letter-spacing:0.25px;-webkit-text-stroke:0;">15.222</div>
<div style="position:absolute;left:680.5px;top:229.24999999999997px;width:262px;height:0.8px;background:#e4e4e4;"></div>
<div style="position:absolute;left:680.5px;top:222.7px;width:49.799999999999955px;height:7px;overflow:hidden;font-size:6px;line-height:7px;color:#222;white-space:pre;letter-spacing:0.25px;-webkit-text-stroke:0;">202.48575300</div>
<div style="position:absolute;left:730.3px;top:222.7px;width:50.80000000000007px;height:7px;overflow:hidden;font-size:6px;line-height:7px;color:#222;white-space:pre;letter-spacing:0.25px;-webkit-text-stroke:0;">+47.17904700</div>
<div style="position:absolute;left:781.1px;top:222.7px;width:50.299999999999955px;height:7px;overflow:hidden;font-size:6px;line-height:7px;color:#222;white-space:pre;letter-spacing:0.25px;-webkit-text-stroke:0;">202.485753</div>
<div style="position:absolute;left:831.4px;top:222.7px;width:51.0px;height:7px;overflow:hidden;font-size:6px;line-height:7px;color:#222;white-space:pre;letter-spacing:0.25px;-webkit-text-stroke:0;">+47.179047</div>
<div style="position:absolute;left:882.4px;top:222.7px;width:50.10000000000002px;height:7px;overflow:hidden;font-size:6px;line-height:7px;color:#222;white-space:pre;letter-spacing:0.25px;-webkit-text-stroke:0;">13295658+4710445</div>
<div style="position:absolute;left:932.5px;top:222.7px;width:9.5px;height:7px;overflow:hidden;font-size:6px;line-height:7px;color:#222;white-space:pre;letter-spacing:0.25px;-webkit-text-stroke:0;">16.024</div>
<div style="position:absolute;left:680.5px;top:238.1px;width:262px;height:0.8px;background:#e4e4e4;"></div>
<div style="position:absolute;left:680.5px;top:231.55px;width:49.799999999999955px;height:7px;overflow:hidden;font-size:6px;line-height:7px;color:#222;white-space:pre;letter-spacing:0.25px;-webkit-text-stroke:0;">202.47573900</div>
<div style="position:absolute;left:730.3px;top:231.55px;width:50.80000000000007px;height:7px;overflow:hidden;font-size:6px;line-height:7px;color:#222;white-space:pre;letter-spacing:0.25px;-webkit-text-stroke:0;">+47.17707400</div>
<div style="position:absolute;left:781.1px;top:231.55px;width:50.299999999999955px;height:7px;overflow:hidden;font-size:6px;line-height:7px;color:#222;white-space:pre;letter-spacing:0.25px;-webkit-text-stroke:0;">202.475739</div>
<div style="position:absolute;left:831.4px;top:231.55px;width:51.0px;height:7px;overflow:hidden;font-size:6px;line-height:7px;color:#222;white-space:pre;letter-spacing:0.25px;-webkit-text-stroke:0;">+47.177074</div>
<div style="position:absolute;left:882.4px;top:231.55px;width:50.10000000000002px;height:7px;overflow:hidden;font-size:6px;line-height:7px;color:#222;white-space:pre;letter-spacing:0.25px;-webkit-text-stroke:0;">13295417+4710374</div>
<div style="position:absolute;left:932.5px;top:231.55px;width:9.5px;height:7px;overflow:hidden;font-size:6px;line-height:7px;color:#222;white-space:pre;letter-spacing:0.25px;-webkit-text-stroke:0;">16.69</div>
<div style="position:absolute;left:680.5px;top:246.95px;width:262px;height:0.8px;background:#e4e4e4;"></div>
<div style="position:absolute;left:680.5px;top:240.4px;width:49.799999999999955px;height:7px;overflow:hidden;font-size:6px;line-height:7px;color:#222;white-space:pre;letter-spacing:0.25px;-webkit-text-stroke:0;">202.48064200</div>
<div style="position:absolute;left:730.3px;top:240.4px;width:50.80000000000007px;height:7px;overflow:hidden;font-size:6px;line-height:7px;color:#222;white-space:pre;letter-spacing:0.25px;-webkit-text-stroke:0;">+47.16803400</div>
<div style="position:absolute;left:781.1px;top:240.4px;width:50.299999999999955px;height:7px;overflow:hidden;font-size:6px;line-height:7px;color:#222;white-space:pre;letter-spacing:0.25px;-webkit-text-stroke:0;">202.480642</div>
<div style="position:absolute;left:831.4px;top:240.4px;width:51.0px;height:7px;overflow:hidden;font-size:6px;line-height:7px;color:#222;white-space:pre;letter-spacing:0.25px;-webkit-text-stroke:0;">+47.168034</div>
<div style="position:absolute;left:882.4px;top:240.4px;width:50.10000000000002px;height:7px;overflow:hidden;font-size:6px;line-height:7px;color:#222;white-space:pre;letter-spacing:0.25px;-webkit-text-stroke:0;">13295535+4710049</div>
<div style="position:absolute;left:932.5px;top:240.4px;width:9.5px;height:7px;overflow:hidden;font-size:6px;line-height:7px;color:#222;white-space:pre;letter-spacing:0.25px;-webkit-text-stroke:0;">12.06</div>
<div style="position:absolute;left:680.5px;top:255.8px;width:262px;height:0.8px;background:#e4e4e4;"></div>
<div style="position:absolute;left:680.5px;top:249.25px;width:49.799999999999955px;height:7px;overflow:hidden;font-size:6px;line-height:7px;color:#222;white-space:pre;letter-spacing:0.25px;-webkit-text-stroke:0;">202.47158600</div>
<div style="position:absolute;left:730.3px;top:249.25px;width:50.80000000000007px;height:7px;overflow:hidden;font-size:6px;line-height:7px;color:#222;white-space:pre;letter-spacing:0.25px;-webkit-text-stroke:0;">+47.17843200</div>
<div style="position:absolute;left:781.1px;top:249.25px;width:50.299999999999955px;height:7px;overflow:hidden;font-size:6px;line-height:7px;color:#222;white-space:pre;letter-spacing:0.25px;-webkit-text-stroke:0;">202.471586</div>
<div style="position:absolute;left:831.4px;top:249.25px;width:51.0px;height:7px;overflow:hidden;font-size:6px;line-height:7px;color:#222;white-space:pre;letter-spacing:0.25px;-webkit-text-stroke:0;">+47.178432</div>
<div style="position:absolute;left:882.4px;top:249.25px;width:50.10000000000002px;height:7px;overflow:hidden;font-size:6px;line-height:7px;color:#222;white-space:pre;letter-spacing:0.25px;-webkit-text-stroke:0;">13295318+4710423</div>
<div style="position:absolute;left:932.5px;top:249.25px;width:9.5px;height:7px;overflow:hidden;font-size:6px;line-height:7px;color:#222;white-space:pre;letter-spacing:0.25px;-webkit-text-stroke:0;">15.04</div>
<div style="position:absolute;left:680.5px;top:264.65000000000003px;width:262px;height:0.8px;background:#e4e4e4;"></div>
<div style="position:absolute;left:680.5px;top:258.1px;width:49.799999999999955px;height:7px;overflow:hidden;font-size:6px;line-height:7px;color:#222;white-space:pre;letter-spacing:0.25px;-webkit-text-stroke:0;">202.47515400</div>
<div style="position:absolute;left:730.3px;top:258.1px;width:50.80000000000007px;height:7px;overflow:hidden;font-size:6px;line-height:7px;color:#222;white-space:pre;letter-spacing:0.25px;-webkit-text-stroke:0;">+47.18250700</div>
<div style="position:absolute;left:781.1px;top:258.1px;width:50.299999999999955px;height:7px;overflow:hidden;font-size:6px;line-height:7px;color:#222;white-space:pre;letter-spacing:0.25px;-webkit-text-stroke:0;">202.475154</div>
<div style="position:absolute;left:831.4px;top:258.1px;width:51.0px;height:7px;overflow:hidden;font-size:6px;line-height:7px;color:#222;white-space:pre;letter-spacing:0.25px;-webkit-text-stroke:0;">+47.182507</div>
<div style="position:absolute;left:882.4px;top:258.1px;width:50.10000000000002px;height:7px;overflow:hidden;font-size:6px;line-height:7px;color:#222;white-space:pre;letter-spacing:0.25px;-webkit-text-stroke:0;">13295403+4710570</div>
<div style="position:absolute;left:932.5px;top:258.1px;width:9.5px;height:7px;overflow:hidden;font-size:6px;line-height:7px;color:#222;white-space:pre;letter-spacing:0.25px;-webkit-text-stroke:0;">16.327</div>
<div style="position:absolute;left:680.5px;top:273.5px;width:262px;height:0.8px;background:#e4e4e4;"></div>
<div style="position:absolute;left:680.5px;top:266.95px;width:49.799999999999955px;height:7px;overflow:hidden;font-size:6px;line-height:7px;color:#222;white-space:pre;letter-spacing:0.25px;-webkit-text-stroke:0;">202.44175700</div>
<div style="position:absolute;left:730.3px;top:266.95px;width:50.80000000000007px;height:7px;overflow:hidden;font-size:6px;line-height:7px;color:#222;white-space:pre;letter-spacing:0.25px;-webkit-text-stroke:0;">+47.17994300</div>
<div style="position:absolute;left:781.1px;top:266.95px;width:50.299999999999955px;height:7px;overflow:hidden;font-size:6px;line-height:7px;color:#222;white-space:pre;letter-spacing:0.25px;-webkit-text-stroke:0;">202.441757</div>
<div style="position:absolute;left:831.4px;top:266.95px;width:51.0px;height:7px;overflow:hidden;font-size:6px;line-height:7px;color:#222;white-space:pre;letter-spacing:0.25px;-webkit-text-stroke:0;">+47.179943</div>
<div style="position:absolute;left:882.4px;top:266.95px;width:50.10000000000002px;height:7px;overflow:hidden;font-size:6px;line-height:7px;color:#222;white-space:pre;letter-spacing:0.25px;-webkit-text-stroke:0;">13294602+4710477</div>
<div style="position:absolute;left:932.5px;top:266.95px;width:9.5px;height:7px;overflow:hidden;font-size:6px;line-height:7px;color:#222;white-space:pre;letter-spacing:0.25px;-webkit-text-stroke:0;">12.261</div>
<div style="position:absolute;left:680.5px;top:282.35px;width:262px;height:0.8px;background:#e4e4e4;"></div>
<div style="position:absolute;left:680.5px;top:275.8px;width:49.799999999999955px;height:7px;overflow:hidden;font-size:6px;line-height:7px;color:#222;white-space:pre;letter-spacing:0.25px;-webkit-text-stroke:0;">202.46067100</div>
<div style="position:absolute;left:730.3px;top:275.8px;width:50.80000000000007px;height:7px;overflow:hidden;font-size:6px;line-height:7px;color:#222;white-space:pre;letter-spacing:0.25px;-webkit-text-stroke:0;">+47.16865200</div>
<div style="position:absolute;left:781.1px;top:275.8px;width:50.299999999999955px;height:7px;overflow:hidden;font-size:6px;line-height:7px;color:#222;white-space:pre;letter-spacing:0.25px;-webkit-text-stroke:0;">202.460671</div>
<div style="position:absolute;left:831.4px;top:275.8px;width:51.0px;height:7px;overflow:hidden;font-size:6px;line-height:7px;color:#222;white-space:pre;letter-spacing:0.25px;-webkit-text-stroke:0;">+47.168652</div>
<div style="position:absolute;left:882.4px;top:275.8px;width:50.10000000000002px;height:7px;overflow:hidden;font-size:6px;line-height:7px;color:#222;white-space:pre;letter-spacing:0.25px;-webkit-text-stroke:0;">13295056+4710071</div>
<div style="position:absolute;left:932.5px;top:275.8px;width:9.5px;height:7px;overflow:hidden;font-size:6px;line-height:7px;color:#222;white-space:pre;letter-spacing:0.25px;-webkit-text-stroke:0;">16.757</div>
<div style="position:absolute;left:680.5px;top:291.2px;width:262px;height:0.8px;background:#e4e4e4;"></div>
<div style="position:absolute;left:680.5px;top:284.65px;width:49.799999999999955px;height:7px;overflow:hidden;font-size:6px;line-height:7px;color:#222;white-space:pre;letter-spacing:0.25px;-webkit-text-stroke:0;">202.49538200</div>
<div style="position:absolute;left:730.3px;top:284.65px;width:50.80000000000007px;height:7px;overflow:hidden;font-size:6px;line-height:7px;color:#222;white-space:pre;letter-spacing:0.25px;-webkit-text-stroke:0;">+47.18458900</div>
<div style="position:absolute;left:781.1px;top:284.65px;width:50.299999999999955px;height:7px;overflow:hidden;font-size:6px;line-height:7px;color:#222;white-space:pre;letter-spacing:0.25px;-webkit-text-stroke:0;">202.495382</div>
<div style="position:absolute;left:831.4px;top:284.65px;width:51.0px;height:7px;overflow:hidden;font-size:6px;line-height:7px;color:#222;white-space:pre;letter-spacing:0.25px;-webkit-text-stroke:0;">+47.184589</div>
<div style="position:absolute;left:882.4px;top:284.65px;width:50.10000000000002px;height:7px;overflow:hidden;font-size:6px;line-height:7px;color:#222;white-space:pre;letter-spacing:0.25px;-webkit-text-stroke:0;">13295889+4711045</div>
<div style="position:absolute;left:932.5px;top:284.65px;width:9.5px;height:7px;overflow:hidden;font-size:6px;line-height:7px;color:#222;white-space:pre;letter-spacing:0.25px;-webkit-text-stroke:0;">16.235</div>
<div style="position:absolute;left:680.5px;top:300.05px;width:262px;height:0.8px;background:#e4e4e4;"></div>
<div style="position:absolute;left:680.5px;top:293.5px;width:49.799999999999955px;height:7px;overflow:hidden;font-size:6px;line-height:7px;color:#222;white-space:pre;letter-spacing:0.25px;-webkit-text-stroke:0;">202.47199100</div>
<div style="position:absolute;left:730.3px;top:293.5px;width:50.80000000000007px;height:7px;overflow:hidden;font-size:6px;line-height:7px;color:#222;white-space:pre;letter-spacing:0.25px;-webkit-text-stroke:0;">+47.19020800</div>
<div style="position:absolute;left:781.1px;top:293.5px;width:50.299999999999955px;height:7px;overflow:hidden;font-size:6px;line-height:7px;color:#222;white-space:pre;letter-spacing:0.25px;-webkit-text-stroke:0;">202.471991</div>
<div style="position:absolute;left:831.4px;top:293.5px;width:51.0px;height:7px;overflow:hidden;font-size:6px;line-height:7px;color:#222;white-space:pre;letter-spacing:0.25px;-webkit-text-stroke:0;">+47.190208</div>
<div style="position:absolute;left:882.4px;top:293.5px;width:50.10000000000002px;height:7px;overflow:hidden;font-size:6px;line-height:7px;color:#222;white-space:pre;letter-spacing:0.25px;-webkit-text-stroke:0;">13295327+4711247</div>
<div style="position:absolute;left:932.5px;top:293.5px;width:9.5px;height:7px;overflow:hidden;font-size:6px;line-height:7px;color:#222;white-space:pre;letter-spacing:0.25px;-webkit-text-stroke:0;">14.998</div>
<div style="position:absolute;left:680.5px;top:308.90000000000003px;width:262px;height:0.8px;background:#e4e4e4;"></div>
<div style="position:absolute;left:680.5px;top:302.35px;width:49.799999999999955px;height:7px;overflow:hidden;font-size:6px;line-height:7px;color:#222;white-space:pre;letter-spacing:0.25px;-webkit-text-stroke:0;">202.47495400</div>
<div style="position:absolute;left:730.3px;top:302.35px;width:50.80000000000007px;height:7px;overflow:hidden;font-size:6px;line-height:7px;color:#222;white-space:pre;letter-spacing:0.25px;-webkit-text-stroke:0;">+47.19433200</div>
<div style="position:absolute;left:781.1px;top:302.35px;width:50.299999999999955px;height:7px;overflow:hidden;font-size:6px;line-height:7px;color:#222;white-space:pre;letter-spacing:0.25px;-webkit-text-stroke:0;">202.474954</div>
<div style="position:absolute;left:831.4px;top:302.35px;width:51.0px;height:7px;overflow:hidden;font-size:6px;line-height:7px;color:#222;white-space:pre;letter-spacing:0.25px;-webkit-text-stroke:0;">+47.194332</div>
<div style="position:absolute;left:882.4px;top:302.35px;width:50.10000000000002px;height:7px;overflow:hidden;font-size:6px;line-height:7px;color:#222;white-space:pre;letter-spacing:0.25px;-webkit-text-stroke:0;">13295398+4711395</div>
<div style="position:absolute;left:932.5px;top:302.35px;width:9.5px;height:7px;overflow:hidden;font-size:6px;line-height:7px;color:#222;white-space:pre;letter-spacing:0.25px;-webkit-text-stroke:0;">14.133</div>
<div style="position:absolute;left:680.5px;top:317.75px;width:262px;height:0.8px;background:#e4e4e4;"></div>
<div style="position:absolute;left:680.5px;top:311.2px;width:49.799999999999955px;height:7px;overflow:hidden;font-size:6px;line-height:7px;color:#222;white-space:pre;letter-spacing:0.25px;-webkit-text-stroke:0;">202.47404800</div>
<div style="position:absolute;left:730.3px;top:311.2px;width:50.80000000000007px;height:7px;overflow:hidden;font-size:6px;line-height:7px;color:#222;white-space:pre;letter-spacing:0.25px;-webkit-text-stroke:0;">+47.19328700</div>
<div style="position:absolute;left:781.1px;top:311.2px;width:50.299999999999955px;height:7px;overflow:hidden;font-size:6px;line-height:7px;color:#222;white-space:pre;letter-spacing:0.25px;-webkit-text-stroke:0;">202.474048</div>
<div style="position:absolute;left:831.4px;top:311.2px;width:51.0px;height:7px;overflow:hidden;font-size:6px;line-height:7px;color:#222;white-space:pre;letter-spacing:0.25px;-webkit-text-stroke:0;">+47.193287</div>
<div style="position:absolute;left:882.4px;top:311.2px;width:50.10000000000002px;height:7px;overflow:hidden;font-size:6px;line-height:7px;color:#222;white-space:pre;letter-spacing:0.25px;-webkit-text-stroke:0;">13295377+4711358</div>
<div style="position:absolute;left:932.5px;top:311.2px;width:9.5px;height:7px;overflow:hidden;font-size:6px;line-height:7px;color:#222;white-space:pre;letter-spacing:0.25px;-webkit-text-stroke:0;">14.092</div>
<div style="position:absolute;left:680.5px;top:326.6px;width:262px;height:0.8px;background:#e4e4e4;"></div>
<div style="position:absolute;left:680.5px;top:320.05px;width:49.799999999999955px;height:7px;overflow:hidden;font-size:6px;line-height:7px;color:#222;white-space:pre;letter-spacing:0.25px;-webkit-text-stroke:0;">202.47265900</div>
<div style="position:absolute;left:730.3px;top:320.05px;width:50.80000000000007px;height:7px;overflow:hidden;font-size:6px;line-height:7px;color:#222;white-space:pre;letter-spacing:0.25px;-webkit-text-stroke:0;">+47.19234800</div>
<div style="position:absolute;left:781.1px;top:320.05px;width:50.299999999999955px;height:7px;overflow:hidden;font-size:6px;line-height:7px;color:#222;white-space:pre;letter-spacing:0.25px;-webkit-text-stroke:0;">202.472659</div>
<div style="position:absolute;left:831.4px;top:320.05px;width:51.0px;height:7px;overflow:hidden;font-size:6px;line-height:7px;color:#222;white-space:pre;letter-spacing:0.25px;-webkit-text-stroke:0;">+47.192348</div>
<div style="position:absolute;left:882.4px;top:320.05px;width:50.10000000000002px;height:7px;overflow:hidden;font-size:6px;line-height:7px;color:#222;white-space:pre;letter-spacing:0.25px;-webkit-text-stroke:0;">13295343+4711324</div>
<div style="position:absolute;left:932.5px;top:320.05px;width:9.5px;height:7px;overflow:hidden;font-size:6px;line-height:7px;color:#222;white-space:pre;letter-spacing:0.25px;-webkit-text-stroke:0;">12.212</div>
<div style="position:absolute;left:729.8px;top:203.5px;width:1px;height:123.5px;background:#a0a0a0;"></div>
<div style="position:absolute;left:780.6px;top:203.5px;width:1px;height:123.5px;background:#a0a0a0;"></div>
<div style="position:absolute;left:830.9px;top:203.5px;width:1px;height:123.5px;background:#a0a0a0;"></div>
<div style="position:absolute;left:881.9px;top:203.5px;width:1px;height:123.5px;background:#a0a0a0;"></div>
<div style="position:absolute;left:932.0px;top:203.5px;width:1px;height:123.5px;background:#a0a0a0;"></div>
<div style="position:absolute;left:942px;top:193.5px;width:6.5px;height:134px;background:#c8c8c8;"></div>
<div style="position:absolute;left:942.5px;top:203.5px;width:5.5px;height:40px;background:#d9d9d9;"></div>
<svg style="position:absolute;left:942.5px;top:194.5px" width="6" height="6"><path d="M1 4.5 L3 1.5 L5 4.5Z" fill="#222"/></svg>
<svg style="position:absolute;left:942.5px;top:321px" width="6" height="6"><path d="M1 1.5 L3 4.5 L5 1.5Z" fill="#222"/></svg>
<div style="position:absolute;left:680.5px;top:327.5px;width:262px;height:7.3px;background:#d9d9d9;border-top:1px solid #b4b4b4;"></div>
<div style="position:absolute;left:764px;top:328.5px;width:172px;height:6px;background:#c4c4c4;"></div>
<svg style="position:absolute;left:681px;top:328.5px" width="6" height="6"><path d="M4.5 1 L1.5 3 L4.5 5Z" fill="#222"/></svg>
<svg style="position:absolute;left:936.5px;top:328.5px" width="6" height="6"><path d="M1.5 1 L4.5 3 L1.5 5Z" fill="#222"/></svg>
<div style="position:absolute;left:681px;top:335.5px;width:266px;height:1px;background:#a8a8a8;"></div>
<div style="position:absolute;left:682px;top:338.5px;font-size:6px;line-height:6px;color:#333;white-space:pre;">Status</div>
<div style="position:absolute;left:703px;top:338.5px;font-size:6px;line-height:6px;color:#333;white-space:pre;">Done</div>
<div style="position:absolute;left:681px;top:346px;width:266px;height:1px;background:#a8a8a8;"></div>
<div style="position:absolute;left:681px;top:347px;width:266px;height:1px;background:#f2f2f2;"></div>
<div style="position:absolute;left:680.7px;top:349.8px;width:36.0px;height:11.699999999999989px;background:#d9d9d9;border-top:1px solid #f6f6f6;border-left:1px solid #f6f6f6;border-bottom:1px solid #8c8c8c;border-right:1px solid #8c8c8c;"></div>
<div style="position:absolute;left:498.70000000000005px;top:352.65px;width:400px;text-align:center;font-size:6px;line-height:6px;color:#222;white-space:pre;">Retrieve</div>
<div style="position:absolute;left:718.9px;top:349.8px;width:35.89999999999998px;height:11.699999999999989px;background:#d9d9d9;border-top:1px solid #f6f6f6;border-left:1px solid #f6f6f6;border-bottom:1px solid #8c8c8c;border-right:1px solid #8c8c8c;"></div>
<div style="position:absolute;left:536.8499999999999px;top:352.65px;width:400px;text-align:center;font-size:6px;line-height:6px;color:#aaa;white-space:pre;">Cancel</div>
<div style="position:absolute;left:757.6px;top:349.8px;width:36.10000000000002px;height:11.699999999999989px;background:#d9d9d9;border-top:1px solid #f6f6f6;border-left:1px solid #f6f6f6;border-bottom:1px solid #8c8c8c;border-right:1px solid #8c8c8c;"></div>
<div style="position:absolute;left:575.6500000000001px;top:352.65px;width:400px;text-align:center;font-size:6px;line-height:6px;color:#222;white-space:pre;">Filter</div>
<div style="position:absolute;left:796px;top:349.8px;width:36px;height:11.699999999999989px;background:#d9d9d9;border-top:1px solid #f6f6f6;border-left:1px solid #f6f6f6;border-bottom:1px solid #8c8c8c;border-right:1px solid #8c8c8c;"></div>
<div style="position:absolute;left:614.0px;top:352.65px;width:400px;text-align:center;font-size:6px;line-height:6px;color:#222;white-space:pre;">Clear</div>
<div style="position:absolute;left:835px;top:349.8px;width:36px;height:11.699999999999989px;background:#d9d9d9;border-top:1px solid #f6f6f6;border-left:1px solid #f6f6f6;border-bottom:1px solid #8c8c8c;border-right:1px solid #8c8c8c;"></div>
<div style="position:absolute;left:653.0px;top:352.65px;width:400px;text-align:center;font-size:6px;line-height:6px;color:#222;white-space:pre;">SAMP</div>
<div style="position:absolute;left:872.7px;top:349.8px;width:36.59999999999991px;height:11.699999999999989px;background:#d9d9d9;border-top:1px solid #f6f6f6;border-left:1px solid #f6f6f6;border-bottom:1px solid #8c8c8c;border-right:1px solid #8c8c8c;"></div>
<div style="position:absolute;left:691.0px;top:352.65px;width:400px;text-align:center;font-size:6px;line-height:6px;color:#222;white-space:pre;">Plot</div>
<div style="position:absolute;left:911.9px;top:349.8px;width:35.10000000000002px;height:11.699999999999989px;background:#d9d9d9;border-top:1px solid #f6f6f6;border-left:1px solid #f6f6f6;border-bottom:1px solid #8c8c8c;border-right:1px solid #8c8c8c;"></div>
<div style="position:absolute;left:729.45px;top:352.65px;width:400px;text-align:center;font-size:6px;line-height:6px;color:#222;white-space:pre;">Close</div>
</div>
<div style="position:absolute;left:690px;top:426.3px;width:248.29999999999995px;height:99.30000000000001px;border-radius:4px 4px 0 0;box-shadow:0 3px 8px 0px rgba(0,0,0,0.45);background:#eeeeee;"></div>
<div style="position:absolute;left:690px;top:426.3px;width:248.29999999999995px;height:7.7px;border-radius:4px 4px 0 0;background:#f5f3ee;border-bottom:1px solid #dcdad4;"></div>
<div style="position:absolute;left:691.3px;top:428.3px;width:4px;height:4px;border-radius:50%;background:#fe5f57;"></div>
<div style="position:absolute;left:697.3px;top:428.3px;width:4px;height:4px;border-radius:50%;background:#febc2e;"></div>
<div style="position:absolute;left:703.2px;top:428.3px;width:4px;height:4px;border-radius:50%;background:#28c840;"></div>
<div style="position:absolute;left:614.5px;top:427.8px;width:400px;text-align:center;font-size:5px;line-height:5px;color:#333;white-space:pre;font-weight:bold;">TOPCAT</div>
<div style="position:absolute;left:698.0px;top:437.0px;width:8px;height:5px;background:#8a7060;border-radius:2px;"></div>
<div style="position:absolute;left:708.6px;top:435.5px;width:7px;height:7px;background:#e4e4e4;border:1px solid #777;"></div>
<div style="position:absolute;left:720.1px;top:435.5px;width:5px;height:7px;background:linear-gradient(#e8d070,#8888aa);border-radius:2px;"></div>
<div style="position:absolute;left:732.8px;top:435.5px;width:7px;height:7px;background:#e4e4e4;border:1px solid #777;"></div>
<div style="position:absolute;left:743.3px;top:435.5px;width:7px;height:7px;background:#f0f0f0;border:1px solid #555;"></div>
<div style="position:absolute;left:743.3px;top:435.5px;width:7px;height:2.5px;background:#4070c0;"></div>
<div style="position:absolute;left:754.0px;top:435.5px;width:7px;height:7px;background:#f0f0f0;border:1px solid #555;"></div>
<div style="position:absolute;left:754.0px;top:435.5px;width:7px;height:2.5px;background:#4070c0;"></div>
<div style="position:absolute;left:763.9px;top:436.5px;width:8px;height:5px;border-radius:50%;background:#8a5ad0;"></div>
<div style="position:absolute;left:766.4px;top:437.5px;width:4px;height:3px;border-radius:50%;background:#e01010;"></div>
<div style="position:absolute;left:775.4px;top:435.0px;font-size:8px;line-height:8px;color:#222;white-space:pre;">Σ</div>
<div style="position:absolute;left:785.8px;top:435.5px;width:7px;height:7px;background:linear-gradient(135deg,#3a5fc0,#e0a020,#d02020);border:1px solid #555;"></div>
<div style="position:absolute;left:799.3px;top:435.5px;width:7px;height:7px;background:#f4f4f4;border:1px solid #555;"></div>
<div style="position:absolute;left:801.3px;top:437.5px;width:1px;height:5px;background:#333;"></div>
<div style="position:absolute;left:803.3px;top:439.5px;width:1px;height:3px;background:#333;"></div>
<div style="position:absolute;left:810.0px;top:435.5px;width:7px;height:7px;background:#e4e4e4;border:1px solid #777;"></div>
<div style="position:absolute;left:819.7px;top:436.5px;width:9px;height:5px;border-radius:50%;border:1px solid #444;background:#ddd;"></div>
<div style="position:absolute;left:831.2px;top:435.5px;width:7px;height:7px;border-radius:50%;border:1px solid #444;background:#f6f6f6;"></div>
<div style="position:absolute;left:841.6px;top:435.5px;width:7px;height:7px;border-radius:50%;border:1px solid #444;background:#f6f6f6;"></div>
<div style="position:absolute;left:852.0px;top:435.5px;width:7px;height:7px;background:#e4e4e4;border:1px solid #777;"></div>
<div style="position:absolute;left:866.1px;top:435.5px;width:4px;height:4px;background:#d01010;"></div>
<div style="position:absolute;left:869.1px;top:438.5px;width:4px;height:4px;background:#c8b070;"></div>
<div style="position:absolute;left:876.5px;top:435.5px;width:7px;height:7px;background:#9ab0d0;border:1px solid #445;"></div>
<svg style="position:absolute;left:885.9px;top:434.5px" width="9" height="9"><path d="M1 1 L8 8 M8 1 L1 8" stroke="#2e6fd6" stroke-width="1.6"/><path d="M3 4.5 L6 4.5" stroke="#e8d000" stroke-width="1.5"/></svg>
<div style="position:absolute;left:899.2px;top:436.5px;font-size:5px;line-height:5px;color:#555;white-space:pre;font-style:italic;">Abc</div>
<div style="position:absolute;left:915.0px;top:435.5px;width:7px;height:6px;background:#f0f0f0;border:1px solid #444;border-radius:2px;"></div>
<div style="position:absolute;left:925.4px;top:435.0px;width:8px;height:8px;border-radius:50%;background:#e00000;"></div>
<div style="position:absolute;left:692.4px;top:435px;width:0.8px;height:9px;background:#bbb;"></div>
<div style="position:absolute;left:729.5px;top:435px;width:0.8px;height:9px;background:#bbb;"></div>
<div style="position:absolute;left:796.8px;top:435px;width:0.8px;height:9px;background:#bbb;"></div>
<div style="position:absolute;left:862.7px;top:435px;width:0.8px;height:9px;background:#bbb;"></div>
<div style="position:absolute;left:897px;top:435px;width:0.8px;height:9px;background:#bbb;"></div>
<div style="position:absolute;left:912.1px;top:435px;width:0.8px;height:9px;background:#bbb;"></div>
<div style="position:absolute;left:690px;top:446.5px;width:248.29999999999995px;height:1px;background:#c8c8c8;"></div>
<div style="position:absolute;left:692.5px;top:449.5px;width:57.0px;height:66.5px;border:1px solid #c4c4c4;box-shadow:inset 1px 1px 0 #fafafa;"></div>
<div style="position:absolute;left:694.5px;top:447.0px;width:26.0px;height:5px;background:#eeeeee;"></div>
<div style="position:absolute;left:695.5px;top:447.0px;font-size:4.5px;line-height:4.5px;color:#666;white-space:pre;">Table List</div>
<div style="position:absolute;left:693.6px;top:451px;width:55px;height:64px;background:#fff;border:1px solid #b8b8b8;"></div>
<div style="position:absolute;left:694.3px;top:453px;width:53px;height:4.8px;background:#1a3df0;"></div>
<div style="position:absolute;left:695px;top:453.4px;font-size:4.2px;line-height:4.2px;color:#fff;white-space:pre;">1: 2MASS Point Sources</div>
<div style="position:absolute;left:694.9px;top:517.4px;width:52.3px;height:4.8px;background:#b4ecf6;"></div>
<div style="position:absolute;left:694.9px;top:517.4px;width:1.5px;height:4.8px;background:#1a50e0;"></div>
<div style="position:absolute;left:521px;top:517.6999999999999px;width:400px;text-align:center;font-size:4.2px;line-height:4.2px;color:#333;white-space:pre;">65 / 3641 M</div>
<div style="position:absolute;left:751.8px;top:449.8px;width:183.20000000000005px;height:57.0px;border:1px solid #c4c4c4;box-shadow:inset 1px 1px 0 #fafafa;"></div>
<div style="position:absolute;left:753.8px;top:447.3px;width:59.599999999999994px;height:5px;background:#eeeeee;"></div>
<div style="position:absolute;left:754.8px;top:447.3px;font-size:4.5px;line-height:4.5px;color:#666;white-space:pre;">Current Table Properties</div>
<div style="position:absolute;left:689px;top:456px;width:100px;text-align:right;font-size:4.6px;line-height:6px;color:#333;white-space:pre;">Label:</div>
<div style="position:absolute;left:689px;top:462px;width:100px;text-align:right;font-size:4.6px;line-height:6px;color:#333;white-space:pre;">Location:</div>
<div style="position:absolute;left:791.3px;top:462px;font-size:4.6px;line-height:6px;color:#333;white-space:pre;">Hub:2MASS Point Sources</div>
<div style="position:absolute;left:689px;top:467px;width:100px;text-align:right;font-size:4.6px;line-height:6px;color:#333;white-space:pre;">Name:</div>
<div style="position:absolute;left:791.3px;top:467px;font-size:4.6px;line-height:6px;color:#333;white-space:pre;">2MASS Point Sources</div>
<div style="position:absolute;left:689px;top:473px;width:100px;text-align:right;font-size:4.6px;line-height:6px;color:#333;white-space:pre;">Rows:</div>
<div style="position:absolute;left:791.3px;top:473px;font-size:4.6px;line-height:6px;color:#333;white-space:pre;">70</div>
<div style="position:absolute;left:689px;top:478px;width:100px;text-align:right;font-size:4.6px;line-height:6px;color:#333;white-space:pre;">Columns:</div>
<div style="position:absolute;left:791.3px;top:478px;font-size:4.6px;line-height:6px;color:#333;white-space:pre;">17</div>
<div style="position:absolute;left:689px;top:484px;width:100px;text-align:right;font-size:4.6px;line-height:6px;color:#333;white-space:pre;">Sort Order:</div>
<div style="position:absolute;left:689px;top:493px;width:100px;text-align:right;font-size:4.6px;line-height:6px;color:#333;white-space:pre;">Row Subset:</div>
<div style="position:absolute;left:791.3px;top:455.3px;width:140px;height:4.9px;background:#fff;"></div>
<div style="position:absolute;left:793px;top:455.8px;font-size:4.5px;line-height:4.5px;color:#444;white-space:pre;">2MASS Point Sources</div>
<svg style="position:absolute;left:791px;top:483px" width="7" height="7"><path d="M3.5 0.5 L6.5 3.5 L4.8 3.5 L4.8 6.5 L2.2 6.5 L2.2 3.5 L0.5 3.5Z" fill="#f0e000" stroke="#a09000" stroke-width="0.5"/></svg>
<div style="position:absolute;left:800px;top:484px;width:30px;height:5px;background:#fff;border-radius:2px;"></div>
<div style="position:absolute;left:826px;top:484px;width:4px;height:5px;background:#3080f0;border-radius:1.5px;"></div>
<div style="position:absolute;left:795.4px;top:492.3px;width:15px;height:5px;background:#fff;border-radius:2px;"></div>
<div style="position:absolute;left:797px;top:492.3px;font-size:4.5px;line-height:4.5px;color:#333;white-space:pre;">All</div>
<div style="position:absolute;left:806.5px;top:492.3px;width:4px;height:5px;background:#3080f0;border-radius:1.5px;"></div>
<div style="position:absolute;left:754.2px;top:498.5px;font-size:4.5px;line-height:6px;color:#333;white-space:pre;">Activation Actions:</div>
<div style="position:absolute;left:792px;top:498.5px;font-size:4.5px;line-height:6px;color:#333;white-space:pre;">1 / 6</div>
<div style="position:absolute;left:751.8px;top:509.7px;width:183.20000000000005px;height:13.099999999999966px;border:1px solid #c4c4c4;box-shadow:inset 1px 1px 0 #fafafa;"></div>
<div style="position:absolute;left:753.8px;top:507.2px;width:11.6px;height:5px;background:#eeeeee;"></div>
<div style="position:absolute;left:754.8px;top:507.2px;font-size:4.5px;line-height:4.5px;color:#666;white-space:pre;">SAMP</div>
<div style="position:absolute;left:754.2px;top:514px;font-size:4.3px;line-height:6px;color:#333;white-space:pre;">Messages:</div>
<div style="position:absolute;left:774.3px;top:513.6px;width:69.4px;height:7.4px;background:#fff;"></div>
<div style="position:absolute;left:806.5px;top:514.6px;width:5px;height:5px;border-radius:50%;border:0.6px solid #888;background:#fff;"></div>
<div style="position:absolute;left:846px;top:513.6px;width:17px;height:7.4px;background:#f4f4f4;"></div>
<div style="position:absolute;left:846.8px;top:514px;font-size:4.3px;line-height:6px;color:#333;white-space:pre;">Clients:</div>
<div style="position:absolute;left:862.9px;top:513.6px;width:58.9px;height:7.4px;background:#fff;"></div>
<div style="position:absolute;left:864.5px;top:515px;width:4.6px;height:4.6px;background:#111;border:0.8px solid #777;"></div>
<div style="position:absolute;left:871.7px;top:515px;width:4.6px;height:4.6px;border-radius:50%;background:#e0a000;border:0.6px solid #5aa;"></div>
<div style="position:absolute;left:879px;top:515px;width:5px;height:4.6px;border-radius:50%;background:#f0e000;"></div>
<svg style="position:absolute;left:924.5px;top:513px" width="8" height="8"><path d="M1 7 L7 1 M2 7 L7 2.5 M1.5 5 L5.5 1" stroke="#777" stroke-width="0.9"/></svg>
<div style="position:absolute;left:692.3px;top:603.2px;width:243.4000000000001px;height:131.79999999999995px;border-radius:4px 4px 0 0;box-shadow:0 3px 8px 0px rgba(0,0,0,0.45);background:#eeeeee;"></div>
<div style="position:absolute;left:692.3px;top:603.2px;width:243.4000000000001px;height:9px;border-radius:4px 4px 0 0;background:#f5f3ee;border-bottom:1px solid #dcdad4;"></div>
<div style="position:absolute;left:694.3px;top:605.5px;width:4.4px;height:4.4px;border-radius:50%;background:#fe5f57;"></div>
<div style="position:absolute;left:701.0px;top:605.5px;width:4.4px;height:4.4px;border-radius:50%;background:#febc2e;"></div>
<div style="position:absolute;left:707.8px;top:605.5px;width:4.4px;height:4.4px;border-radius:50%;background:#28c840;"></div>
<div style="position:absolute;left:614.5px;top:605.1px;width:400px;text-align:center;font-size:5.2px;line-height:5.2px;color:#333;white-space:pre;font-weight:bold;">TOPCAT(1): Table Browser</div>
<div style="position:absolute;left:697.6px;top:613px;width:36.4px;height:9.5px;border:1px solid #d4d4d4;"></div>
<div style="position:absolute;left:737.2px;top:613px;width:24.5px;height:9.5px;border:1px solid #d4d4d4;"></div>
<div style="position:absolute;left:699.5px;top:614px;width:7px;height:7px;background:repeating-linear-gradient(#555 0 1px,#aaa 1px 2px);"></div>
<div style="position:absolute;left:711.8px;top:614px;width:7px;height:7px;background:repeating-linear-gradient(#555 0 1px,#aaa 1px 2px);"></div>
<div style="position:absolute;left:724.3px;top:613.8px;width:7px;height:7.5px;background:#f0e8b0;border:0.8px solid #777;"></div>
<div style="position:absolute;left:725.5px;top:616px;width:4.5px;height:3.5px;border-radius:50%;background:#20a0e0;"></div>
<div style="position:absolute;left:739.5px;top:614px;width:7px;height:7px;background:#fff;border:1px solid #333;border-radius:1.5px;"></div>
<div style="position:absolute;left:741.2px;top:614.6px;font-size:5.5px;line-height:5.5px;color:#111;white-space:pre;font-weight:bold;">?</div>
<svg style="position:absolute;left:751.5px;top:614px" width="8" height="8"><path d="M1 1 L7 7 M7 1 L1 7" stroke="#111" stroke-width="1.5"/></svg>
<div style="position:absolute;left:695.6px;top:627.3px;font-size:5px;line-height:5px;color:#333;white-space:pre;font-weight:bold;">Table Browser for 1: 2MASS Point Sources</div>
<div style="position:absolute;left:695.6px;top:632px;width:236.8px;height:87px;background:#fff;border:1px solid #c8c8c8;"></div>
<div style="position:absolute;left:711px;top:632.7px;font-size:4.4px;line-height:4.4px;color:#555;white-space:pre;">_RAJ2000</div>
<div style="position:absolute;left:741.5px;top:632.7px;font-size:4.4px;line-height:4.4px;color:#555;white-space:pre;">_DEJ2000</div>
<div style="position:absolute;left:772px;top:632.7px;font-size:4.4px;line-height:4.4px;color:#555;white-space:pre;">RAJ2000</div>
<div style="position:absolute;left:806px;top:632.7px;font-size:4.4px;line-height:4.4px;color:#555;white-space:pre;">DEJ2000</div>
<div style="position:absolute;left:836px;top:632.7px;font-size:4.4px;line-height:4.4px;color:#555;white-space:pre;">2MASS</div>
<div style="position:absolute;left:886px;top:632.7px;font-size:4.4px;line-height:4.4px;color:#555;white-space:pre;">Jmag</div>
<div style="position:absolute;left:915px;top:632.7px;font-size:4.4px;line-height:4.4px;color:#555;white-space:pre;">e_Jma</div>
<div style="position:absolute;left:696px;top:636.5px;width:232px;height:82px;overflow:hidden;"><div style="position:absolute;left:0;top:0;width:464px;height:164px;transform:scale(0.5);transform-origin:0 0;will-change:transform;">
<div style="position:absolute;left:0px;top:3.599999999999909px;width:18px;text-align:right;font-family:'Liberation Mono', monospace;font-size:9.2px;line-height:10px;color:#444;">1</div>
<div style="position:absolute;left:32px;top:3.399999999999909px;font-family:'Liberation Mono', monospace;font-size:9.4px;line-height:10px;color:#000;font-weight:bold;white-space:pre;opacity:0.85;">202.48919</div>
<div style="position:absolute;left:98.40000000000009px;top:3.399999999999909px;font-family:'Liberation Mono', monospace;font-size:9.4px;line-height:10px;color:#000;font-weight:bold;white-space:pre;opacity:0.85;">47.17913</div>
<div style="position:absolute;left:159.20000000000005px;top:3.399999999999909px;font-family:'Liberation Mono', monospace;font-size:9.4px;line-height:10px;color:#000;font-weight:bold;white-space:pre;opacity:0.85;">202.48909</div>
<div style="position:absolute;left:226px;top:3.399999999999909px;font-family:'Liberation Mono', monospace;font-size:9.4px;line-height:10px;color:#000;font-weight:bold;white-space:pre;opacity:0.85;">47.17913</div>
<div style="position:absolute;left:279.5999999999999px;top:3.399999999999909px;font-family:'Liberation Mono', monospace;font-size:9.4px;line-height:10px;color:#000;font-weight:bold;white-space:pre;opacity:0.85;">13295740+4710448</div>
<div style="position:absolute;left:381.4000000000001px;top:3.399999999999909px;font-family:'Liberation Mono', monospace;font-size:9.4px;line-height:10px;color:#000;font-weight:bold;white-space:pre;opacity:0.85;">15.797</div>
<div style="position:absolute;left:448px;top:3.399999999999909px;font-family:'Liberation Mono', monospace;font-size:9.4px;line-height:10px;color:#000;font-weight:bold;white-space:pre;opacity:0.85;">0.1</div>
<div style="position:absolute;left:0px;top:14.419999999999845px;width:18px;text-align:right;font-family:'Liberation Mono', monospace;font-size:9.2px;line-height:10px;color:#444;">2</div>
<div style="position:absolute;left:32px;top:14.219999999999846px;font-family:'Liberation Mono', monospace;font-size:9.4px;line-height:10px;color:#000;font-weight:bold;white-space:pre;opacity:0.85;">202.48563</div>
<div style="position:absolute;left:98.40000000000009px;top:14.219999999999846px;font-family:'Liberation Mono', monospace;font-size:9.4px;line-height:10px;color:#000;font-weight:bold;white-space:pre;opacity:0.85;">47.1795</div>
<div style="position:absolute;left:159.20000000000005px;top:14.219999999999846px;font-family:'Liberation Mono', monospace;font-size:9.4px;line-height:10px;color:#000;font-weight:bold;white-space:pre;opacity:0.85;">202.48563</div>
<div style="position:absolute;left:226px;top:14.219999999999846px;font-family:'Liberation Mono', monospace;font-size:9.4px;line-height:10px;color:#000;font-weight:bold;white-space:pre;opacity:0.85;">47.1795</div>
<div style="position:absolute;left:279.5999999999999px;top:14.219999999999846px;font-family:'Liberation Mono', monospace;font-size:9.4px;line-height:10px;color:#000;font-weight:bold;white-space:pre;opacity:0.85;">13295655+4710462</div>
<div style="position:absolute;left:381.4000000000001px;top:14.219999999999846px;font-family:'Liberation Mono', monospace;font-size:9.4px;line-height:10px;color:#000;font-weight:bold;white-space:pre;opacity:0.85;">15.222</div>
<div style="position:absolute;left:0px;top:25.24000000000001px;width:18px;text-align:right;font-family:'Liberation Mono', monospace;font-size:9.2px;line-height:10px;color:#444;">3</div>
<div style="position:absolute;left:32px;top:25.04000000000001px;font-family:'Liberation Mono', monospace;font-size:9.4px;line-height:10px;color:#000;font-weight:bold;white-space:pre;opacity:0.85;">202.48575</div>
<div style="position:absolute;left:98.40000000000009px;top:25.04000000000001px;font-family:'Liberation Mono', monospace;font-size:9.4px;line-height:10px;color:#000;font-weight:bold;white-space:pre;opacity:0.85;">47.17905</div>
<div style="position:absolute;left:159.20000000000005px;top:25.04000000000001px;font-family:'Liberation Mono', monospace;font-size:9.4px;line-height:10px;color:#000;font-weight:bold;white-space:pre;opacity:0.85;">202.48575</div>
<div style="position:absolute;left:226px;top:25.04000000000001px;font-family:'Liberation Mono', monospace;font-size:9.4px;line-height:10px;color:#000;font-weight:bold;white-space:pre;opacity:0.85;">47.17905</div>
<div style="position:absolute;left:279.5999999999999px;top:25.04000000000001px;font-family:'Liberation Mono', monospace;font-size:9.4px;line-height:10px;color:#000;font-weight:bold;white-space:pre;opacity:0.85;">13295658+4710445</div>
<div style="position:absolute;left:381.4000000000001px;top:25.04000000000001px;font-family:'Liberation Mono', monospace;font-size:9.4px;line-height:10px;color:#000;font-weight:bold;white-space:pre;opacity:0.85;">16.024</div>
<div style="position:absolute;left:448px;top:25.04000000000001px;font-family:'Liberation Mono', monospace;font-size:9.4px;line-height:10px;color:#000;font-weight:bold;white-space:pre;opacity:0.85;">0.1</div>
<div style="position:absolute;left:0px;top:36.059999999999945px;width:18px;text-align:right;font-family:'Liberation Mono', monospace;font-size:9.2px;line-height:10px;color:#444;">4</div>
<div style="position:absolute;left:32px;top:35.85999999999994px;font-family:'Liberation Mono', monospace;font-size:9.4px;line-height:10px;color:#000;font-weight:bold;white-space:pre;opacity:0.85;">202.47574</div>
<div style="position:absolute;left:98.40000000000009px;top:35.85999999999994px;font-family:'Liberation Mono', monospace;font-size:9.4px;line-height:10px;color:#000;font-weight:bold;white-space:pre;opacity:0.85;">47.17707</div>
<div style="position:absolute;left:159.20000000000005px;top:35.85999999999994px;font-family:'Liberation Mono', monospace;font-size:9.4px;line-height:10px;color:#000;font-weight:bold;white-space:pre;opacity:0.85;">202.47574</div>
<div style="position:absolute;left:226px;top:35.85999999999994px;font-family:'Liberation Mono', monospace;font-size:9.4px;line-height:10px;color:#000;font-weight:bold;white-space:pre;opacity:0.85;">47.17707</div>
<div style="position:absolute;left:279.5999999999999px;top:35.85999999999994px;font-family:'Liberation Mono', monospace;font-size:9.4px;line-height:10px;color:#000;font-weight:bold;white-space:pre;opacity:0.85;">13295417+4710374</div>
<div style="position:absolute;left:381.4000000000001px;top:35.85999999999994px;font-family:'Liberation Mono', monospace;font-size:9.4px;line-height:10px;color:#000;font-weight:bold;white-space:pre;opacity:0.85;">16.69</div>
<div style="position:absolute;left:448px;top:35.85999999999994px;font-family:'Liberation Mono', monospace;font-size:9.4px;line-height:10px;color:#000;font-weight:bold;white-space:pre;opacity:0.85;">0.1</div>
<div style="position:absolute;left:0px;top:46.87999999999988px;width:18px;text-align:right;font-family:'Liberation Mono', monospace;font-size:9.2px;line-height:10px;color:#444;">5</div>
<div style="position:absolute;left:32px;top:46.67999999999988px;font-family:'Liberation Mono', monospace;font-size:9.4px;line-height:10px;color:#000;font-weight:bold;white-space:pre;opacity:0.85;">202.48064</div>
<div style="position:absolute;left:98.40000000000009px;top:46.67999999999988px;font-family:'Liberation Mono', monospace;font-size:9.4px;line-height:10px;color:#000;font-weight:bold;white-space:pre;opacity:0.85;">47.16803</div>
<div style="position:absolute;left:159.20000000000005px;top:46.67999999999988px;font-family:'Liberation Mono', monospace;font-size:9.4px;line-height:10px;color:#000;font-weight:bold;white-space:pre;opacity:0.85;">202.48064</div>
<div style="position:absolute;left:226px;top:46.67999999999988px;font-family:'Liberation Mono', monospace;font-size:9.4px;line-height:10px;color:#000;font-weight:bold;white-space:pre;opacity:0.85;">47.16803</div>
<div style="position:absolute;left:279.5999999999999px;top:46.67999999999988px;font-family:'Liberation Mono', monospace;font-size:9.4px;line-height:10px;color:#000;font-weight:bold;white-space:pre;opacity:0.85;">13295535+4710049</div>
<div style="position:absolute;left:381.4000000000001px;top:46.67999999999988px;font-family:'Liberation Mono', monospace;font-size:9.4px;line-height:10px;color:#000;font-weight:bold;white-space:pre;opacity:0.85;">12.06</div>
<div style="position:absolute;left:448px;top:46.67999999999988px;font-family:'Liberation Mono', monospace;font-size:9.4px;line-height:10px;color:#000;font-weight:bold;white-space:pre;opacity:0.85;">0.0</div>
<div style="position:absolute;left:0px;top:57.69999999999982px;width:18px;text-align:right;font-family:'Liberation Mono', monospace;font-size:9.2px;line-height:10px;color:#444;">6</div>
<div style="position:absolute;left:32px;top:57.499999999999815px;font-family:'Liberation Mono', monospace;font-size:9.4px;line-height:10px;color:#000;font-weight:bold;white-space:pre;opacity:0.85;">202.47158</div>
<div style="position:absolute;left:98.40000000000009px;top:57.499999999999815px;font-family:'Liberation Mono', monospace;font-size:9.4px;line-height:10px;color:#000;font-weight:bold;white-space:pre;opacity:0.85;">47.17843</div>
<div style="position:absolute;left:159.20000000000005px;top:57.499999999999815px;font-family:'Liberation Mono', monospace;font-size:9.4px;line-height:10px;color:#000;font-weight:bold;white-space:pre;opacity:0.85;">202.47158</div>
<div style="position:absolute;left:226px;top:57.499999999999815px;font-family:'Liberation Mono', monospace;font-size:9.4px;line-height:10px;color:#000;font-weight:bold;white-space:pre;opacity:0.85;">47.17843</div>
<div style="position:absolute;left:279.5999999999999px;top:57.499999999999815px;font-family:'Liberation Mono', monospace;font-size:9.4px;line-height:10px;color:#000;font-weight:bold;white-space:pre;opacity:0.85;">13295318+4710423</div>
<div style="position:absolute;left:381.4000000000001px;top:57.499999999999815px;font-family:'Liberation Mono', monospace;font-size:9.4px;line-height:10px;color:#000;font-weight:bold;white-space:pre;opacity:0.85;">15.042</div>
<div style="position:absolute;left:448px;top:57.499999999999815px;font-family:'Liberation Mono', monospace;font-size:9.4px;line-height:10px;color:#000;font-weight:bold;white-space:pre;opacity:0.85;">0.1</div>
<div style="position:absolute;left:0px;top:68.51999999999998px;width:18px;text-align:right;font-family:'Liberation Mono', monospace;font-size:9.2px;line-height:10px;color:#444;">7</div>
<div style="position:absolute;left:32px;top:68.31999999999998px;font-family:'Liberation Mono', monospace;font-size:9.4px;line-height:10px;color:#000;font-weight:bold;white-space:pre;opacity:0.85;">202.47515</div>
<div style="position:absolute;left:98.40000000000009px;top:68.31999999999998px;font-family:'Liberation Mono', monospace;font-size:9.4px;line-height:10px;color:#000;font-weight:bold;white-space:pre;opacity:0.85;">47.18251</div>
<div style="position:absolute;left:159.20000000000005px;top:68.31999999999998px;font-family:'Liberation Mono', monospace;font-size:9.4px;line-height:10px;color:#000;font-weight:bold;white-space:pre;opacity:0.85;">202.47505</div>
<div style="position:absolute;left:226px;top:68.31999999999998px;font-family:'Liberation Mono', monospace;font-size:9.4px;line-height:10px;color:#000;font-weight:bold;white-space:pre;opacity:0.85;">47.18251</div>
<div style="position:absolute;left:279.5999999999999px;top:68.31999999999998px;font-family:'Liberation Mono', monospace;font-size:9.4px;line-height:10px;color:#000;font-weight:bold;white-space:pre;opacity:0.85;">13295404+4710570</div>
<div style="position:absolute;left:381.4000000000001px;top:68.31999999999998px;font-family:'Liberation Mono', monospace;font-size:9.4px;line-height:10px;color:#000;font-weight:bold;white-space:pre;opacity:0.85;">16.327</div>
<div style="position:absolute;left:448px;top:68.31999999999998px;font-family:'Liberation Mono', monospace;font-size:9.4px;line-height:10px;color:#000;font-weight:bold;white-space:pre;opacity:0.85;">0.1</div>
<div style="position:absolute;left:0px;top:79.33999999999992px;width:18px;text-align:right;font-family:'Liberation Mono', monospace;font-size:9.2px;line-height:10px;color:#444;">8</div>
<div style="position:absolute;left:32px;top:79.13999999999992px;font-family:'Liberation Mono', monospace;font-size:9.4px;line-height:10px;color:#000;font-weight:bold;white-space:pre;opacity:0.85;">202.44176</div>
<div style="position:absolute;left:98.40000000000009px;top:79.13999999999992px;font-family:'Liberation Mono', monospace;font-size:9.4px;line-height:10px;color:#000;font-weight:bold;white-space:pre;opacity:0.85;">47.17994</div>
<div style="position:absolute;left:159.20000000000005px;top:79.13999999999992px;font-family:'Liberation Mono', monospace;font-size:9.4px;line-height:10px;color:#000;font-weight:bold;white-space:pre;opacity:0.85;">202.44176</div>
<div style="position:absolute;left:226px;top:79.13999999999992px;font-family:'Liberation Mono', monospace;font-size:9.4px;line-height:10px;color:#000;font-weight:bold;white-space:pre;opacity:0.85;">47.17994</div>
<div style="position:absolute;left:279.5999999999999px;top:79.13999999999992px;font-family:'Liberation Mono', monospace;font-size:9.4px;line-height:10px;color:#000;font-weight:bold;white-space:pre;opacity:0.85;">13294602+4710477</div>
<div style="position:absolute;left:381.4000000000001px;top:79.13999999999992px;font-family:'Liberation Mono', monospace;font-size:9.4px;line-height:10px;color:#000;font-weight:bold;white-space:pre;opacity:0.85;">12.261</div>
<div style="position:absolute;left:448px;top:79.13999999999992px;font-family:'Liberation Mono', monospace;font-size:9.4px;line-height:10px;color:#000;font-weight:bold;white-space:pre;opacity:0.85;">0.0</div>
<div style="position:absolute;left:0px;top:90.15999999999985px;width:18px;text-align:right;font-family:'Liberation Mono', monospace;font-size:9.2px;line-height:10px;color:#444;">9</div>
<div style="position:absolute;left:32px;top:89.95999999999985px;font-family:'Liberation Mono', monospace;font-size:9.4px;line-height:10px;color:#000;font-weight:bold;white-space:pre;opacity:0.85;">202.46067</div>
<div style="position:absolute;left:98.40000000000009px;top:89.95999999999985px;font-family:'Liberation Mono', monospace;font-size:9.4px;line-height:10px;color:#000;font-weight:bold;white-space:pre;opacity:0.85;">47.16865</div>
<div style="position:absolute;left:159.20000000000005px;top:89.95999999999985px;font-family:'Liberation Mono', monospace;font-size:9.4px;line-height:10px;color:#000;font-weight:bold;white-space:pre;opacity:0.85;">202.46067</div>
<div style="position:absolute;left:226px;top:89.95999999999985px;font-family:'Liberation Mono', monospace;font-size:9.4px;line-height:10px;color:#000;font-weight:bold;white-space:pre;opacity:0.85;">47.16865</div>
<div style="position:absolute;left:279.5999999999999px;top:89.95999999999985px;font-family:'Liberation Mono', monospace;font-size:9.4px;line-height:10px;color:#000;font-weight:bold;white-space:pre;opacity:0.85;">13295056+4710071</div>
<div style="position:absolute;left:381.4000000000001px;top:89.95999999999985px;font-family:'Liberation Mono', monospace;font-size:9.4px;line-height:10px;color:#000;font-weight:bold;white-space:pre;opacity:0.85;">16.757</div>
<div style="position:absolute;left:448px;top:89.95999999999985px;font-family:'Liberation Mono', monospace;font-size:9.4px;line-height:10px;color:#000;font-weight:bold;white-space:pre;opacity:0.85;">0.1</div>
<div style="position:absolute;left:0px;top:100.98000000000002px;width:18px;text-align:right;font-family:'Liberation Mono', monospace;font-size:9.2px;line-height:10px;color:#444;">10</div>
<div style="position:absolute;left:32px;top:100.78000000000002px;font-family:'Liberation Mono', monospace;font-size:9.4px;line-height:10px;color:#000;font-weight:bold;white-space:pre;opacity:0.85;">202.49538</div>
<div style="position:absolute;left:98.40000000000009px;top:100.78000000000002px;font-family:'Liberation Mono', monospace;font-size:9.4px;line-height:10px;color:#000;font-weight:bold;white-space:pre;opacity:0.85;">47.18459</div>
<div style="position:absolute;left:159.20000000000005px;top:100.78000000000002px;font-family:'Liberation Mono', monospace;font-size:9.4px;line-height:10px;color:#000;font-weight:bold;white-space:pre;opacity:0.85;">202.49538</div>
<div style="position:absolute;left:226px;top:100.78000000000002px;font-family:'Liberation Mono', monospace;font-size:9.4px;line-height:10px;color:#000;font-weight:bold;white-space:pre;opacity:0.85;">47.18459</div>
<div style="position:absolute;left:279.5999999999999px;top:100.78000000000002px;font-family:'Liberation Mono', monospace;font-size:9.4px;line-height:10px;color:#000;font-weight:bold;white-space:pre;opacity:0.85;">13295889+4711045</div>
<div style="position:absolute;left:381.4000000000001px;top:100.78000000000002px;font-family:'Liberation Mono', monospace;font-size:9.4px;line-height:10px;color:#000;font-weight:bold;white-space:pre;opacity:0.85;">16.235</div>
<div style="position:absolute;left:448px;top:100.78000000000002px;font-family:'Liberation Mono', monospace;font-size:9.4px;line-height:10px;color:#000;font-weight:bold;white-space:pre;opacity:0.85;">0.1</div>
<div style="position:absolute;left:0px;top:111.79999999999995px;width:18px;text-align:right;font-family:'Liberation Mono', monospace;font-size:9.2px;line-height:10px;color:#444;">11</div>
<div style="position:absolute;left:32px;top:111.59999999999995px;font-family:'Liberation Mono', monospace;font-size:9.4px;line-height:10px;color:#000;font-weight:bold;white-space:pre;opacity:0.85;">202.47199</div>
<div style="position:absolute;left:98.40000000000009px;top:111.59999999999995px;font-family:'Liberation Mono', monospace;font-size:9.4px;line-height:10px;color:#000;font-weight:bold;white-space:pre;opacity:0.85;">47.19021</div>
<div style="position:absolute;left:159.20000000000005px;top:111.59999999999995px;font-family:'Liberation Mono', monospace;font-size:9.4px;line-height:10px;color:#000;font-weight:bold;white-space:pre;opacity:0.85;">202.47199</div>
<div style="position:absolute;left:226px;top:111.59999999999995px;font-family:'Liberation Mono', monospace;font-size:9.4px;line-height:10px;color:#000;font-weight:bold;white-space:pre;opacity:0.85;">47.19021</div>
<div style="position:absolute;left:279.5999999999999px;top:111.59999999999995px;font-family:'Liberation Mono', monospace;font-size:9.4px;line-height:10px;color:#000;font-weight:bold;white-space:pre;opacity:0.85;">13295327+4711247</div>
<div style="position:absolute;left:381.4000000000001px;top:111.59999999999995px;font-family:'Liberation Mono', monospace;font-size:9.4px;line-height:10px;color:#000;font-weight:bold;white-space:pre;opacity:0.85;">14.998</div>
<div style="position:absolute;left:448px;top:111.59999999999995px;font-family:'Liberation Mono', monospace;font-size:9.4px;line-height:10px;color:#000;font-weight:bold;white-space:pre;opacity:0.85;">0.0</div>
<div style="position:absolute;left:0px;top:122.61999999999989px;width:18px;text-align:right;font-family:'Liberation Mono', monospace;font-size:9.2px;line-height:10px;color:#444;">12</div>
<div style="position:absolute;left:32px;top:122.41999999999989px;font-family:'Liberation Mono', monospace;font-size:9.4px;line-height:10px;color:#000;font-weight:bold;white-space:pre;opacity:0.85;">202.47495</div>
<div style="position:absolute;left:98.40000000000009px;top:122.41999999999989px;font-family:'Liberation Mono', monospace;font-size:9.4px;line-height:10px;color:#000;font-weight:bold;white-space:pre;opacity:0.85;">47.19433</div>
<div style="position:absolute;left:159.20000000000005px;top:122.41999999999989px;font-family:'Liberation Mono', monospace;font-size:9.4px;line-height:10px;color:#000;font-weight:bold;white-space:pre;opacity:0.85;">202.47495</div>
<div style="position:absolute;left:226px;top:122.41999999999989px;font-family:'Liberation Mono', monospace;font-size:9.4px;line-height:10px;color:#000;font-weight:bold;white-space:pre;opacity:0.85;">47.19433</div>
<div style="position:absolute;left:279.5999999999999px;top:122.41999999999989px;font-family:'Liberation Mono', monospace;font-size:9.4px;line-height:10px;color:#000;font-weight:bold;white-space:pre;opacity:0.85;">13295398+4711395</div>
<div style="position:absolute;left:381.4000000000001px;top:122.41999999999989px;font-family:'Liberation Mono', monospace;font-size:9.4px;line-height:10px;color:#000;font-weight:bold;white-space:pre;opacity:0.85;">14.133</div>
<div style="position:absolute;left:448px;top:122.41999999999989px;font-family:'Liberation Mono', monospace;font-size:9.4px;line-height:10px;color:#000;font-weight:bold;white-space:pre;opacity:0.85;">0.0</div>
<div style="position:absolute;left:0px;top:133.43999999999983px;width:18px;text-align:right;font-family:'Liberation Mono', monospace;font-size:9.2px;line-height:10px;color:#444;">13</div>
<div style="position:absolute;left:32px;top:133.23999999999984px;font-family:'Liberation Mono', monospace;font-size:9.4px;line-height:10px;color:#000;font-weight:bold;white-space:pre;opacity:0.85;">202.47405</div>
<div style="position:absolute;left:98.40000000000009px;top:133.23999999999984px;font-family:'Liberation Mono', monospace;font-size:9.4px;line-height:10px;color:#000;font-weight:bold;white-space:pre;opacity:0.85;">47.19329</div>
<div style="position:absolute;left:159.20000000000005px;top:133.23999999999984px;font-family:'Liberation Mono', monospace;font-size:9.4px;line-height:10px;color:#000;font-weight:bold;white-space:pre;opacity:0.85;">202.47405</div>
<div style="position:absolute;left:226px;top:133.23999999999984px;font-family:'Liberation Mono', monospace;font-size:9.4px;line-height:10px;color:#000;font-weight:bold;white-space:pre;opacity:0.85;">47.19329</div>
<div style="position:absolute;left:279.5999999999999px;top:133.23999999999984px;font-family:'Liberation Mono', monospace;font-size:9.4px;line-height:10px;color:#000;font-weight:bold;white-space:pre;opacity:0.85;">13295377+4711358</div>
<div style="position:absolute;left:381.4000000000001px;top:133.23999999999984px;font-family:'Liberation Mono', monospace;font-size:9.4px;line-height:10px;color:#000;font-weight:bold;white-space:pre;opacity:0.85;">14.092</div>
<div style="position:absolute;left:448px;top:133.23999999999984px;font-family:'Liberation Mono', monospace;font-size:9.4px;line-height:10px;color:#000;font-weight:bold;white-space:pre;opacity:0.85;">0.0</div>
<div style="position:absolute;left:0px;top:144.26px;width:18px;text-align:right;font-family:'Liberation Mono', monospace;font-size:9.2px;line-height:10px;color:#444;">14</div>
<div style="position:absolute;left:32px;top:144.06px;font-family:'Liberation Mono', monospace;font-size:9.4px;line-height:10px;color:#000;font-weight:bold;white-space:pre;opacity:0.85;">202.47266</div>
<div style="position:absolute;left:98.40000000000009px;top:144.06px;font-family:'Liberation Mono', monospace;font-size:9.4px;line-height:10px;color:#000;font-weight:bold;white-space:pre;opacity:0.85;">47.19235</div>
<div style="position:absolute;left:159.20000000000005px;top:144.06px;font-family:'Liberation Mono', monospace;font-size:9.4px;line-height:10px;color:#000;font-weight:bold;white-space:pre;opacity:0.85;">202.47266</div>
<div style="position:absolute;left:226px;top:144.06px;font-family:'Liberation Mono', monospace;font-size:9.4px;line-height:10px;color:#000;font-weight:bold;white-space:pre;opacity:0.85;">47.19235</div>
<div style="position:absolute;left:279.5999999999999px;top:144.06px;font-family:'Liberation Mono', monospace;font-size:9.4px;line-height:10px;color:#000;font-weight:bold;white-space:pre;opacity:0.85;">13295343+4711324</div>
<div style="position:absolute;left:381.4000000000001px;top:144.06px;font-family:'Liberation Mono', monospace;font-size:9.4px;line-height:10px;color:#000;font-weight:bold;white-space:pre;opacity:0.85;">12.212</div>
<div style="position:absolute;left:0px;top:155.07999999999993px;width:18px;text-align:right;font-family:'Liberation Mono', monospace;font-size:9.2px;line-height:10px;color:#444;">15</div>
<div style="position:absolute;left:32px;top:154.87999999999994px;font-family:'Liberation Mono', monospace;font-size:9.4px;line-height:10px;color:#000;font-weight:bold;white-space:pre;opacity:0.85;">202.47264</div>
<div style="position:absolute;left:98.40000000000009px;top:154.87999999999994px;font-family:'Liberation Mono', monospace;font-size:9.4px;line-height:10px;color:#000;font-weight:bold;white-space:pre;opacity:0.85;">47.19078</div>
<div style="position:absolute;left:159.20000000000005px;top:154.87999999999994px;font-family:'Liberation Mono', monospace;font-size:9.4px;line-height:10px;color:#000;font-weight:bold;white-space:pre;opacity:0.85;">202.47264</div>
<div style="position:absolute;left:226px;top:154.87999999999994px;font-family:'Liberation Mono', monospace;font-size:9.4px;line-height:10px;color:#000;font-weight:bold;white-space:pre;opacity:0.85;">47.19078</div>
<div style="position:absolute;left:279.5999999999999px;top:154.87999999999994px;font-family:'Liberation Mono', monospace;font-size:9.4px;line-height:10px;color:#000;font-weight:bold;white-space:pre;opacity:0.85;">13295367+4711268</div>
<div style="position:absolute;left:381.4000000000001px;top:154.87999999999994px;font-family:'Liberation Mono', monospace;font-size:9.4px;line-height:10px;color:#000;font-weight:bold;white-space:pre;opacity:0.85;">14.67</div>
<div style="position:absolute;left:448px;top:154.87999999999994px;font-family:'Liberation Mono', monospace;font-size:9.4px;line-height:10px;color:#000;font-weight:bold;white-space:pre;opacity:0.85;">0.0</div>
</div></div>
<div style="position:absolute;left:707.5px;top:636.5px;width:0.8px;height:82px;background:#eee;"></div>
<div style="position:absolute;left:928.4px;top:640px;width:3px;height:20px;background:#c0c0c0;border-radius:1.5px;"></div>
<div style="position:absolute;left:707.5px;top:719.5px;width:100px;height:2.5px;background:#b8b8b8;border-radius:1.2px;"></div>
<div style="position:absolute;left:695.6px;top:724.3px;font-size:4.6px;line-height:4.6px;color:#333;white-space:pre;">Total: 70    Visible: 70    Selected: 0</div>
</body></html>
